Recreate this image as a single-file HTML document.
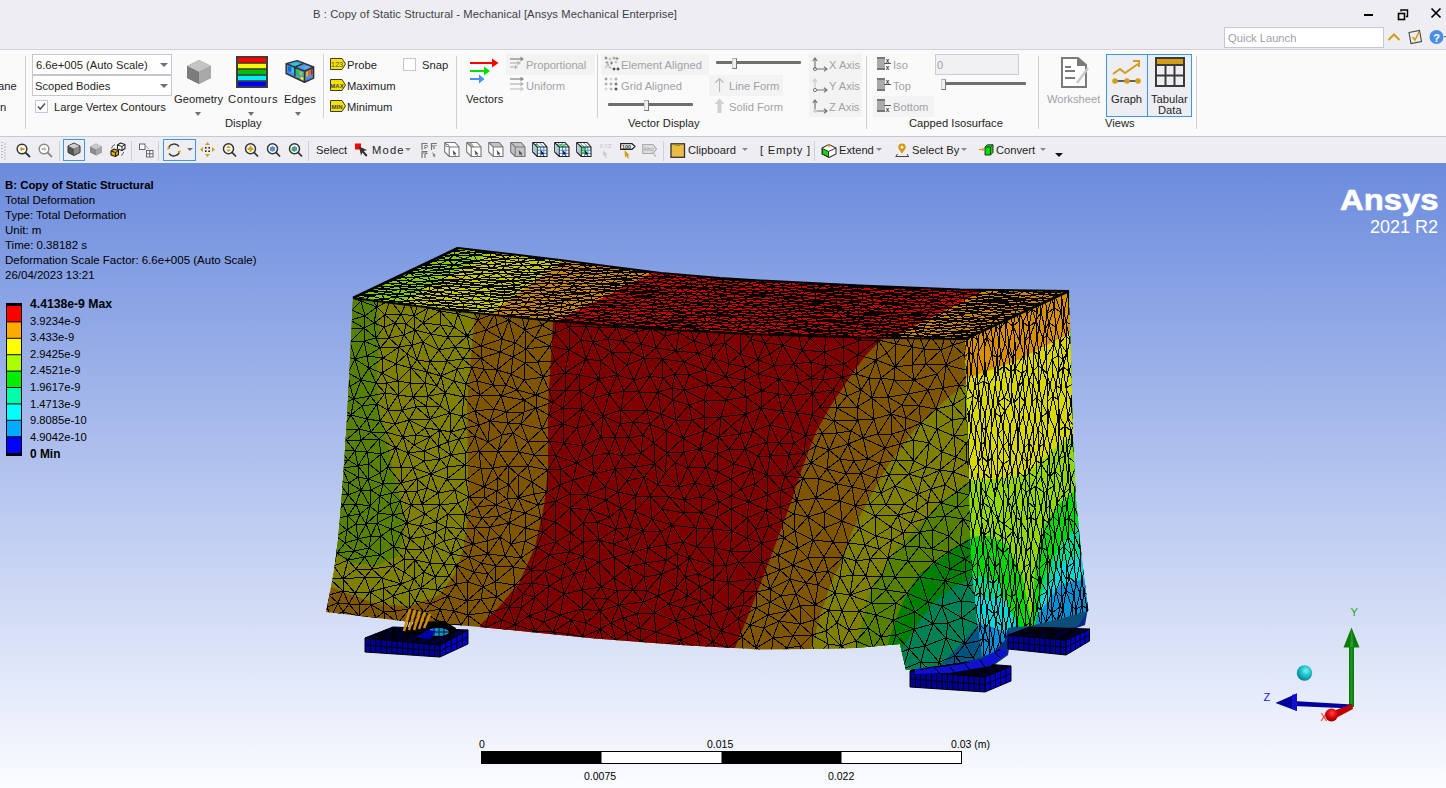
<!DOCTYPE html>
<html><head><meta charset="utf-8">
<style>
*{margin:0;padding:0;box-sizing:border-box}
html,body{width:1446px;height:788px;overflow:hidden;background:#eeeef2;font-family:"Liberation Sans",sans-serif;font-size:11.2px;color:#1e1e1e}
.a{position:absolute;white-space:nowrap}
.t{position:absolute;white-space:nowrap;font-size:11.2px;line-height:12px;color:#1e1e1e}
#title{position:absolute;left:0;top:0;width:1446px;height:49px;background:#eeeef2}
#ribbon{position:absolute;left:0;top:49px;width:1446px;height:88px;background:#fafafa;border-top:1px solid #d2d2d6;border-bottom:1px solid #c8c8cc}
#ribbon>*{margin-top:-50px}
#tb{position:absolute;left:0;top:137px;width:1446px;height:26px;background:#eeeef2;border-bottom:1px solid #f4efe8}
#vp{position:absolute;left:0;top:163px;width:1446px;height:625px;background:linear-gradient(#6b8bdd,#fbfcff);overflow:hidden}
.sep{position:absolute;width:1px;background:#cfcfd6}
.t.gray{color:#a2a2a6}
.dd{position:absolute;background:#fff;border:1px solid #c6c6d2}
.tri{position:absolute;width:0;height:0;border-left:4px solid transparent;border-right:4px solid transparent;border-top:4px solid #707070}
.vt{position:absolute;white-space:nowrap;color:#000;font-size:11.2px;line-height:12px}
</style></head><body>
<div id="title">
 <div class="t" style="left:313px;top:8px;color:#3d3d4a;letter-spacing:0.09px">B : Copy of Static Structural - Mechanical [Ansys Mechanical Enterprise]</div>
 <div class="a" style="left:1364px;top:14px;width:9px;height:2px;background:#000"></div>
 <svg class="a" style="left:1397px;top:8px" width="12" height="13" viewBox="0 0 12 13"><rect x="1.5" y="5.5" width="6" height="6" fill="none" stroke="#000" stroke-width="1.6"/><path d="M4 3.5V2h6.5v6.5H9" fill="none" stroke="#000" stroke-width="1.4"/></svg>
 <svg class="a" style="left:1430px;top:7px" width="12" height="12" viewBox="0 0 12 12"><path d="M1.5 1.5L10.5 10.5M10.5 1.5L1.5 10.5" stroke="#000" stroke-width="1.7"/></svg>
 <div class="a" style="left:1224px;top:27px;width:160px;height:21px;background:#fff;border:1px solid #c6c6d6"></div>
 <div class="t" style="left:1228px;top:32px;color:#a0a0a8">Quick Launch</div>
 <svg class="a" style="left:1387px;top:32px" width="14" height="10" viewBox="0 0 14 10"><path d="M1.5 8L7 2.5L12.5 8" fill="none" stroke="#d19e16" stroke-width="2"/></svg>
 <svg class="a" style="left:1407px;top:29px" width="16" height="16" viewBox="0 0 16 16"><path d="M2 3.5L12.5 1.5L14.5 12.5L4 14.5Z" fill="none" stroke="#444" stroke-width="1.1"/><path d="M5.5 8L8 11L12 3" fill="none" stroke="#d19e16" stroke-width="1.6"/></svg>
 <svg class="a" style="left:1429px;top:29px" width="17" height="16" viewBox="0 0 17 16"><circle cx="7.5" cy="8" r="7" fill="#4a90e2"/><text x="7.5" y="12.5" font-family="Liberation Sans" font-weight="bold" font-size="11" fill="#fff" text-anchor="middle">?</text><path d="M15 7h2l-1 1.5z" fill="#333"/></svg>
</div>
<div id="ribbon">
 <div class="t" style="left:-2px;top:80px">ane</div>
 <div class="t" style="left:0px;top:101px">n</div>
 <div class="sep" style="left:25px;top:56px;height:73px"></div>
 <!-- dropdowns -->
 <div class="dd" style="left:32px;top:54px;width:140px;height:21px"></div>
 <div class="t" style="left:36px;top:59px">6.6e+005 (Auto Scale)</div>
 <div class="tri" style="left:160px;top:63px"></div>
 <div class="dd" style="left:32px;top:75px;width:140px;height:21px"></div>
 <div class="t" style="left:35px;top:80px">Scoped Bodies</div>
 <div class="tri" style="left:160px;top:84px"></div>
 <div class="a" style="left:35px;top:100px;width:13px;height:13px;background:#fff;border:1px solid #c6c6d6"></div>
 <svg class="a" style="left:36px;top:101px" width="11" height="11" viewBox="0 0 11 11"><path d="M2 5.5L4.3 8L9 2.5" fill="none" stroke="#555" stroke-width="1.6"/></svg>
 <div class="t" style="left:54px;top:101px">Large Vertex Contours</div>
 <!-- display group -->
 <svg class="a" style="left:186px;top:59px" width="26" height="26" viewBox="0 0 26 26"><path d="M13 1L25 7V19L13 25L1 19V7Z" fill="#8a8a8a"/><path d="M13 1L25 7L13 13L1 7Z" fill="#c4c4c4"/><path d="M13 13L25 7V19L13 25Z" fill="#a8a8a8"/><path d="M1 7L13 13V25L1 19Z" fill="#7c7c7c"/></svg>
 <div class="t" style="left:174px;top:93px">Geometry</div>
 <div class="tri" style="left:195px;top:112px;border-left-width:3.5px;border-right-width:3.5px"></div>
 <svg class="a" style="left:236px;top:56px" width="32" height="32" viewBox="0 0 32 32"><rect x="0" y="0" width="32" height="32" fill="#3c3c3c"/><rect x="2" y="1.8" width="28" height="4.4" fill="#ff0000"/><rect x="2" y="7.8" width="28" height="4.4" fill="#f8f800"/><rect x="2" y="13.8" width="28" height="4.4" fill="#00c000"/><rect x="2" y="19.8" width="28" height="4.4" fill="#00f0f0"/><rect x="2" y="25.8" width="28" height="4.4" fill="#0000f8"/></svg>
 <div class="t" style="left:228px;top:93px;letter-spacing:0.6px">Contours</div>
 <div class="tri" style="left:248px;top:112px;border-left-width:3.5px;border-right-width:3.5px"></div>
 <svg class="a" style="left:282px;top:56px" width="36" height="30" viewBox="0 0 36 30"><path d="M4.2 7.6L15.2 4.6L31.6 11L22.8 15.2Z" fill="#4a9ae8"/><path d="M7 8L14 6.5L18 8.5L11 10Z" fill="#22ccd0"/><path d="M20 11L26 9.5L28 11.5L23 13Z" fill="#66aaee"/><path d="M4.2 7.6L22.8 15.2L22.5 26.3L4.2 17.5Z" fill="#4a90e8"/><path d="M6 10L9 11V16L6 15Z" fill="#2060e0"/><path d="M10 11.5L12 12.5V17.5L10 16.5Z" fill="#10e0d0"/><path d="M14.5 13.5L17 14.5V18.5L14.5 17.5Z" fill="#20d020"/><path d="M17.5 15L20.5 16V20L17.5 19Z" fill="#a0d010"/><path d="M14.5 19L17 20V23L14.5 22Z" fill="#30d030"/><path d="M18.5 20.5L21.5 21.5V24.5L18.5 23.5Z" fill="#f0f000"/><path d="M22.8 15.2L31.6 11V22.1L22.5 26.3Z" fill="#4a90e8"/><path d="M24 16L26 15V20L24 21Z" fill="#f0b000"/><path d="M26.5 14.5L28.5 13.5V19L26.5 20Z" fill="#ff6010"/><path d="M29 13.5L30.5 12.8V18L29 18.7Z" fill="#e01010"/><path d="M4.2 7.6L15.2 4.6L31.6 11V22.1L22.5 26.3L4.2 17.5Z M4.2 7.6L22.8 15.2L31.6 11M22.8 15.2L22.5 26.3M12.7 11.2L12.9 20.3M12.7 11.2L21.3 7.6" fill="none" stroke="#333" stroke-width="1.5" stroke-linejoin="round"/></svg>
 <div class="t" style="left:284px;top:93px">Edges</div>
 <div class="tri" style="left:295px;top:112px;border-left-width:3.5px;border-right-width:3.5px"></div>
 <div class="t" style="left:225px;top:117px">Display</div>
 <div class="sep" style="left:323px;top:54px;height:64px"></div>
 <!-- probe group -->
 <svg class="a" style="left:330px;top:58px" width="16" height="12" viewBox="0 0 16 12"><path d="M0.5 0.5H12L15.5 6L12 11.5H0.5Z" fill="#f4e200" stroke="#3a3a3a" stroke-width="1"/><text x="7" y="9" font-family="Liberation Sans" font-size="7.5" fill="#555" text-anchor="middle">123</text></svg>
 <div class="t" style="left:347px;top:59px">Probe</div>
 <svg class="a" style="left:330px;top:79px" width="16" height="12" viewBox="0 0 16 12"><path d="M0.5 0.5H12L15.5 6L12 11.5H0.5Z" fill="#f4e200" stroke="#3a3a3a" stroke-width="1"/><text x="7" y="8.5" font-family="Liberation Sans" font-weight="bold" font-size="6" fill="#444" text-anchor="middle">MAX</text></svg>
 <div class="t" style="left:347px;top:80px">Maximum</div>
 <svg class="a" style="left:330px;top:100px" width="16" height="12" viewBox="0 0 16 12"><path d="M0.5 0.5H12L15.5 6L12 11.5H0.5Z" fill="#f4e200" stroke="#3a3a3a" stroke-width="1"/><text x="7" y="8.5" font-family="Liberation Sans" font-weight="bold" font-size="6" fill="#444" text-anchor="middle">MIN</text></svg>
 <div class="t" style="left:347px;top:101px">Minimum</div>
 <div class="a" style="left:403px;top:58px;width:13px;height:13px;background:#fff;border:1px solid #c6c6d6"></div>
 <div class="t" style="left:422px;top:59px">Snap</div>
 <div class="sep" style="left:456px;top:56px;height:73px"></div>
 <!-- vectors -->
 <svg class="a" style="left:469px;top:57px" width="30" height="27" viewBox="0 0 30 27"><path d="M1 6H24" stroke="#ff0000" stroke-width="2"/><path d="M23 1.5L29.5 6L23 10.5Z" fill="#ff0000"/><path d="M1 14H16" stroke="#00e000" stroke-width="2"/><path d="M15 9.5L21 14L15 18.5Z" fill="#00e000"/><path d="M1 22H11" stroke="#4a90f0" stroke-width="2"/><path d="M10 17.5L15.5 22L10 26.5Z" fill="#4a90f0"/></svg>
 <div class="t" style="left:466px;top:93px">Vectors</div>
 <div class="a" style="left:506px;top:54px;width:89px;height:21px;background:#f3f3f3"></div>
 <svg class="a" style="left:510px;top:56px" width="15" height="15" viewBox="0 0 15 15"><path d="M0 3H12" stroke="#8a8a8a" stroke-width="1.3"/><path d="M10.5 0.5L14 3L10.5 5.5Z" fill="#8a8a8a"/><path d="M0 7H9" stroke="#b8b8b8" stroke-width="1.3"/><path d="M7.5 4.5L11 7L7.5 9.5Z" fill="#b8b8b8"/><path d="M0 11H6" stroke="#b8b8b8" stroke-width="1.3"/><path d="M5 8.5L8 11L5 13.5Z" fill="#b8b8b8"/></svg>
 <div class="t gray" style="left:526px;top:59px">Proportional</div>
 <svg class="a" style="left:510px;top:77px" width="15" height="15" viewBox="0 0 15 15"><path d="M0 2H12" stroke="#8a8a8a" stroke-width="1.3"/><path d="M10.5 -0.5L14 2L10.5 4.5Z" fill="#8a8a8a"/><path d="M0 7H12" stroke="#b8b8b8" stroke-width="1.3"/><path d="M10.5 4.5L14 7L10.5 9.5Z" fill="#b8b8b8"/><path d="M0 12H12" stroke="#c8c8c8" stroke-width="1.3"/><path d="M10.5 9.5L14 12L10.5 14.5Z" fill="#c8c8c8"/></svg>
 <div class="t gray" style="left:526px;top:80px">Uniform</div>
 <div class="sep" style="left:597px;top:54px;height:64px"></div>
 <!-- vector display -->
 <div class="a" style="left:601px;top:54px;width:108px;height:21px;background:#f3f3f3"></div>
 <svg class="a" style="left:604px;top:56px" width="16" height="16" viewBox="0 0 16 16"><path d="M0.5 2h3M2 0.5v3" stroke="#777" stroke-width="1"/><path d="M4.5 3h3M6 1.5v3" stroke="#bbb" stroke-width="1"/><path d="M8.5 2h3M10 0.5v3" stroke="#999" stroke-width="1"/><path d="M1.5 6.5h3M3 5.0v3" stroke="#999" stroke-width="1"/><path d="M6.0 7h3M7.5 5.5v3" stroke="#777" stroke-width="1"/><path d="M10.5 6h3M12 4.5v3" stroke="#bbb" stroke-width="1"/><path d="M0.5 11h3M2 9.5v3" stroke="#ccc" stroke-width="1"/><path d="M4.5 11.5h3M6 10.0v3" stroke="#bbb" stroke-width="1"/><path d="M8.5 13h3M10 11.5v3" stroke="#222" stroke-width="1"/><path d="M12.5 13h3M14 11.5v3" stroke="#222" stroke-width="1"/><path d="M11.5 2.5h3M13 1.0v3" stroke="#888" stroke-width="1"/><path d="M2.5 9h3M4 7.5v3" stroke="#aaa" stroke-width="1"/></svg>
 <div class="t gray" style="left:621px;top:59px">Element Aligned</div>
 <svg class="a" style="left:604px;top:77px" width="16" height="16" viewBox="0 0 16 16"><path d="M0.5 2h3M2 0.5v3" stroke="#888" stroke-width="1"/><path d="M5.5 2h3M7 0.5v3" stroke="#ccc" stroke-width="1"/><path d="M10.5 2h3M12 0.5v3" stroke="#999" stroke-width="1"/><path d="M0.5 7h3M2 5.5v3" stroke="#999" stroke-width="1"/><path d="M5.5 7h3M7 5.5v3" stroke="#999" stroke-width="1"/><path d="M10.5 7h3M12 5.5v3" stroke="#555" stroke-width="1"/><path d="M0.5 12h3M2 10.5v3" stroke="#ccc" stroke-width="1"/><path d="M5.5 12h3M7 10.5v3" stroke="#aaa" stroke-width="1"/><path d="M10.5 12h3M12 10.5v3" stroke="#222" stroke-width="1"/></svg>
 <div class="t gray" style="left:621px;top:80px">Grid Aligned</div>
 <div class="a" style="left:608px;top:103px;width:85px;height:3px;background:#6e6e6e;border-radius:1px"></div>
 <div class="a" style="left:644px;top:100px;width:5px;height:11px;background:#f0f0f0;border:1px solid #777;border-top-color:#aaa;border-left-color:#ccc"></div>
 <div class="t" style="left:628px;top:117px">Vector Display</div>
 <div class="a" style="left:716px;top:61px;width:85px;height:3px;background:#6e6e6e;border-radius:1px"></div>
 <div class="a" style="left:732px;top:58px;width:5px;height:11px;background:#f0f0f0;border:1px solid #777;border-top-color:#aaa;border-left-color:#ccc"></div>
 <div class="a" style="left:709px;top:75px;width:74px;height:21px;background:#f3f3f3"></div>
 <svg class="a" style="left:714px;top:77px" width="11" height="16" viewBox="0 0 11 16"><path d="M5.5 1.5V15M1.5 5.5L5.5 1.5L9.5 5.5" fill="none" stroke="#b8b8b8" stroke-width="1.2"/></svg>
 <div class="t gray" style="left:729px;top:80px">Line Form</div>
 <svg class="a" style="left:714px;top:98px" width="11" height="16" viewBox="0 0 11 16"><path d="M5.5 0.5L10.5 6H7.5V15H3.5V6H0.5Z" fill="#d0d0d0"/></svg>
 <div class="t gray" style="left:729px;top:101px">Solid Form</div>
 <div class="a" style="left:809px;top:54px;width:53px;height:63px;background:#f3f3f3"></div>
 <svg class="a" style="left:812px;top:57px" width="16" height="15" viewBox="0 0 16 15"><path d="M3 12V1.5M0.8 4L3 1L5.2 4M4.5 12H14M12 9.8L15 12L12 14.2" fill="none" stroke="#777" stroke-width="1.2"/><circle cx="3" cy="12" r="1.6" fill="none" stroke="#777" stroke-width="1"/></svg>
 <div class="t gray" style="left:829px;top:59px">X Axis</div>
 <svg class="a" style="left:812px;top:78px" width="16" height="15" viewBox="0 0 16 15"><path d="M3 10.5V1.5M0.8 4L3 1L5.2 4" fill="none" stroke="#ccc" stroke-width="1.2"/><path d="M4.5 12H14M12 9.8L15 12L12 14.2" fill="none" stroke="#777" stroke-width="1.2"/><circle cx="3" cy="12" r="1.6" fill="none" stroke="#777" stroke-width="1"/></svg>
 <div class="t gray" style="left:829px;top:80px">Y Axis</div>
 <svg class="a" style="left:812px;top:99px" width="16" height="15" viewBox="0 0 16 15"><path d="M3 10.5V1.5M0.8 4L3 1L5.2 4M4.5 12H14M12 9.8L15 12L12 14.2" fill="none" stroke="#777" stroke-width="1.2"/><circle cx="3" cy="12" r="1.8" fill="#ccc"/></svg>
 <div class="t gray" style="left:829px;top:101px">Z Axis</div>
 <div class="sep" style="left:866px;top:56px;height:73px"></div>
 <!-- capped isosurface -->
 <svg class="a" style="left:877px;top:57px" width="15" height="14" viewBox="0 0 15 14"><rect x="0" y="0" width="8" height="13" fill="#aaa"/><rect x="0" y="0" width="8" height="2" fill="#777"/><rect x="0" y="11" width="8" height="2" fill="#777"/><path d="M7 6.5H14" stroke="#555" stroke-width="1"/><text x="10.5" y="5.5" font-family="Liberation Sans" font-weight="bold" font-size="6.5" fill="#444" text-anchor="middle">x</text><text x="10.5" y="13" font-family="Liberation Sans" font-weight="bold" font-size="6.5" fill="#444" text-anchor="middle">x</text></svg>
 <div class="t gray" style="left:893px;top:59px">Iso</div>
 <div class="a" style="left:935px;top:54px;width:84px;height:21px;background:#f0f0f0;border:1px solid #c8cce0"></div>
 <div class="t gray" style="left:937px;top:59px">0</div>
 <svg class="a" style="left:877px;top:78px" width="15" height="14" viewBox="0 0 15 14"><rect x="0" y="0" width="8" height="13" fill="#aaa"/><rect x="0" y="0" width="8" height="2" fill="#777"/><rect x="0" y="11" width="8" height="2" fill="#777"/><path d="M7 6.5H14" stroke="#555" stroke-width="1"/><text x="10.5" y="5.5" font-family="Liberation Sans" font-weight="bold" font-size="6.5" fill="#444" text-anchor="middle">x</text></svg>
 <div class="t gray" style="left:893px;top:80px">Top</div>
 <div class="a" style="left:941px;top:82px;width:85px;height:3px;background:#6e6e6e;border-radius:1px"></div>
 <div class="a" style="left:941px;top:79px;width:5px;height:11px;background:#f0f0f0;border:1px solid #777;border-top-color:#aaa;border-left-color:#ccc"></div>
 <div class="a" style="left:873px;top:96px;width:61px;height:21px;background:#f3f3f3"></div>
 <svg class="a" style="left:877px;top:99px" width="15" height="14" viewBox="0 0 15 14"><rect x="0" y="0" width="8" height="13" fill="#aaa"/><rect x="0" y="0" width="8" height="2" fill="#777"/><rect x="0" y="11" width="8" height="2" fill="#777"/><path d="M7 6.5H14" stroke="#555" stroke-width="1"/><text x="10.5" y="13" font-family="Liberation Sans" font-weight="bold" font-size="6.5" fill="#444" text-anchor="middle">x</text></svg>
 <div class="t gray" style="left:893px;top:101px">Bottom</div>
 <div class="t" style="left:909px;top:117px">Capped Isosurface</div>
 <div class="sep" style="left:1038px;top:56px;height:73px"></div>
 <!-- views -->
 <svg class="a" style="left:1061px;top:57px" width="29" height="31" viewBox="0 0 29 31"><path d="M1 1H17L25 8V30H1Z" fill="#fff" stroke="#7a7a7a" stroke-width="2"/><path d="M17 1V8H25" fill="#7a7a7a" stroke="#7a7a7a" stroke-width="2"/><path d="M4 10H10M4 14H14M4 21H14" stroke="#7a7a7a" stroke-width="1.8"/><path d="M16 26L27 11" stroke="#c8c8c8" stroke-width="2.5"/></svg>
 <div class="t gray" style="left:1047px;top:93px">Worksheet</div>
 <div class="a" style="left:1106px;top:54px;width:42px;height:63px;background:#eeeef2;border:1px solid #3399ff"></div>
 <div class="a" style="left:1147px;top:54px;width:45px;height:63px;background:#eeeef2;border:1px solid #3399ff"></div>
 <svg class="a" style="left:1111px;top:59px" width="34" height="26" viewBox="0 0 34 26"><path d="M2 15L9 10L14 14L27 5" fill="none" stroke="#d19e16" stroke-width="2"/><path d="M22 2H28V8" fill="none" stroke="#d19e16" stroke-width="2"/><path d="M4 22H26" stroke="#333" stroke-width="1.5"/><circle cx="4" cy="22" r="2.8" fill="#d19e16"/><circle cx="16" cy="22" r="2.8" fill="#d19e16"/><circle cx="27" cy="22" r="2.8" fill="#d19e16"/></svg>
 <div class="t" style="left:1111px;top:93px">Graph</div>
 <svg class="a" style="left:1155px;top:57px" width="30" height="30" viewBox="0 0 30 30"><rect x="1" y="1" width="28" height="28" fill="#eeeef2" stroke="#3a3a3a" stroke-width="2"/><rect x="2" y="2" width="26" height="5" fill="#d19e16"/><path d="M1 8H29M1 18.5H29M10.5 8V29M19.5 8V29" stroke="#3a3a3a" stroke-width="2"/></svg>
 <div class="t" style="left:1151px;top:93px">Tabular</div>
 <div class="t" style="left:1158px;top:104px">Data</div>
 <div class="t" style="left:1105px;top:117px">Views</div>
 <div class="sep" style="left:1196px;top:56px;height:73px"></div>
</div>
<div id="tb">
 <svg class="a" style="left:1px;top:5px" width="6" height="18" viewBox="0 0 6 18"><g fill="#8a8a94"><rect x="0.5" y="0" width="1" height="1"/><rect x="0.5" y="3" width="1" height="1"/><rect x="0.5" y="6" width="1" height="1"/><rect x="0.5" y="9" width="1" height="1"/><rect x="0.5" y="12" width="1" height="1"/><rect x="0.5" y="15" width="1" height="1"/><rect x="3.5" y="1.5" width="1" height="1"/><rect x="3.5" y="4.5" width="1" height="1"/><rect x="3.5" y="7.5" width="1" height="1"/><rect x="3.5" y="10.5" width="1" height="1"/><rect x="3.5" y="13.5" width="1" height="1"/><rect x="3.5" y="16.5" width="1" height="1"/></g></svg>
 <svg class="a" style="left:16px;top:5px" width="16" height="16" viewBox="0 0 16 16"><circle cx="6" cy="7" r="4.8" fill="#fff" stroke="#333" stroke-width="1.5"/><path d="M9.5 10.5L14 15" stroke="#333" stroke-width="1.8"/><path d="M3.5 7L6 4.5V6H8.5V8H6V9.5Z" fill="#d19e16"/></svg>
 <svg class="a" style="left:38px;top:5px" width="16" height="16" viewBox="0 0 16 16"><circle cx="6" cy="7" r="4.8" fill="#fff" stroke="#8a8a8a" stroke-width="1.5"/><path d="M9.5 10.5L14 15" stroke="#8a8a8a" stroke-width="1.8"/><path d="M8.5 7L6 4.5V6H3.5V8H6V9.5Z" fill="#bbb"/></svg>
 <div class="sep" style="left:59px;top:4px;height:20px"></div>
 <div class="a" style="left:63px;top:2px;width:22px;height:22px;border:1px solid #3399ff"></div>
 <svg class="a" style="left:67px;top:5px" width="14" height="14" viewBox="0 0 14 14"><path d="M7 1L13 4V10.5L7 13.5L1 10.5V4Z" fill="#555" stroke="#333" stroke-width="1"/><path d="M7 1.5L12.5 4L7 6.8L1.5 4Z" fill="#cfcfcf"/><path d="M7 7L12.5 4.2V10.3L7 13Z" fill="#8a8a8a"/></svg>
 <svg class="a" style="left:89px;top:6px" width="14" height="13" viewBox="0 0 14 13"><path d="M7 0.5L13 3.5V9.5L7 12.5L1 9.5V3.5Z" fill="#8a8a8a"/><path d="M7 0.5L13 3.5L7 6.5L1 3.5Z" fill="#c8c8c8"/><path d="M7 6.5L13 3.5V9.5L7 12.5Z" fill="#a5a5a5"/></svg>
 <svg class="a" style="left:110px;top:5px" width="16" height="15" viewBox="0 0 16 15"><path d="M7.5 3L10.5 1L15 2.5V6.5L12 8.5L7.5 7Z" fill="#fff" stroke="#222" stroke-width="1.1" stroke-linejoin="round"/><path d="M7.5 3L12 4.5L15 2.5M12 4.5V8.5" fill="none" stroke="#222" stroke-width="1"/><path d="M1 9L4 7L8.5 8.5V12.5L5.5 14.5L1 13Z" fill="#e0a810" stroke="#222" stroke-width="1.1" stroke-linejoin="round"/><path d="M1 9L5.5 10.5L8.5 8.5M5.5 10.5V14.5" fill="none" stroke="#222" stroke-width="1"/><path d="M1.5 6.5Q2 3.5 5 2.5M13.5 10Q13.5 12.5 11 13.5" fill="none" stroke="#555" stroke-width="0.9"/></svg>
 <div class="sep" style="left:131px;top:4px;height:20px"></div>
 <svg class="a" style="left:138px;top:6px" width="17" height="15" viewBox="0 0 17 15"><rect x="1.5" y="1" width="5.5" height="5.5" fill="#fff" stroke="#666" stroke-width="1"/><path d="M8 3L11 6" stroke="#aaa" stroke-width="1"/><rect x="8.5" y="7.5" width="6.5" height="6.5" fill="#fff" stroke="#666" stroke-width="1"/><path d="M11.75 7.5V14M8.5 10.75H15" stroke="#666" stroke-width="1"/></svg>
 <div class="sep" style="left:158px;top:4px;height:20px"></div>
 <div class="a" style="left:163px;top:2px;width:33px;height:22px;border:1px solid #3399ff"></div>
 <svg class="a" style="left:166px;top:5px" width="16" height="16" viewBox="0 0 16 16"><path d="M2.5 6A6 6 0 0 1 13 4.5M13.5 10A6 6 0 0 1 3 11.5" fill="none" stroke="#333" stroke-width="1.3"/><path d="M1 7.5L2.5 4L4.5 7Z" fill="#d19e16"/><path d="M15 8.5L13.5 12L11.5 9Z" fill="#d19e16"/></svg>
 <div class="tri" style="left:187px;top:11px;border-left-width:3px;border-right-width:3px;border-top-width:3.5px"></div>
 <svg class="a" style="left:200px;top:5px" width="15" height="15" viewBox="0 0 15 15"><path d="M7.5 0L10 3H5Z M7.5 15L10 12H5Z M0 7.5L3 5V10Z M15 7.5L12 5V10Z" fill="#d19e16"/><g fill="#222"><rect x="5" y="5" width="1.6" height="1.6"/><rect x="8.4" y="5" width="1.6" height="1.6"/><rect x="5" y="8.4" width="1.6" height="1.6"/><rect x="8.4" y="8.4" width="1.6" height="1.6"/></g></svg>
 <svg class="a" style="left:222px;top:5px" width="16" height="16" viewBox="0 0 16 16"><circle cx="6.5" cy="6.8" r="5" fill="#fff" stroke="#333" stroke-width="1.5"/><path d="M10 10.3L14 14.5" stroke="#333" stroke-width="1.8"/><path d="M6.5 3.5L9 6H4Z M6.5 10L9 7.5H4Z" fill="#d19e16"/></svg>
 <svg class="a" style="left:244px;top:5px" width="16" height="16" viewBox="0 0 16 16"><circle cx="6.5" cy="6.8" r="5" fill="#fff" stroke="#333" stroke-width="1.5"/><path d="M10 10.3L14 14.5" stroke="#333" stroke-width="1.8"/><path d="M6.5 3.8V9.8M3.5 6.8H9.5" stroke="#d19e16" stroke-width="2.2"/></svg>
 <svg class="a" style="left:266px;top:5px" width="16" height="16" viewBox="0 0 16 16"><circle cx="6.5" cy="6.8" r="5" fill="#fff" stroke="#333" stroke-width="1.5"/><path d="M10 10.3L14 14.5" stroke="#333" stroke-width="1.8"/><path d="M6.5 4L9.2 5.4V8.4L6.5 9.8L3.8 8.4V5.4Z" fill="#5a90d0"/></svg>
 <svg class="a" style="left:288px;top:5px" width="16" height="16" viewBox="0 0 16 16"><circle cx="6.5" cy="6.8" r="5" fill="#fff" stroke="#333" stroke-width="1.5"/><path d="M10 10.3L14 14.5" stroke="#333" stroke-width="1.8"/><path d="M6.5 4L9.2 5.4V8.4L6.5 9.8L3.8 8.4V5.4Z" fill="#5a90d0"/><path d="M3.8 5.4L6.5 6.8V9.8L3.8 8.4Z" fill="#22bb22"/></svg>
 <div class="sep" style="left:308px;top:4px;height:20px"></div>
 <div class="t" style="left:316px;top:7px">Select</div>
 <svg class="a" style="left:354px;top:6px" width="16" height="15" viewBox="0 0 16 15"><rect x="1" y="0.5" width="6" height="6" fill="#ff0000"/><path d="M5 3.5L13 7L9.8 8L13.5 12.3L12 13.8L8.3 9.5L7 12.5Z" fill="#333"/></svg>
 <div class="t" style="left:372px;top:7px;letter-spacing:1.2px">Mode</div>
 <div class="tri" style="left:405px;top:11px;border-left-width:3px;border-right-width:3px;border-top-width:3px;border-top-color:#888"></div>
 <svg class="a" style="left:421px;top:5px" width="17" height="17" viewBox="0 0 17 17"><g fill="none" stroke="#777" stroke-width="1.2"><path d="M1 8V1.5H6.5M10.5 8V1.5H16M1 16V9.5H6.5"/><path d="M4 3.5H6.5M4 3.5V7M13 3.5H15.5M13 3.5V7M4 11.5H6.5M4 11.5V16"/></g><path d="M11 3H16V4H12V5H11Z" fill="#aaa"/><path d="M2 10H6V11H3V12H2Z" fill="#aaa"/><ellipse cx="5" cy="4.5" rx="1.5" ry="1.1" fill="#fff" stroke="#777" stroke-width="0.9"/><path d="M11.5 10L15 13.5L13.7 13.6L14.5 15.2L13.8 15.6L13 14L12 15Z" fill="#888"/></svg>
 <svg class="a" style="left:444px;top:5px" width="17" height="16" viewBox="0 0 17 16"><path d="M0.7000000000000002 0.8L1.2000000000000002 0.5H11.0L15.0 5.0H5.2Z" fill="#fff"/><path d="M0.7000000000000002 0.8L5.2 5.0V14.5L0.7000000000000002 10.0Z" fill="#fff"/><path d="M5.2 5.0H15.0V14.5H5.2Z" fill="#fff"/><path d="M0.7000000000000002 0.8L1.2000000000000002 0.5H11.0L15.0 5.0V14.5H5.2L0.7000000000000002 10.0Z M1.0000000000000002 0.8L5.2 5.0H15.0M5.2 5.0V14.5" fill="none" stroke="#777" stroke-width="1.1"/><ellipse cx="3.2" cy="3.5" rx="1.6" ry="1.1" fill="#fff" stroke="#777" stroke-width="0.9"/><path d="M8.7 8.0L12.5 11.8L11.100000000000001 11.9L12.0 13.6L11.2 14.0L10.4 12.3L9.4 13.2Z" fill="#555"/></svg>
 <svg class="a" style="left:466px;top:5px" width="17" height="16" viewBox="0 0 17 16"><path d="M0.7000000000000002 0.8L1.2000000000000002 0.5H11.0L15.0 5.0H5.2Z" fill="#fff"/><path d="M0.7000000000000002 0.8L5.2 5.0V14.5L0.7000000000000002 10.0Z" fill="#fff"/><path d="M5.2 5.0H15.0V14.5H5.2Z" fill="#fff"/><path d="M1.2000000000000002 0.5H5.7L8.2 5.0H5.2Z" fill="#aaa"/><path d="M0.7000000000000002 0.8L1.2000000000000002 0.5H11.0L15.0 5.0V14.5H5.2L0.7000000000000002 10.0Z M1.0000000000000002 0.8L5.2 5.0H15.0M5.2 5.0V14.5" fill="none" stroke="#777" stroke-width="1.1"/><path d="M8.7 8.0L12.5 11.8L11.100000000000001 11.9L12.0 13.6L11.2 14.0L10.4 12.3L9.4 13.2Z" fill="#555"/></svg>
 <svg class="a" style="left:488px;top:5px" width="17" height="16" viewBox="0 0 17 16"><path d="M0.7000000000000002 0.8L1.2000000000000002 0.5H11.0L15.0 5.0H5.2Z" fill="#c4c4c4"/><path d="M0.7000000000000002 0.8L5.2 5.0V14.5L0.7000000000000002 10.0Z" fill="#fff"/><path d="M5.2 5.0H15.0V14.5H5.2Z" fill="#fff"/><path d="M0.7000000000000002 0.8L1.2000000000000002 0.5H11.0L15.0 5.0V14.5H5.2L0.7000000000000002 10.0Z M1.0000000000000002 0.8L5.2 5.0H15.0M5.2 5.0V14.5" fill="none" stroke="#777" stroke-width="1.1"/><path d="M8.7 8.0L12.5 11.8L11.100000000000001 11.9L12.0 13.6L11.2 14.0L10.4 12.3L9.4 13.2Z" fill="#555"/></svg>
 <svg class="a" style="left:510px;top:5px" width="17" height="16" viewBox="0 0 17 16"><path d="M0.7000000000000002 0.8L1.2000000000000002 0.5H11.0L15.0 5.0H5.2Z" fill="#c4c4c4"/><path d="M0.7000000000000002 0.8L5.2 5.0V14.5L0.7000000000000002 10.0Z" fill="#c4c4c4"/><path d="M5.2 5.0H15.0V14.5H5.2Z" fill="#c4c4c4"/><path d="M0.7000000000000002 0.8L1.2000000000000002 0.5H11.0L15.0 5.0V14.5H5.2L0.7000000000000002 10.0Z M1.0000000000000002 0.8L5.2 5.0H15.0M5.2 5.0V14.5" fill="none" stroke="#777" stroke-width="1.1"/><path d="M8.7 8.0L12.5 11.8L11.100000000000001 11.9L12.0 13.6L11.2 14.0L10.4 12.3L9.4 13.2Z" fill="#555"/></svg>
 <svg class="a" style="left:532px;top:5px" width="17" height="16" viewBox="0 0 17 16"><path d="M0.7000000000000002 0.8L1.2000000000000002 0.5H11.0L15.0 5.0H5.2Z" fill="#fff"/><path d="M0.7000000000000002 0.8L5.2 5.0V14.5L0.7000000000000002 10.0Z" fill="#fff"/><path d="M5.2 5.0H15.0V14.5H5.2Z" fill="#fff"/><path d="M8.5 5.0V14.5M11.8 5.0V14.5M5.2 8.2H15.0M5.2 11.4H15.0M3.0 3.5V12.5M3.7 0.5L8.2 5.0M7.2 0.5L11.7 5.0" stroke="#3388ee" stroke-width="0.9" fill="none"/><path d="M3.2 2.7h2.5" stroke="#11cc11" stroke-width="1.6"/><path d="M0.7000000000000002 0.8L1.2000000000000002 0.5H11.0L15.0 5.0V14.5H5.2L0.7000000000000002 10.0Z M1.0000000000000002 0.8L5.2 5.0H15.0M5.2 5.0V14.5" fill="none" stroke="#222" stroke-width="1.1"/><path d="M8.7 8.0L12.5 11.8L11.100000000000001 11.9L12.0 13.6L11.2 14.0L10.4 12.3L9.4 13.2Z" fill="#222"/></svg>
 <svg class="a" style="left:554px;top:5px" width="17" height="16" viewBox="0 0 17 16"><path d="M0.7000000000000002 0.8L1.2000000000000002 0.5H11.0L15.0 5.0H5.2Z" fill="#fff"/><path d="M0.7000000000000002 0.8L5.2 5.0V14.5L0.7000000000000002 10.0Z" fill="#fff"/><path d="M5.2 5.0H15.0V14.5H5.2Z" fill="#fff"/><path d="M8.5 5.0V14.5M11.8 5.0V14.5M5.2 8.2H15.0M5.2 11.4H15.0M3.0 3.5V12.5M3.7 0.5L8.2 5.0M7.2 0.5L11.7 5.0" stroke="#3388ee" stroke-width="0.9" fill="none"/><path d="M2.2 2.6h2.2M6.2 2.6h2.2M10.2 2.6h2.2M3.7 4.2h2.2M7.7 4.2h2.2" stroke="#11cc11" stroke-width="1.4"/><path d="M0.7000000000000002 0.8L1.2000000000000002 0.5H11.0L15.0 5.0V14.5H5.2L0.7000000000000002 10.0Z M1.0000000000000002 0.8L5.2 5.0H15.0M5.2 5.0V14.5" fill="none" stroke="#222" stroke-width="1.1"/><path d="M8.7 8.0L12.5 11.8L11.100000000000001 11.9L12.0 13.6L11.2 14.0L10.4 12.3L9.4 13.2Z" fill="#222"/></svg>
 <svg class="a" style="left:576px;top:5px" width="17" height="16" viewBox="0 0 17 16"><path d="M0.7000000000000002 0.8L1.2000000000000002 0.5H11.0L15.0 5.0H5.2Z" fill="#fff"/><path d="M0.7000000000000002 0.8L5.2 5.0V14.5L0.7000000000000002 10.0Z" fill="#fff"/><path d="M5.2 5.0H15.0V14.5H5.2Z" fill="#fff"/><path d="M8.5 5.0V14.5M11.8 5.0V14.5M5.2 8.2H15.0M5.2 11.4H15.0M3.0 3.5V12.5M3.7 0.5L8.2 5.0M7.2 0.5L11.7 5.0" stroke="#3388ee" stroke-width="0.9" fill="none"/><path d="M6.2 6.0h1.6M8.7 6.0h1.6M6.2 8.5h1.6M8.7 8.5h1.6M6.2 11.0h1.6M8.7 11.0h1.6M3.7 4.0h1.6" stroke="#11cc11" stroke-width="1.8"/><path d="M0.7000000000000002 0.8L1.2000000000000002 0.5H11.0L15.0 5.0V14.5H5.2L0.7000000000000002 10.0Z M1.0000000000000002 0.8L5.2 5.0H15.0M5.2 5.0V14.5" fill="none" stroke="#222" stroke-width="1.1"/><path d="M8.7 8.0L12.5 11.8L11.100000000000001 11.9L12.0 13.6L11.2 14.0L10.4 12.3L9.4 13.2Z" fill="#222"/></svg>
 <svg class="a" style="left:597px;top:6px" width="17" height="16" viewBox="0 0 17 16"><text x="8.5" y="4.5" font-family="Liberation Sans" font-size="5" fill="#bbb" text-anchor="middle">X.Y.Z</text><path d="M6 7L10.5 11.5L8.8 11.8L10 14.5L8.8 15L7.6 12.3L6.3 13.3Z" fill="#ccc"/></svg>
 <svg class="a" style="left:620px;top:6px" width="16" height="16" viewBox="0 0 16 16"><path d="M0.7 0.7H12L15 3.5L12 6.3H0.7Z" fill="#fff" stroke="#222" stroke-width="1.2"/><text x="6.5" y="5.5" font-family="Liberation Sans" font-weight="bold" font-size="5.5" fill="#222" text-anchor="middle">100</text><path d="M4.5 7L9.5 12.3L7.8 12.5L9 15L7.8 15.5L6.5 13L5 14.5Z" fill="#d19e16"/></svg>
 <svg class="a" style="left:642px;top:6px" width="16" height="16" viewBox="0 0 16 16"><path d="M0.7 1.5H11L14.5 6L11 10.5H0.7Z" fill="#ddd" stroke="#aaa" stroke-width="1.1"/><text x="6.5" y="8" font-family="Liberation Sans" font-size="6" fill="#999" text-anchor="middle">Abc</text><path d="M10 9L14 13.5" stroke="#bbb" stroke-width="1.5"/></svg>
 <div class="sep" style="left:663px;top:4px;height:20px"></div>
 <svg class="a" style="left:670px;top:6px" width="16" height="15" viewBox="0 0 16 15"><rect x="1" y="0.8" width="13.5" height="13.5" fill="#e9bd45" stroke="#333" stroke-width="1.3"/><path d="M5 1.5H10.5V3H5Z" fill="#b08820"/></svg>
 <div class="t" style="left:688px;top:7px">Clipboard</div>
 <div class="tri" style="left:742px;top:11px;border-left-width:3px;border-right-width:3px;border-top-width:3px;border-top-color:#888"></div>
 <div class="t" style="left:760px;top:7px;letter-spacing:0.75px">[ Empty ]</div>
 <div class="sep" style="left:814px;top:4px;height:20px"></div>
 <svg class="a" style="left:821px;top:5px" width="16" height="16" viewBox="0 0 16 16"><path d="M1 6L8 2.5L15 6V12L8 15.5L1 12Z" fill="#fff" stroke="#333" stroke-width="1.1"/><path d="M1.5 6.5L7.5 9.5V15L1.5 12Z" fill="#00dd00" stroke="#333" stroke-width="1"/><path d="M7.5 9.5L15 6" stroke="#333" stroke-width="1"/><path d="M8 2V5.5M6.3 3.75H9.7" stroke="#d19e16" stroke-width="1.2"/></svg>
 <div class="t" style="left:839px;top:7px">Extend</div>
 <div class="tri" style="left:876px;top:11px;border-left-width:3px;border-right-width:3px;border-top-width:3px;border-top-color:#888"></div>
 <svg class="a" style="left:895px;top:6px" width="15" height="15" viewBox="0 0 15 15"><path d="M7 10.5C4 6.5 3.2 5.5 3.2 4.2A3.8 3.8 0 0 1 10.8 4.2C10.8 5.5 10 6.5 7 10.5Z" fill="#d19e16"/><circle cx="7" cy="4.2" r="1.3" fill="#fff"/><path d="M0.5 13.5H14M1 13.5L2.5 11M13.5 13.5L12 11" stroke="#444" stroke-width="1" fill="none"/></svg>
 <div class="t" style="left:912px;top:7px">Select By</div>
 <div class="tri" style="left:961px;top:11px;border-left-width:3px;border-right-width:3px;border-top-width:3px;border-top-color:#888"></div>
 <svg class="a" style="left:979px;top:7px" width="15" height="12" viewBox="0 0 15 12"><path d="M0 5.5H4" stroke="#d19e16" stroke-width="1.2"/><path d="M3.5 3.5L5.5 5.5L3.5 7.5Z" fill="#d19e16"/><path d="M6 3L8.5 0.8H14V8.5L11.5 11H6Z" fill="#00dd00" stroke="#333" stroke-width="1"/><path d="M6 3H11.5V11M11.5 3L14 0.8" fill="none" stroke="#333" stroke-width="1"/></svg>
 <div class="t" style="left:996px;top:7px">Convert</div>
 <div class="tri" style="left:1040px;top:11px;border-left-width:3px;border-right-width:3px;border-top-width:3px;border-top-color:#888"></div>
 <div class="tri" style="left:1055px;top:16px;border-left-width:4px;border-right-width:4px;border-top-width:4.5px;border-top-color:#111"></div>
</div>
<div id="vp">
<svg class="a" style="left:0;top:0" width="1446" height="625" viewBox="0 163 1446 625">
<defs>
<clipPath id="cf"><polygon points="353,298 400,304 476,313 553,321 660,329.5 760,334.5 860,337.5 965,339 968,450 971,560 976,613 982,657 960,662 941,665 906,670 900,644 856,648 811,649 760,649.5 680,645 595,638.5 530,632 469,626 411,622 326,612 330,592 334,571 338,540 341,506 344,465 347,419 350,360"/></clipPath>
<clipPath id="ct"><polygon points="353,298 400,304 476,313 553,321 660,329.5 760,334.5 860,337.5 965,339 1069,291 960,289.5 860,285.5 760,280.5 720,278 661,273 610,266.5 560,260 510,254 458,248"/></clipPath>
<clipPath id="cr"><polygon points="965,339 1069,291 1071,360 1073,440 1076,501 1082,560 1088.5,611 1060,619 1030,626 1008,628 1005,640 994,652 982,657 976,613 971,560 968,450"/></clipPath>
</defs>
<polygon points="970,600 1008,622 1088,608 1085,625 1060,634 1010,642 1008,655 990,668 941,674 912,674 909,660" fill="#0a2a8a" />
<polygon points="1008,628 1088,611 1078,626 1040,636 1012,641" fill="#0d4d7a" />
<polygon points="365,638 393,627 468,630 440,645" fill="#0000b8" />
<polygon points="365,638 440,645 440,657 365,652" fill="#000094" />
<polygon points="440,645 468,630 468,644 440,657" fill="#0000c8" />
<path d="M365.0 638.0L365.0 652.0M370.4 638.5L370.4 652.4M375.7 639.0L375.7 652.7M381.1 639.5L381.1 653.1M386.4 640.0L386.4 653.4M391.8 640.5L391.8 653.8M397.1 641.0L397.1 654.1M402.5 641.5L402.5 654.5M407.9 642.0L407.9 654.9M413.2 642.5L413.2 655.2M418.6 643.0L418.6 655.6M423.9 643.5L423.9 655.9M429.3 644.0L429.3 656.3M434.6 644.5L434.6 656.6M440.0 645.0L440.0 657.0M365.0 638.0L440.0 645.0M365.0 645.0L440.0 651.0M365.0 652.0L440.0 657.0M440.0 645.0L440.0 657.0M445.6 642.0L445.6 654.4M451.2 639.0L451.2 651.8M456.8 636.0L456.8 649.2M462.4 633.0L462.4 646.6M468.0 630.0L468.0 644.0M440.0 645.0L468.0 630.0M440.0 651.0L468.0 637.0M440.0 657.0L468.0 644.0M365.0 638.0L440.0 645.0M367.0 637.2L442.0 643.9M369.0 636.4L444.0 642.9M371.0 635.6L446.0 641.8M373.0 634.9L448.0 640.7M375.0 634.1L450.0 639.6M377.0 633.3L452.0 638.6M379.0 632.5L454.0 637.5M381.0 631.7L456.0 636.4M383.0 630.9L458.0 635.4M385.0 630.1L460.0 634.3M387.0 629.4L462.0 633.2M389.0 628.6L464.0 632.1M391.0 627.8L466.0 631.1M393.0 627.0L468.0 630.0M365.0 638.0L393.0 627.0M380.0 639.4L408.0 627.6M395.0 640.8L423.0 628.2M410.0 642.2L438.0 628.8M425.0 643.6L453.0 629.4M440.0 645.0L468.0 630.0" stroke="#000" stroke-width="1" fill="none"/>
<polygon points="1008,635 1030,627 1089.5,629 1066,640" fill="#0000b8" />
<polygon points="1008,635 1066,640 1066,655 1008,649" fill="#000094" />
<polygon points="1066,640 1089.5,629 1089.5,641 1066,655" fill="#0000c8" />
<path d="M1008.0 635.0L1008.0 649.0M1013.3 635.5L1013.3 649.5M1018.5 635.9L1018.5 650.1M1023.8 636.4L1023.8 650.6M1029.1 636.8L1029.1 651.2M1034.4 637.3L1034.4 651.7M1039.6 637.7L1039.6 652.3M1044.9 638.2L1044.9 652.8M1050.2 638.6L1050.2 653.4M1055.5 639.1L1055.5 653.9M1060.7 639.5L1060.7 654.5M1066.0 640.0L1066.0 655.0M1008.0 635.0L1066.0 640.0M1008.0 642.0L1066.0 647.5M1008.0 649.0L1066.0 655.0M1066.0 640.0L1066.0 655.0M1070.7 637.8L1070.7 652.2M1075.4 635.6L1075.4 649.4M1080.1 633.4L1080.1 646.6M1084.8 631.2L1084.8 643.8M1089.5 629.0L1089.5 641.0M1066.0 640.0L1089.5 629.0M1066.0 647.5L1089.5 635.0M1066.0 655.0L1089.5 641.0M1008.0 635.0L1066.0 640.0M1010.0 634.3L1068.1 639.0M1012.0 633.5L1070.3 638.0M1014.0 632.8L1072.4 637.0M1016.0 632.1L1074.5 636.0M1018.0 631.4L1076.7 635.0M1020.0 630.6L1078.8 634.0M1022.0 629.9L1081.0 633.0M1024.0 629.2L1083.1 632.0M1026.0 628.5L1085.2 631.0M1028.0 627.7L1087.4 630.0M1030.0 627.0L1089.5 629.0M1008.0 635.0L1030.0 627.0M1019.6 636.0L1041.9 627.4M1031.2 637.0L1053.8 627.8M1042.8 638.0L1065.7 628.2M1054.4 639.0L1077.6 628.6M1066.0 640.0L1089.5 629.0" stroke="#000" stroke-width="1" fill="none"/>
<polygon points="910,671 935,660 1011,666 985,677" fill="#0000b8" />
<polygon points="910,671 985,677 985,692 910,687" fill="#000094" />
<polygon points="985,677 1011,666 1011,681 985,692" fill="#0000c8" />
<path d="M910.0 671.0L910.0 687.0M915.4 671.4L915.4 687.4M920.7 671.9L920.7 687.7M926.1 672.3L926.1 688.1M931.4 672.7L931.4 688.4M936.8 673.1L936.8 688.8M942.1 673.6L942.1 689.1M947.5 674.0L947.5 689.5M952.9 674.4L952.9 689.9M958.2 674.9L958.2 690.2M963.6 675.3L963.6 690.6M968.9 675.7L968.9 690.9M974.3 676.1L974.3 691.3M979.6 676.6L979.6 691.6M985.0 677.0L985.0 692.0M910.0 671.0L985.0 677.0M910.0 679.0L985.0 684.5M910.0 687.0L985.0 692.0M985.0 677.0L985.0 692.0M990.2 674.8L990.2 689.8M995.4 672.6L995.4 687.6M1000.6 670.4L1000.6 685.4M1005.8 668.2L1005.8 683.2M1011.0 666.0L1011.0 681.0M985.0 677.0L1011.0 666.0M985.0 684.5L1011.0 673.5M985.0 692.0L1011.0 681.0M910.0 671.0L985.0 677.0M911.8 670.2L986.9 676.2M913.6 669.4L988.7 675.4M915.4 668.6L990.6 674.6M917.1 667.9L992.4 673.9M918.9 667.1L994.3 673.1M920.7 666.3L996.1 672.3M922.5 665.5L998.0 671.5M924.3 664.7L999.9 670.7M926.1 663.9L1001.7 669.9M927.9 663.1L1003.6 669.1M929.6 662.4L1005.4 668.4M931.4 661.6L1007.3 667.6M933.2 660.8L1009.1 666.8M935.0 660.0L1011.0 666.0M910.0 671.0L935.0 660.0M925.0 672.2L950.2 661.2M940.0 673.4L965.4 662.4M955.0 674.6L980.6 663.6M970.0 675.8L995.8 664.8M985.0 677.0L1011.0 666.0" stroke="#000" stroke-width="1" fill="none"/>
<polygon points="915,668 941,667 962,664 984,659 1000,648 1008,652 990,666 950,673 915,674" fill="#1010d0" />
<path d="M920 670L1000 650M935 668L940 674M950 667L955 673M965 664L970 670M980 660L985 667M995 652L1000 658" stroke="#000" stroke-width="1" fill="none"/>
<g clip-path="url(#ct)">
<polygon points="340,240 1080,240 1080,345 340,345" fill="#c98600" />
<polygon points="340,240 560,240 560,262 490,314 340,345" fill="#c9c900" />
<polygon points="340,240 490,240 490,253 400,303 340,345" fill="#86c900" />
<polygon points="650,240 650,274 556,321 556,345 895,345 895,336 983,291 983,240" fill="#c90000" />
</g>
<g clip-path="url(#cf)">
<polygon points="320,290 1000,290 1000,700 320,700" fill="#805500" />
<polygon points="475,290 475,313 471,358 467,404 468,470 469,505 464,547 455,574 439,595 411,606 377,604 343,592 329,586 320,584 320,290" fill="#808000" />
<polygon points="377,290 377,300 380,336 377,370 378,404 386,438 393,470 402,506 404,535 398,556 377,565 350,563 338,556 320,550 320,290" fill="#558000" />
<polygon points="553,290 553,322 551,358 548,404 548,470 544,506 535,547 519,583 498,608 480,625 470,700 730,700 735,648 748,616 762,580 776,543 790,505 803,466 811,445 816,432 830,407 842,389 854,371 866,355 882,339 882,290" fill="#800000" />
<polygon points="1000,370 968,382 942,403 913,432 889,464 869,499 851,534 843,560 832,580 820,616 811,649 805,700 1000,700" fill="#808000" />
<polygon points="1000,475 968,482 940,502 918,527 897,548 876,580 867,600 864,616 856,648 850,700 1000,700" fill="#558000" />
<polygon points="1000,530 968,539 940,559 918,575 904,600 894,624 888,644 880,700 1000,700" fill="#008000" />
<polygon points="1000,570 977,575 954,587 936,600 920,620 900,652 895,700 1000,700" fill="#008055" />
<polygon points="1000,615 979,624 961,644 941,664 930,700 1000,700" fill="#005580" />
</g>
<g clip-path="url(#cr)">
<polygon points="960,285 1100,285 1100,700 960,700" fill="#0090d9" />
<polygon points="960,285 1100,285 1100,575 1060,585 1040,612 1005,632 990,626 960,620" fill="#00d9d9" />
<polygon points="960,285 1100,285 1100,545 1060,565 1045,590 1020,605 1000,600 960,594" fill="#00d990" />
<polygon points="960,285 1100,285 1100,522 1078,525 1059,547 1045,575 1035,626 1020,628 1010,610 998,580 960,572" fill="#00d900" />
<polygon points="960,285 1100,285 1100,485 1076,490 1059,504 1045,525 1036,560 1031,620 1022,575 1006,544 990,536 960,537" fill="#90d900" />
<polygon points="960,285 1100,285 1100,428 1073,435 1055,448 1029,473 1006,478 960,481" fill="#d9d900" />
<polygon points="960,285 1100,285 1100,325 1070,333 1016,361 965,379 960,380" fill="#d99000" />
<polygon points="1008,628 1030,626 1060,619 1088.5,611 1080,622 1050,632 1010,640" fill="#00406a" />
</g>
<path clip-path="url(#cf)" d="M987 292 975 299 956 307 941 308 935 325 949 322 956 307 960 288 975 299 974 285 896 285 829 286 769 286 703 286 671 290 657 306 647 315 640 298 657 306 666 317 689 324 685 309 666 317 647 315 627 317 640 298 625 301 627 317 636 332 647 315 651 328 641 344 631 352 622 341 641 344 656 348 676 351 698 353 713 358 729 364 746 367 740 354 740 330 746 314 738 303 735 288 703 286 698 311 689 324 704 326 694 341 689 324 679 333 676 351 694 341 698 353 684 362 689 375 708 385 726 400 721 417 731 426 719 437 721 417 746 414 753 431 770 425 761 408 753 431 740 434 731 426 746 414 761 408 762 391 744 380 746 367 758 374 774 366 770 354 758 360 774 366 794 364 811 378 799 383 794 364 802 350 798 332 815 318 793 317 773 317 790 304 793 317 798 332 776 332 773 317 762 307 746 314 730 312 738 303 751 300 746 314 756 327 773 317 775 300 790 304 783 289 769 286 762 307 775 300 769 286 896 285 898 300 914 307 912 293 898 300 881 305 869 326 856 322 864 311 869 326 878 340 876 360 856 374 842 377 833 390 820 407 812 415 806 436 816 446 829 450 837 433 822 433 829 450 811 463 816 446 822 433 806 436 794 443 789 455 785 476 803 478 819 479 811 463 803 478 797 501 808 517 794 514 797 501 781 490 785 476 794 468 789 455 779 443 770 425 782 411 761 408 746 397 762 391 758 374 744 380 746 397 726 400 746 414 746 397 733 388 708 385 684 390 689 375 675 374 684 390 689 405 692 420 676 420 673 400 661 414 647 410 658 392 661 414 676 420 689 405 704 400 708 385 705 370 698 353 711 346 704 326 717 317 698 311 685 309 673 302 657 306 654 285 703 286 712 305 717 317 724 329 704 326 698 311 712 305 730 312 740 330 751 339 740 354 729 364 725 343 740 330 724 329 725 343 713 358 711 346 694 341 679 333 666 317 651 328 656 348 644 358 631 352 627 365 617 375 599 379 580 391 566 390 553 402 536 395 517 390 524 380 525 363 538 362 555 361 565 373 566 390 563 408 580 391 593 398 599 379 609 394 617 375 601 361 599 379 586 359 593 342 599 328 586 326 593 342 601 361 586 359 565 373 549 390 553 402 563 408 563 424 564 443 577 463 594 474 615 469 609 453 594 474 587 495 570 494 556 501 538 505 518 498 518 475 508 466 528 466 518 475 532 482 518 498 534 494 538 505 541 518 556 501 570 508 571 533 583 542 583 556 599 540 583 542 583 523 571 533 556 542 537 547 525 541 511 544 500 537 487 541 473 544 463 529 456 538 473 544 488 554 487 541 490 527 482 518 496 505 477 507 482 518 465 515 477 507 485 498 484 487 466 480 455 490 440 505 422 504 427 488 417 479 406 491 392 493 390 504 378 513 370 506 371 490 368 479 361 490 371 490 380 496 370 506 366 524 356 524 348 516 347 530 356 524 360 514 370 506 361 490 349 483 358 477 368 479 358 466 367 452 381 454 379 439 367 452 355 451 346 440 359 429 367 419 377 404 370 396 361 380 355 359 340 355 323 352 312 362 324 370 311 373 310 385 310 450 311 543 314 522 317 534 324 527 314 522 325 514 334 519 348 516 343 505 334 519 347 530 345 543 354 551 348 560 343 579 343 591 329 578 322 570 311 567 311 556 322 570 312 580 329 578 343 579 356 569 348 560 337 553 354 551 365 557 348 560 334 566 322 570 321 551 311 543 317 534 326 540 311 543 314 479 328 484 327 473 333 460 323 452 310 450 314 479 314 522 318 505 325 514 333 504 334 519 336 536 347 530 358 539 356 524M987 292 974 285 998 285 896 285 869 291 864 311 881 305 869 291 844 290 829 286 824 300 815 318 810 338 798 332 783 345 802 350 824 352 843 347 843 332 856 322 845 305 864 311 855 297 869 291 884 291 881 305 890 325 898 300 884 291 896 285 844 290 824 300 845 305 844 290 855 297 845 305 832 316 856 322 859 341 843 347 844 364 856 374 869 378 872 398 857 407 874 419 858 420 857 407 861 390 856 374 858 355 843 347 827 331 815 318 804 302 790 304 804 288 829 286M987 292 998 285 1003 301 998 316 979 323 969 312 956 307 963 325 979 323 985 309 998 316 1002 330 1003 350 1004 416 990 422 974 434 954 436 965 418 974 434 979 411 990 422 1003 428 1004 472 1004 416 1003 428 997 442 990 422 984 442 974 434 966 443 954 436 942 452 940 470 953 472 957 492 941 503 927 518 945 516 941 503 928 502 927 518 911 523 898 515 904 504 895 486 881 493 889 475 895 486 909 474 896 460 889 475 909 474 922 478 940 470 945 485 941 503 957 507 969 495 977 504 963 519 945 516 957 507 963 519 975 537 989 542 989 522 1000 515 1003 533 989 542 975 551 975 537 989 522 977 504 982 488 969 495 957 492 957 507 977 504 990 499 1000 515 1002 491 990 499 982 488 984 471 979 454 984 442 997 442 1004 472 1005 664 1004 416 1003 395 1001 375 986 375 977 360 983 346 970 340 979 323 989 331 998 316M987 292 985 309 975 299 969 312 985 309 1003 301 1004 416 992 407 990 422M987 292 1003 301 1002 330 989 331 983 346 992 364 977 360 970 340 953 345 946 334 935 325 931 337 924 349 926 364 937 374 914 380 894 380 888 397 872 398 874 419 863 438 858 420 837 408 857 407 847 396 842 377 861 390 872 398 881 378 894 380 895 367 914 380 926 364 912 365 914 380 908 394 894 380M728 668 728 648 713 642 709 627 711 614 729 609 743 605 757 592 770 589 781 596 796 594 800 606 815 605 835 593 850 595 859 611 872 603 850 595 842 611 835 593 828 571 815 573 824 557 828 571 818 585 815 605 814 620 800 606 800 624 779 621 768 615 750 625 738 619 743 605 743 591 729 609 728 582 739 562 730 551 747 538 761 543 784 538 769 526 761 543 762 562 739 562 726 566 730 551 715 548 712 529 696 528 684 513 669 497 658 485 655 464 654 443 643 435 633 422 647 410 650 424 661 414 666 431 654 443 650 424 643 435 629 438 633 422 621 410 647 410 639 392 658 392 650 376 634 380 617 375 611 352 631 352M728 668 733 685 445 685 603 685 518 684 445 685 496 683 491 672 477 657 465 669 465 653 468 636 452 635 438 637 446 646 452 635 446 624 438 637 421 641 407 646 413 661 422 672 405 669 413 661 396 651 407 646 394 638 386 629 370 633 370 646 349 647 348 664 357 673 346 679 348 664 338 671 323 666 311 672 311 646 322 635 320 652 332 648 322 635 330 628 321 622 322 635 311 626 311 567 312 580 311 626 311 646 320 652 323 666 332 648 349 647 357 657 357 673 358 685 445 685 436 678 422 672 430 661 413 661 419 652 407 646 410 636 398 623 395 611 409 609 409 591 415 601 409 609 398 623 386 629 376 618 371 605 360 604 349 604 343 591 329 595 329 578 334 566 343 579 365 577 382 578 384 588 401 584 382 578 372 569 356 569 365 577 372 569 365 557 356 569M385 393 370 396 376 383 361 380 354 399 370 396 362 406 377 404 380 421 395 424 403 437 408 453 401 467 413 468 408 453 414 445 403 437 416 435 430 437 438 446 440 459 431 474 413 468 417 479 431 474 427 488 438 493 455 490 447 479 466 480 465 465 466 453 479 451 465 465 451 455 466 453 475 436 466 428 462 416 479 425 466 428 451 432 462 416 450 413 440 406 426 406 416 407 413 397 425 383 411 368 410 383 425 383 428 396 440 406 445 393 454 381 457 369 463 359 470 349 455 347 439 350 430 362 427 372 411 368 417 360 430 362 423 342 439 350 431 334 423 323 428 308 419 301 434 298 434 286 420 288 419 301 414 316 401 314 395 323 384 327 376 338 380 348 383 358 399 347 380 348 364 341 355 359 367 356 383 358 382 373 376 383 387 383 382 373 396 364 411 368 407 354 399 347 389 338 395 323 406 324 401 314 385 315 395 323 404 335 399 347 396 364 383 358 369 368 361 380 350 386 354 399 351 415 367 419 380 421 388 410 395 424 386 432 379 439 371 432 367 419 362 406 351 415 359 429 342 430 346 440 332 440 327 428 311 415 310 385 313 401 327 399 322 388 324 370 329 360 340 355 335 342 323 352 329 360 312 362 311 373 322 388 310 385 310 431 310 450 310 684 311 672 320 677 323 666 311 662 311 672M385 393 377 404 388 410 398 395 410 383 413 397 426 406 428 396 445 393 437 386 425 383 427 372 417 360 423 342 431 334 441 325 454 327 467 336 470 349 481 358 484 369 497 370 481 358 500 352 513 357 525 363 511 374 517 390 524 400 536 408 542 429 528 442 521 424 542 429 563 424 582 409 580 391 579 375 599 379M385 393 376 383 369 368 355 359 348 373 361 380M448 514 440 505 458 503 455 490 469 497 484 487 493 468 508 466 519 452 528 442 549 441 564 443 556 456 577 463 561 469 556 456 549 441 542 429 549 415 553 402 536 408 521 424 508 423 490 421 494 409 480 395 475 411 494 409 501 396 517 390 506 385 497 370 513 357 515 343 525 330 509 320 495 313 497 293 472 291 485 294 497 293 483 306 495 313 478 320 483 306 485 294 470 305 472 291 458 291 446 287 472 291 511 290 497 293 505 305 495 313 486 330 478 320 467 336 455 347 463 359 481 358 481 346 470 349M448 514 463 529 465 515 458 503 469 497 477 507M538 362 526 349 525 363 543 377 538 362 550 346 555 361 543 377 524 380 511 374 513 357 526 349 525 330 532 311 534 300 523 295 541 286 546 299 532 311 542 325 555 333 569 327 569 350 555 361M609 453 601 437 583 446 577 463 573 480 594 474 605 487 615 469 618 492 621 508 635 511 650 496 658 485 679 487 688 468 706 467 700 449 688 468 684 452 700 449 717 454 706 467 695 483 688 468 675 463 679 487 684 500 669 497 650 496 652 519 635 511 630 527 627 539 633 552 645 563 644 577 647 591 658 596 669 604 676 621 656 632 641 641 657 646 658 661 654 673 632 671 615 661 617 679 603 685 701 684 679 678 699 670 701 684 733 685 603 685 645 684 701 684 665 680 679 678 690 659 699 670 701 650 713 642 721 631 728 648 742 637 750 625 756 648 758 664 771 673 759 679 758 664 744 674 759 679 733 685 786 680 771 673 782 662 799 659 814 659 812 635 814 620 829 610 815 605 806 583 815 573 818 585 835 593 829 610 842 611 859 611 876 615 872 603 886 590 882 576 888 558 908 561 920 577 945 581 961 601 962 618 981 603 961 601 968 586 945 581 965 572 968 586 981 603 1000 594 1003 612 1005 664 1004 552 989 542 987 559 1004 571 1000 594 993 580 981 603 1003 612 998 649 1005 664 1004 571 1003 612 994 627 998 649 989 665 973 658 973 677 952 681 939 662 946 638 933 624 914 629 909 649 889 657 869 661 859 678 856 656 856 641 868 628 859 611 849 630 856 641 873 648 889 657 881 637 876 615 868 628 881 637 896 635 889 657 903 669 909 649 896 635 914 629 893 620 876 615 896 603 872 603 871 588 850 595 866 576 882 576 870 559 879 549 876 536 875 516 898 515 903 533 911 523 920 532 927 518 933 530 945 516 949 536 948 552 932 549 920 532 903 533 892 540 876 536 865 545 879 549 888 558 892 540 879 549M609 453 615 437 601 437 593 424 583 446 564 443 577 428 563 424 549 441 534 455 528 442 513 433 521 424 524 412 508 423 502 435 490 421 479 425 488 442 490 421 506 412 494 409M813 540 808 517 824 528 833 542 824 557 808 558 815 573 793 565 806 583 818 585M813 540 824 557 843 557 833 542 842 521 855 506 875 516 886 505 895 486 918 494 909 474 926 467 940 470 931 489 941 503M813 540 833 542 848 543 842 521 824 528 813 540 795 531 784 538 782 521 769 526 756 529 761 543 751 551 739 562 754 579 770 589 767 575 754 579 728 582 726 566 715 548 732 531 730 551 751 551 747 538 732 531 712 529 701 512 684 500 684 513 672 525 661 532 652 519 672 525 696 528 701 512 684 513 662 509 669 497 679 487 665 473 658 485 644 477 655 464 665 473 675 463 684 452 667 453 654 443 641 453 655 464 667 453 665 473M813 540 798 548 784 538 778 555 761 543M813 540 808 558 798 548 795 531 808 517 816 498 803 478 794 468 811 463 827 469 829 450 848 444 854 461 846 474 861 473 854 461 840 459 829 450M860 528 876 536 891 527 898 515 886 505 881 493 876 478 861 473 880 463 896 460 914 461 929 443 921 423 905 430 892 434 891 414 888 397 881 378 869 378 876 360 887 353 896 344 878 340 890 325 869 326 859 341 843 332 827 331 824 352 844 364 842 377 823 380 833 390 837 408 820 407 813 393 812 415 797 413 806 436 790 430 770 425 767 442 753 431 745 449 758 456 770 456 789 455 804 453 816 446M451 455 440 459 424 461 408 453 396 448 401 467 401 483 413 468 424 461 431 474 447 479 465 465 481 468 484 487 498 478 508 466 509 485 518 498 507 499 496 505 499 516 482 518 475 528 463 529 446 527 456 538 461 548 473 544 469 557 488 554 500 537 509 523 499 516 490 527 500 537 505 556 488 554 481 563 469 557 461 548 451 554 456 538 444 541 446 527 436 522 440 505 438 493 431 474 447 467 440 459 424 451 408 453M451 455 438 446 448 442 451 455 447 467 465 465M451 455 459 439 466 428M636 496 635 511 643 531 661 532 666 545 677 554 689 558 698 574 685 577 689 558 683 542 677 554 678 567 689 558 713 565 698 574 700 587 685 577 678 567 676 588 669 604 654 613 656 632 657 646 681 640 676 621 654 613 637 614 623 618 611 623 616 640 615 661 606 652 590 647 575 655 582 666 595 660 575 655 558 662 551 674 539 669 558 662 544 642 527 649 515 639 504 647 491 645 477 657 465 653 446 646 454 662 465 669 466 681 445 685 456 677 465 669 476 668 491 672 495 657 477 657 476 668 466 681 456 677 436 678 427 682 445 685 395 681 410 679 405 669 394 669 396 651 394 638 398 623 411 621 409 609 393 596 395 611 383 601 371 605 359 616 343 612 349 604 359 616 370 633 376 618 359 616 360 604 370 592 382 578 393 566 404 559 404 572 401 584 409 591 393 596 384 588 370 592 371 605 384 612 395 611M553 632 560 615 582 609 582 590 587 570 583 556 599 562 614 557 599 540 599 562 587 570 601 587 582 590 564 594 560 615 547 609 564 594 582 609 592 598 582 590 574 574 583 556 565 564 545 571 531 570 537 547 549 555 531 570 532 583 545 571 549 586 564 594 561 579 545 571 549 555 556 542 569 552 583 542M553 632 544 642 565 646 575 655 565 675 582 666 590 678 603 685 533 683 551 674 565 675 603 685 603 670 617 679 632 671 645 684 654 673 643 656 658 661 673 658 679 678M553 632 568 634 583 637 575 655M553 632 565 646 558 662 565 675 533 683 539 669 540 653 558 662M524 400 536 395 524 380M524 400 524 412 536 408 549 415 563 424M524 400 501 396 480 395 477 381 484 369 472 367 481 358M497 370 500 352 515 343 509 320 505 305 511 290 446 287 434 298 428 308 414 316 423 323 441 325 448 337 455 347 447 361 430 362 441 376 454 381 466 384 480 395 493 385 484 369M721 417 704 400 726 400 733 388 726 377 708 385M721 417 704 431 700 449 719 437 717 454 729 449 719 437 740 434 746 414M721 417 705 417 689 405 673 400 658 392 663 378 675 374 684 362 676 351 665 336 656 348 662 359 676 351M965 644 946 638 948 623 962 618 965 644 973 658 982 640 998 649M965 644 948 623 933 624 942 606 961 601M703 286 686 296 685 309M703 286 717 287 735 288 754 287 769 286 735 288 751 300 762 307 756 327 740 330M852 487 846 474 827 469 819 479 816 498 797 501 780 507 794 514 782 521 795 531 794 514M852 487 861 473 866 490 881 493 870 504 855 506 840 501 842 521 860 528 855 506 852 487 840 501 816 498 824 512 808 517M852 487 866 490 855 506M725 343 740 354 758 360 746 367 726 377 713 358 705 370 689 375M725 343 711 346 724 329 730 312 717 317M515 625 509 607 490 612 502 620 509 607 521 608 535 597 549 586 561 579 565 564 549 555 569 552 583 556M515 625 502 620 485 628 490 612 468 615 468 636 461 625 452 635 465 653 454 662 456 677 443 663 446 646 434 650 438 637 436 620 440 609 446 624 436 620 426 629 438 637M515 625 521 608 529 616 547 609 549 586 532 583 515 585 531 570 513 567 495 582 488 574 481 563 496 566 488 554M515 625 515 639 512 660 527 649 540 653 544 642 535 631 515 639 499 632 502 620M515 625 529 616 535 597 532 583 523 594 509 607 497 597 490 612 481 599 468 615 467 601 456 584 437 590 448 596 456 584 468 582 456 565 456 584 449 576 437 590 430 604 440 609 448 596 430 604 415 601 424 612 440 609 454 611 446 624 461 625 468 615 485 628 468 636 480 644 465 653M515 625 535 631 553 632 571 620 560 615 544 622 547 609 535 597 523 594 521 608M515 625 499 632 491 645 480 644 477 657M333 460 342 468 349 483 348 495 343 505 356 504 370 506M333 460 348 460 342 468 358 477 361 490 356 504 348 516 360 514 366 524 377 523 371 536 366 524 378 513 377 523 391 529 394 547 404 559 406 549 394 547 393 566 404 572 415 560 404 559M895 367 876 360 881 378 895 367 887 353 878 340 859 341 858 355 876 360M895 367 912 365 924 349 912 347 895 367 896 344 912 347 912 365M806 671 819 683 829 671 814 659 828 644 812 635 793 636 779 621 788 611 800 606M806 671 814 659 828 658 828 644 841 646 856 641M806 671 799 659 786 680 759 679M806 671 786 680 806 684 819 683 844 684 873 684 869 661 856 656 842 668 828 658 829 671 842 668 844 684 733 685 806 684 844 684 1004 683 900 683 952 681 919 679 900 683 989 682 973 677 989 665 1005 664 1004 683 989 682 952 681 937 677 921 662 909 649 925 646 946 638 955 656 973 658M806 671 806 684M806 671 829 671 844 684 859 678 842 668 841 646 856 656 873 648 869 661 881 668 889 657M833 390 847 396 861 390 869 378M975 388 959 385 946 365 937 374 943 388 959 385 953 405 965 418 979 411 975 388 986 375 992 364 1001 375 1003 350 1003 395 992 407 979 411 966 397 959 385 970 371 977 360 964 355 953 345 946 365 926 364 941 350 924 349 917 329 935 325 923 316 914 307 905 320 898 300M943 293 956 307M943 293 941 308 949 322 946 334 931 337 941 350 946 334 963 325 949 322M943 293 927 288 974 285 960 288 927 288 896 285 912 293 927 288 929 301 914 307M943 293 960 288M943 293 929 301 941 308 923 316 917 329 931 337M771 656 758 664 744 658 728 648 718 655 699 670 715 674 701 684M771 656 771 673M448 514 465 515 469 497 466 480 481 468 479 451 488 442 502 435 498 451 508 466M448 514 458 503M380 473 381 454 396 448 403 437 386 432 380 421 371 432 359 429 361 440 346 440 340 450 333 460 317 464 310 450 311 556 311 543M380 473 368 479 383 484 371 490M380 473 388 467 401 467M384 327 374 323 376 338 364 341 364 328 350 320 343 329 332 316 350 320 352 310 365 316 350 320 335 305 352 310 361 301 357 291 341 285 314 285 315 296 312 307 314 285 328 295 315 296 321 313 332 316 328 329 343 329 364 328 376 338 389 338 380 348 367 356 364 341 350 342 355 359M968 586 993 580 1004 571 1004 552 1003 533 1004 472 993 480 982 488 973 479 969 495M826 366 842 377M826 366 823 380 813 393 833 390M826 366 844 364 858 355 878 340M826 366 824 352 810 338 802 350 811 362 811 378 823 380M826 366 811 378 813 393 797 413 790 430 794 443 779 443 790 430 782 411 797 413 791 396 799 383 813 393 791 396 782 411 778 394 761 408M826 366 811 362 824 352M993 480 984 471 996 461 979 454 967 462 953 472 945 485 957 492 973 479 953 472 956 457 940 470M744 674 733 685 715 674 728 668 744 674 744 658 742 637 738 619 729 609 713 597 728 582 713 580 698 574M348 495 361 490M348 495 356 504 360 514M348 495 333 494 328 484 318 491 314 479 327 473 342 468 358 466 358 477M348 495 338 481 328 484M502 339 500 352 481 346 467 336 458 314 454 327 448 337 439 350 447 361 457 369 472 367 463 359 447 361 441 376 445 393 450 413 464 397 462 416 475 411 490 421M502 339 509 320 497 325 486 330 467 336 448 337 431 334 415 330 423 323 440 311 454 327M502 339 515 343 526 349 550 346 555 333 557 315 569 327 586 326 581 340 593 342 611 352 622 341 636 332 641 344 644 358 650 376 663 378 672 388 658 392M502 339 486 330 481 346 502 339 497 325 495 313M955 656 973 677M955 656 952 681M955 656 965 644 982 640 989 665 1004 683 873 684 900 683 903 669 919 679 937 677 939 662 925 646 914 629 915 612 933 624 928 602 945 581 942 606 962 618 979 625 981 603 994 627 982 640 979 625 965 644M885 448 896 460 900 444 892 434 885 448 863 438 848 444 837 433 851 431 858 420 834 421 820 407M885 448 880 463 889 475 876 478 880 463 868 459 854 461M885 448 878 434 874 419 891 414 872 398M758 456 767 475 785 476 770 456 767 475 755 484 749 502 731 496 731 509 717 517 701 512 701 497 684 500 695 483 679 487M758 456 752 469 734 464 717 454 718 472 706 467 713 487 731 496 719 502 701 512M650 424 633 422 620 424 629 438 615 437 620 424 603 416 601 437 592 456 594 474M742 637 721 631 729 609M742 637 756 648 764 628 779 621 773 638 793 636 787 648 799 659 801 646 812 635 800 624 814 620 826 631 812 635M444 564 430 563 424 572 415 560 406 549 423 550 426 536 434 546 430 563 423 550 434 546 444 541 436 532 426 536 420 526 407 523 391 529 393 515 377 523 381 536 371 536 358 539 354 551 369 548 371 536M731 496 741 489 755 484 752 469 767 475 781 490 780 507 782 521 766 510 769 526M633 552 614 557 614 578 599 562 601 587 607 599 617 591 601 587 614 578 628 567 645 563 666 560 677 554M655 464 635 467 615 469 627 481 618 492 605 487 587 495 570 508 570 494 560 485 561 469 548 470 556 456 534 455 528 466 532 482 534 494 547 492 538 505 525 513 518 498 512 510 496 505 485 498 469 497M918 494 904 504 886 505 870 504 875 516 891 527 903 533 905 546 908 561 919 547 932 549 933 530 920 532 905 546 888 558 870 559 866 576 853 575 850 595 840 577 835 593M918 494 928 502 931 489 922 478 918 494 931 489 945 485M913 440 921 423 919 406 902 405 888 397 908 394 902 405 891 414 905 430 913 440 929 443 942 452 956 457 954 436 937 429 921 423 936 409 943 388 946 365 941 350 953 345 963 325 970 340 989 331 1003 350 983 346M421 588 424 572 435 577 437 590 421 588 409 591 414 579 424 572M421 588 415 601M421 588 430 604 424 612 409 609M421 588 435 577 430 563 415 560 423 550 410 539 406 549 401 533 394 547 381 536 391 529 401 533 407 523 411 505 406 491 417 491 417 479 401 483 406 491 400 501 390 504 380 496 392 493 401 483 383 484 392 493 400 501 411 505 422 504 438 493 447 479 447 467M421 588 414 579 404 572M556 501 560 485 547 492 556 501 555 522 571 533 569 552 565 564 574 574 587 570M826 631 828 644M826 631 829 610 837 623 842 611 849 630 868 628 873 648 881 637 893 620 896 635M826 631 841 646 828 658M826 631 837 623 849 630 841 646 837 623M843 557 828 571 840 577 843 557 853 575 840 577M804 288 769 286 654 285 640 298 624 287 625 301 604 300 589 296 571 286 606 286 589 296 574 300 571 286 654 285 671 290 673 302 666 317 665 336 679 333M804 288 824 300 804 302 793 317 776 332 765 343 756 327 751 339 765 343 770 354 783 345 774 366 779 379 762 391 778 394 791 396 779 379 799 383M804 288 783 289 775 300M619 605 607 599 592 598 601 587M571 286 541 286 434 286 446 287 450 303 434 298 420 288 406 289 395 290 390 300 401 314 408 299 395 290 385 285 314 285M571 286 558 290 560 303 574 300 558 290 541 286 534 300 520 308 525 330 542 325 557 315 532 311 520 308 509 320M525 528 525 541 543 532 556 542 555 522 541 518 525 513 509 523 511 544 505 556 496 566 488 574 483 587 468 582 467 601 448 596 454 611 468 615M525 528 541 518 543 532 537 547 521 558 525 541M525 528 511 544 521 558 531 570M485 628 491 645 495 657 504 647 512 660 495 657 507 672 496 683 479 682 445 685M697 633 676 621 693 617 709 627 721 631 738 619 756 608 743 605M749 502 731 509 732 531 717 517 712 529 697 547 696 528 683 542 672 525 662 509 650 496 644 477 635 467 627 481 644 477 636 496 650 496M749 502 747 518 747 538 756 529 747 518 731 509 719 502 701 497 695 483 713 487 701 497M749 502 766 510 756 529M749 502 741 489 731 479 731 496M749 502 768 495 781 490 793 487 803 478M618 492 606 500 587 495 590 510 570 508 583 523 599 540 616 529 627 539 643 531 652 519 662 509M402 410 395 424 409 420 416 407 402 410 388 410 385 393 387 383 398 395 413 397 428 396 437 386 427 372 441 376 457 369 466 384 477 381 472 367 466 384 464 397 454 381M904 504 916 511 898 515M619 605 611 623 600 629 590 647 595 660 590 678 565 675M619 605 637 614 643 602 647 591 633 590 614 578 617 591 633 590 644 577 628 567 614 557 613 544 599 540 597 522 583 523 590 510 606 500 621 508 630 527 616 529 621 508 610 517 590 510 597 522 616 529 610 517 606 500 605 487M528 466 519 452 498 451 479 451 475 436 479 425 475 411 464 397 480 395M424 612 436 620M358 685 346 679 338 671 334 684 346 679M358 685 334 684 320 677 338 671 338 659 323 666M352 310 345 296 357 291 368 292 379 295 377 307 390 300 379 295 385 285 434 286M420 288 408 299 419 301M420 288 385 285 357 291M338 603 343 591 355 593 343 579M338 603 343 612 331 617 327 607 321 622 311 626 311 556 311 646 311 662 320 652M338 603 327 607 329 595 312 580 315 613 327 607 316 597 329 595 338 603 349 604 355 593 365 577 370 592 383 601 384 588M964 355 946 365 970 371 975 388 966 397 965 418 952 420 954 436M964 355 970 340M964 355 970 371 986 375 989 389 979 411M705 370 684 362 662 359 675 374 672 388 684 390 704 400 705 417 704 431 719 437M705 370 726 377 729 364M762 562 767 575 780 570 770 589 790 579 781 596 788 611 768 615 764 628 750 625 756 608 757 592 754 579 762 562 780 570 790 579 806 583 796 594 815 605M912 293 929 301 923 316 905 320 904 334 896 344 890 325 904 334 912 347 917 329 904 334M388 467 381 454 369 464 368 479M499 632 504 647M615 469 622 456 609 453 592 456 577 463M751 551 762 562 778 555 780 570 793 565 790 579 796 594 788 611 800 624 793 636 801 646 814 659M815 318 832 316 843 332M586 359 581 340 569 327 575 315 586 326 589 311 589 296M444 564 434 546 436 532 446 527 448 514 436 522 420 526 436 532 436 522 425 514 440 505M600 629 616 640 606 652 600 629 586 623 582 609 571 620 568 634 565 646 583 637 590 647M334 519 324 527 325 514M535 338 555 333 569 350 586 359 579 375 566 390 549 390 536 395 536 408M535 338 525 330M535 338 526 349M535 338 542 325M548 470 532 482 547 492 548 470 560 485 573 480 587 495M548 470 528 466M548 470 534 455 519 452 513 433 508 423 506 412 524 400M365 316 374 323 364 328 365 316 377 307 374 323 385 315 384 327 389 338 404 335 406 324 414 316 415 330 423 342 412 345 399 347M832 316 824 300M518 475 509 485 507 499 497 491 484 487M351 415 342 430 327 428 310 431 311 415 313 401 322 388 341 393 327 399 338 405 351 415 334 416 327 428 323 414 327 399 334 416 342 430 332 440 323 452 340 450 332 440 321 438 310 450M916 511 927 518M916 511 928 502M916 511 911 523M916 511 918 494M395 681 394 669 378 675 368 682 357 673 369 662 370 646 357 657 348 664 338 659 349 647 359 635 370 646 377 656 378 675 388 660 394 669M497 491 496 505M497 491 485 498M497 491 509 485 498 478 493 468 479 451M497 491 498 478M438 446 424 451 430 437 425 428 416 435 414 445 430 437 440 430 438 446M364 328 350 342 340 355 348 373 350 386 341 393 354 399 362 406M701 650 681 640 690 659 701 650 718 655 713 642 697 633 709 627M639 392 650 376 662 359 644 358 634 380 627 365 644 358M639 392 634 380 624 391 609 394 593 398 582 409 563 408 549 415M560 303 557 315 546 299 534 300M560 303 546 299 558 290M398 381 411 368M490 527 509 523 525 528 525 513 512 510 499 516M490 527 475 528 473 544M334 684 310 684 310 385 312 307 313 321 328 329 323 338 323 352 313 349 312 337 310 385M625 301 612 312 627 317 617 327 636 332 651 328 665 336M625 301 606 286 624 287 654 285 896 285 385 285 341 285 328 295 345 296 341 285M575 315 560 303M321 551 337 553 334 566 321 551 311 556 310 684 358 685 368 682 395 681 358 685M756 648 771 656 782 662 786 680M729 449 734 464 731 479 713 487 719 502 717 517M729 449 740 434 745 449 729 449M359 616 359 635 370 633 383 639 370 646M359 616 345 624 343 612M509 607 515 585 495 582 483 587 497 597 495 582 496 566 513 567 505 556 521 558 513 567 515 585 497 597 481 599 483 587 474 572 469 557 456 565 444 564 435 577 449 576 456 565 474 572 468 582M665 680 658 661M665 680 654 673M665 680 645 684 617 679M415 330 406 324M415 330 412 345 417 360 407 354 396 364 398 381 410 383M415 330 404 335 412 345 407 354M483 306 470 305 478 320 458 314 470 305 458 291 450 303 470 305M906 418 921 423M906 418 905 430 900 444 914 461 909 474M906 418 902 405M906 418 919 406 908 394 928 390 937 374M603 416 609 394 621 410 620 424M603 416 593 398M603 416 582 409 577 428 583 446 592 456M603 416 593 424 582 409M603 416 621 410 639 392 624 391 617 375M773 638 756 648 744 658 728 668 718 655 715 674M773 638 787 648 782 662M615 661 627 647 641 641 643 656 632 671 627 647 616 640 627 633 611 623 600 611 607 599M615 661 603 670 590 678M337 553 345 543 336 536 337 553 326 540 336 536 324 527 326 540 321 551M666 560 678 567 662 574 645 563 648 548 661 532M666 560 666 545 672 525M666 560 662 574 647 591M693 617 711 614 713 597 700 587 688 596 669 604 682 608 676 621M693 617 682 608 688 596 685 577 676 588 658 596 654 613 643 602 658 596 662 574 676 588 688 596 701 602 700 587 713 580 726 566 713 565 715 548 697 547 689 558M693 617 701 602 711 614 721 631M693 617 697 633 681 640 673 658 657 646 643 656 627 647 627 633 641 641 640 628 637 614M599 328 612 312 604 300 589 311 599 328 617 327 622 341 608 339 593 342M811 463 804 453 794 443M402 410 413 397M402 410 398 395 398 381 387 383M350 386 340 381 322 388 336 372 324 370M451 432 448 442 459 439 466 453M451 432 450 413 430 419 416 407M451 432 459 439 475 436 488 442 498 451 513 433 502 435M451 432 440 430 448 442M311 373 312 337 312 362 313 349 323 338 335 342 343 329 350 342 335 342 328 329 312 337 323 338M866 490 876 478M866 490 870 504M410 636 421 641 434 650 430 661 436 678 443 663 454 662M656 632 681 640M656 632 640 628 623 618 627 633 640 628 654 613M583 637 600 629 600 611 582 609M583 637 571 620 586 623 583 637M965 559 948 552 960 545 963 519 975 523 977 504M965 559 965 572 950 569 948 552 934 562 908 561 895 577 886 590 907 593 896 603 886 590 871 588 882 576 895 577 907 593 920 577 928 602 907 593 915 612 896 603 893 620 915 612 928 602 942 606 948 623M965 559 960 545 975 537 975 523 989 522 990 499 993 480 996 461 984 442 966 443 979 454M965 559 950 569 945 581 934 562 932 549 949 536 963 519M965 559 975 551 960 545 949 536 933 530M965 559 977 567 968 586M342 468 338 481 349 483M866 576 871 588M692 420 683 438 700 449M692 420 704 431 683 438 684 452M692 420 705 417M868 459 861 473M314 479 317 464 323 452 321 438 327 428M686 296 671 290M420 526 425 514 422 504 417 491 427 488M336 372 340 355M336 372 329 360M336 372 348 373 340 381 341 393 338 405 354 399M336 372 340 381M444 564 451 554 469 557M444 564 449 576M641 453 643 435M641 453 629 438 622 456 615 437 603 416M380 555 394 547M380 555 372 569 393 566 401 584 393 596 383 601 384 612 386 629 383 639 396 651 388 660 377 656 383 639 394 638 410 636 411 621 426 629 421 641 419 652 434 650 443 663 430 661 419 652M878 434 892 434M810 338 827 331 832 316M571 286 385 285 368 292 377 307 361 301 368 292M926 467 929 443 937 429 942 452 926 467 922 478M358 466 348 460 355 451 358 466 369 464 367 452 361 440 371 432 386 432 396 448 379 439 361 440 355 451 340 450 348 460M403 513 393 515 390 504M403 513 407 523 393 515 378 513 380 496 383 484 380 473 369 464M403 513 400 501 393 515M863 438 851 431 848 444 840 459 846 474 837 484 819 479M863 438 878 434 891 414 906 418M824 512 842 521M824 512 824 528M758 456 767 442 770 456 779 443 767 442 745 449 734 464 718 472 713 487M327 473 317 464M725 300 738 303M725 300 735 288M725 300 712 305 717 287 725 300 730 312M569 350 565 373 543 377 549 390M987 559 993 580 977 567 965 572M628 567 633 552 643 531 630 527M628 567 633 590 643 602 619 605 623 618M975 551 987 559 1004 552 1004 472 996 461 997 442M975 551 977 567 987 559M522 668 533 683 518 684 507 672 491 672 479 682 466 681M522 668 527 649 535 631 529 616 544 622 553 632M522 668 512 660 507 672 522 668 540 653M312 580 316 597 315 613 321 622 331 617 330 628 345 624 359 635 340 637 322 635M395 681 427 682 422 672 410 679 427 682M395 681 378 675 369 662 357 657M794 364 811 362M612 312 617 327 608 339 599 328M612 312 589 311 574 300 575 315 557 315M768 495 767 475M768 495 766 510 747 518 732 531M768 495 780 507 766 510M768 495 755 484M498 451 493 468 481 468M654 285 606 286 604 300M654 285 385 285 998 285M411 505 417 491M770 589 770 602 757 592 743 591 728 582M822 433 812 415 834 421 837 433M822 433 834 421 837 408 847 396M843 557 848 543 865 545 870 559 856 561 843 557M686 296 673 302M577 428 593 424M989 682 989 665M409 420 403 437M409 420 416 435M409 420 425 428 440 430 430 419 440 406M936 409 919 406 928 390 914 380M936 409 928 390 943 388 953 405 936 409 937 429 952 420 936 409M579 375 565 373M383 484 388 467 401 483M673 400 684 390M673 400 672 388M506 412 524 412M506 412 501 396 506 385 511 374 497 370 493 385 477 381M610 517 597 522M905 320 917 329M512 510 507 499M512 510 509 523M683 542 697 547 713 565 713 580 713 597 701 602 682 608M683 542 666 545 648 548 633 552 613 544 627 539M343 505 333 504 318 505 314 479M581 340 569 350 550 346 535 338M323 414 311 415M323 414 313 401M756 327 776 332 783 345 765 343 758 360 758 374 779 379 794 364 783 345M967 462 984 471 973 479 967 462 966 443 956 457 967 462M420 526 410 539 426 536M501 396 493 385 506 385M333 494 343 505M333 494 333 504M333 494 318 491 318 505 333 494 338 481 327 473M312 307 312 337 313 321 321 313 328 329M979 625 994 627M424 451 414 445M1003 533 989 522M1003 533 1002 491 1004 472M430 419 426 406M430 419 425 428M754 579 743 591M797 501 793 487 785 476M377 656 369 662 368 682M461 625 454 611 467 601 483 587M369 548 365 557 380 555 393 566M523 594 515 585M903 669 881 668 900 683M903 669 921 662 925 646 933 624M619 605 617 591M619 605 633 590M619 605 600 611 592 598M770 602 768 615 756 608 770 602 781 596M382 373 398 381M382 373 369 368 367 356M381 536 380 555 369 548 381 536M601 361 611 352 627 365M798 548 793 565 808 558M798 548 778 555 793 565M920 577 895 577 888 558M920 577 934 562 950 569M320 677 310 684 311 646M804 453 806 436M1003 301 1003 350 992 364M485 628 480 644M848 543 860 528 875 516M848 543 856 561 866 576M837 484 816 498M837 484 840 501 824 512M837 484 852 487M555 522 570 508M555 522 543 532 525 528M366 524 358 539 345 543M441 376 437 386M361 301 365 316M361 301 345 296 335 305 332 316M733 388 744 380 726 377M334 416 338 405M334 416 323 414M465 515 475 528 487 541M440 311 434 298M440 311 428 308M667 453 675 463M667 453 683 438 676 420 666 431 650 424M621 410 624 391M963 325 969 312M754 287 751 300M345 624 331 617 338 603M345 624 340 637 349 647M600 611 586 623M369 548 358 539M919 679 921 662 939 662 955 656M905 546 892 540 891 527M868 459 863 438M868 459 848 444M868 459 885 448 900 444 913 440 914 461 926 467M321 313 328 295 335 305 321 313 312 307M673 658 690 659M444 541 451 554 456 565M741 489 752 469 731 479 718 472M762 307 754 287M310 431 321 438M464 397 445 393M666 560 648 548 643 531M635 467 641 453 622 456 635 467M474 572 488 574M522 668 539 669M332 648 338 659M440 311 441 325M666 431 667 453M666 431 683 438M396 448 388 467M574 574 564 594M574 574 561 579M376 618 384 612 398 623M975 388 989 389 1003 395M414 579 401 584M430 419 409 420 402 410M390 300 408 299 414 316M390 300 385 315 377 307M787 648 801 646M787 648 771 656 773 638 764 628M673 658 665 680M663 378 662 359M405 669 396 651M523 295 520 308 505 305M523 295 511 290 541 286 446 287M450 413 440 430M778 394 779 379M390 300 385 285 406 289 408 299M993 480 1002 491M606 652 595 660 603 670 606 652M458 314 450 303 440 311 458 314M424 612 411 621M851 431 834 421M415 560 414 579M573 480 561 469M410 539 407 523 425 514 411 505 403 513M890 325 905 320M481 599 467 601M370 592 355 593 360 604M992 407 989 389 1001 375M395 681 405 669M636 496 618 492M697 633 701 650M410 539 401 533M636 496 621 508M424 612 426 629 410 636M398 395 385 393M476 668 479 682M340 637 330 628M611 352 608 339M905 546 919 547 920 532M451 554 434 546M518 684 496 683M827 469 840 459M860 528 865 545 856 561 853 575M424 461 424 451M340 637 332 648M383 639 388 660M788 611 770 602M752 469 745 449M953 405 966 397M616 529 613 544M541 286 385 285M520 308 511 290M481 563 474 572M662 574 644 577M758 360 751 339M536 395 543 377M589 311 575 315M827 469 837 484M952 420 953 405M804 453 794 468M522 668 518 684M535 631 544 622M919 547 934 562M859 678 873 684 881 668M573 480 570 494M627 481 636 496M698 311 686 296M804 302 804 288M499 632 485 628M315 613 311 626" fill="none" stroke="#000" stroke-width="1" shape-rendering="crispEdges"/>
<path clip-path="url(#cr)" d="M1090 622 1086 642 1091 637 1097 641 1094 621 1091 637 1090 622 1087 608 1084 621 1086 642 1082 651 1080 674 1079 682 1084 686 1080 674 1076 666 1072 687 1071 668 1069 687 1066 672 1061 685 1054 674 1052 683 1044 689 1038 684 1038 674 1035 689 1038 684 1043 672 1044 689 1047 667 1052 683 1058 689 1054 674 1047 667 1043 672 1040 658 1038 674 1033 668 1028 685 1027 667 1029 659 1033 668 1035 689 1028 685 1024 681 1022 667 1019 687 1014 668 1011 681 1010 672 1007 688 1002 685 996 681 991 672 989 657 987 670 982 667 979 653 977 667 973 688 970 666 969 683 966 666 962 682 957 689 955 668 959 651 956 641 954 611 953 546 956 561 964 568 968 566 972 568 977 581 978 562 983 579 980 592 977 581 974 597 973 608 970 625 965 643 962 651 966 666 968 651 970 666 974 656 977 667 981 685 982 667 983 659 987 670 984 682 982 667M1085 563 1082 581 1080 593 1076 609 1074 628 1077 623 1076 609 1072 607 1068 629 1063 643 1060 629 1058 642 1056 651 1054 674 1059 669 1061 685 1058 689M1085 563 1087 581 1089 569 1093 579 1095 592 1097 606 1094 621 1100 628 1097 641 1094 655 1091 637 1089 652 1086 642M1085 563 1089 569 1086 550 1084 533 1079 531 1074 534 1069 518 1065 521 1062 508 1059 522 1053 516 1049 523 1043 519 1041 509 1036 486 1035 508 1028 502 1026 492 1023 501 1021 521 1016 502 1015 490 1012 472 1008 488 1007 475 1003 487 1003 503 998 520 994 532 992 546 995 568 993 584 988 580 986 563 983 579 984 596 988 580 989 567 993 584 999 577 995 568 1000 562 999 577 996 598 993 584 990 597 987 608 985 629 983 638 979 653 974 656 968 651 965 643 959 640 959 651 960 668 957 689M1035 658 1033 668M1029 299 1027 314 1032 309 1037 313 1034 295 1032 309 1029 299 1024 295 1019 311 1016 313 1011 294 1009 311 1005 299 1000 295 996 292 997 276 1000 295 1003 277 1005 299 1011 294 1016 298 1016 313 1013 326 1009 311 1006 321 1005 344 1008 351 1004 366 1001 386 998 402 1004 398 1011 402 1008 389 1004 398 1001 386 998 371 995 386 998 402 995 413 991 432 997 446 992 456 991 479 986 494 984 473 991 479 994 492 997 487 997 479 994 492 994 502 986 494 983 502 981 517 981 531 977 551 972 568 978 562 977 551 973 533 970 551 968 566 965 546 964 568 959 553 956 561 954 580 953 546 959 553 965 546 970 551 972 568 970 576 977 581M1029 299 1034 295 1040 298 1037 313 1036 321 1039 328 1037 337 1034 351 1033 371 1029 381 1025 402 1029 417 1026 430 1024 448 1022 457 1018 472 1015 490 1008 501 1003 487 1002 477 997 487 994 502 998 520 1002 537 997 546 995 568 988 554 986 563 989 567 988 554 992 546 984 535 983 553 978 562M1056 327 1049 323 1045 329 1041 312 1039 328 1043 338 1045 329 1047 314 1049 323 1054 308 1056 327 1061 312 1063 326 1066 336 1070 340 1075 343 1080 340 1074 326 1070 340 1066 322 1066 336 1067 353 1070 340 1074 356 1076 371 1074 383 1071 401 1072 411 1074 426 1071 431 1065 426 1059 431 1058 419 1055 430 1050 446 1049 458 1047 473 1050 477 1047 490 1046 509 1043 519 1041 538 1039 549 1036 565 1031 576 1030 594 1033 606 1030 623 1025 641 1029 659 1024 656 1022 667 1017 655 1014 668 1010 672 1006 651 1004 670 1002 685 997 672 996 681 990 687 987 670M1056 327 1054 344 1049 323 1047 336 1045 329M1056 327 1060 343 1066 336M1064 494 1057 503 1053 516 1050 505 1049 523 1046 509 1050 505 1047 490 1044 493 1041 509 1036 521 1035 508 1030 490 1028 502 1027 520 1028 534 1026 552 1024 567 1020 578 1016 594 1012 597 1006 594 1003 579 1000 562 997 546 1003 553 1000 562M1059 459 1055 471 1054 486 1050 505M1059 459 1062 478 1060 486 1055 471 1050 477 1054 486 1057 503 1059 522 1055 535 1049 523 1044 532 1043 519M1059 459 1065 456 1062 478 1064 494 1062 508 1057 503 1060 486 1064 494 1067 504 1065 521 1062 536 1059 550 1056 566 1053 551 1050 563 1048 584 1047 592 1041 610 1037 607 1034 595 1033 606 1033 626 1037 607 1039 596 1041 610 1041 627 1037 607M1100 628 1100 533 1098 553 1096 567 1093 579 1089 596 1087 608 1082 606 1077 623 1076 643 1073 657 1071 668 1066 672 1061 658 1059 669 1056 651 1052 655 1047 667 1044 656 1043 672M1100 628 1097 606 1093 613 1090 622M1100 628 1100 509 1100 448 1095 444 1090 449 1084 445 1080 433 1074 426 1068 418 1065 426 1060 417 1059 431 1058 448 1055 430 1049 416 1047 413 1041 417 1037 398 1035 419 1033 429 1029 417 1032 401 1035 419 1038 431 1041 417 1042 403 1047 413 1047 402 1049 416 1053 396 1058 419 1060 417 1058 400 1058 419M1100 628 1100 591 1100 533 1099 524 1094 531 1091 524 1089 537 1084 533 1080 521 1079 531 1075 523 1074 534 1074 546 1074 563 1069 577 1066 591 1063 609 1060 629 1057 622 1052 613 1048 608 1051 591 1052 613 1060 607 1063 609 1068 629 1071 642 1073 657 1076 666 1079 682 1072 687M1100 628 1099 682 1099 670 1096 684 1099 682 1099 654 1099 670 1093 674 1091 685 1088 666 1084 686M1016 549 1013 564 1010 580 1006 594 1003 614 1002 626 1000 640 995 654 991 672 990 687 984 682 981 685M970 517 973 504 977 516 980 507 981 517 984 535 988 554M970 517 969 533 965 546 962 532 959 520 956 531 953 516 956 460 959 457 966 462 964 479 968 472 966 462 962 441 959 457 958 448 956 460 954 431 958 448 962 441 959 429 958 448M970 517 973 533 977 516 981 531 983 553 986 563M980 507 983 502 988 522 984 535 981 531M1006 539 1003 553 1008 562 1010 547 1013 564 1015 579 1012 597 1010 580 1008 562 1003 579 1002 594 999 577M1006 539 1010 547 1003 553 1002 537 994 532 997 546M1020 396 1014 403 1011 388 1011 402 1005 411 998 402 1001 417 998 434 997 446 998 457 1003 446 1003 464 997 479 992 456 988 463 984 473 978 463 972 473 970 486 973 504 976 487 980 507 981 487 986 494 991 509 988 522 990 531 984 535M1020 396 1025 402 1023 381 1020 396 1018 387 1014 403 1014 415 1010 426 1008 441 1010 460 1007 475 1012 472 1010 460 1003 464 1002 477M1020 396 1019 415 1014 403M1016 517 1016 502 1021 487 1023 501 1027 520 1031 517 1028 502M1016 517 1013 531 1010 547M1016 517 1018 539 1016 549 1017 567 1015 579 1016 594 1016 606 1012 597 1009 613 1006 594M1016 517 1021 521 1018 539 1021 550 1017 567 1020 578 1023 597 1026 576 1030 594 1026 607 1025 626 1022 642 1017 627 1014 641 1013 654 1010 672M1044 532 1042 547 1039 569 1039 581 1034 595 1031 576 1039 581 1039 596 1047 592 1048 608 1046 622 1041 610M1044 532 1047 551 1047 561 1041 582 1039 569 1036 565 1039 581M1044 532 1041 538 1042 547 1047 561 1048 584 1051 591 1054 578 1056 591 1052 613 1046 622 1042 638 1040 658 1044 656 1042 638 1036 643 1035 658 1038 674M1044 532 1051 536 1053 551 1055 535 1053 516M1015 369 1011 388 1011 372 1008 389 1004 366 998 371 995 374 989 385 984 381 978 384 975 385 971 371 969 352 967 369 963 359 959 372 956 381 955 396 955 371 954 343 955 280 958 291 960 281 964 297 965 279 970 276 968 296 965 279M1015 369 1018 387 1023 381 1022 373 1018 387M1015 369 1011 372 1004 366 1001 355 998 371 997 358 995 374 995 386 993 403 991 413 986 430 985 442 982 456 984 473 981 487 978 473 978 463 982 456 988 463 991 479M1015 369 1022 373 1027 370 1023 381M1087 581 1084 592 1082 606 1084 621 1082 640 1077 652 1076 666M965 611 963 627 959 640 962 651 960 668 962 682 973 688 969 683M1087 433 1084 445 1080 464 1079 478 1075 488 1074 506 1069 518 1075 523 1074 506 1080 521 1079 505 1085 520 1084 533 1080 549 1074 534M1078 415 1074 426 1072 443 1071 431 1068 418 1072 411 1078 415 1080 433 1084 416 1087 433 1090 449 1092 426 1095 444 1099 433 1100 448 1099 415 1099 433 1092 426 1087 433 1089 413 1092 426 1094 414 1099 433M1063 449 1065 456 1068 479 1068 457 1071 479 1075 488 1079 505 1084 501 1085 520 1089 537 1094 531 1093 546 1098 553 1099 564 1100 533 1100 509 1099 524 1096 503 1091 524 1085 520 1090 506 1091 524M969 461 968 472 966 487 964 479 959 493 958 507 953 516 953 546 956 531 959 553 962 532 965 516 969 533 970 551M1056 385 1053 396 1047 402 1047 382 1042 403 1037 398 1032 401 1029 381 1033 385 1033 371 1039 386 1037 398 1033 385 1032 401M1056 385 1058 400 1053 396 1050 385 1047 402M1056 385 1061 389 1058 400M1062 597 1060 607 1056 591 1062 597 1063 609 1057 622 1060 607M975 313 972 329 972 336 969 352 963 359 962 344 956 358 955 371 956 381 960 404 957 417 954 431 954 343 956 358 959 372 964 383 967 369 968 387 971 371 973 355 977 371 975 385 973 396 969 415 967 429 962 441M975 313 981 326 978 340 973 355 969 352 967 341 963 359M967 578 964 568 960 584 956 561M967 578 968 566 970 576 967 595 965 611 970 625 972 637 968 651M967 578 962 596 959 614 958 626 956 641 955 668 953 546M967 578 967 595 973 608 973 626 972 637 974 656 977 643 979 653 983 659 983 638 977 643 972 637 965 643 963 627 959 614 954 611 958 626 959 640M967 578 960 584 958 599 954 611 954 580 958 599 959 614 965 611 962 596 958 599M967 578 970 576 974 597 976 610 973 626 977 643 980 626 983 638 989 643 983 659M1094 460 1090 449 1087 460 1084 445M1094 460 1095 444 1098 457 1099 477 1100 448 1101 385 1101 357 1096 343 1096 356 1091 374 1088 381 1092 402 1089 413 1084 416 1081 402 1078 415 1076 401 1072 411M1094 460 1091 475 1086 492 1084 501 1090 506 1096 503 1100 509 1097 489 1094 479 1093 489 1090 506 1086 492 1083 478 1080 493 1079 505M1094 460 1094 479 1091 475 1093 489 1096 503 1097 489 1099 477 1100 509 1101 385 1100 628 1099 654 1097 641M1094 460 1099 477M1093 613 1094 621M1013 326 1009 344 1008 351 1011 372 1013 359 1015 369 1016 351 1020 342 1024 355 1015 369M1029 473 1030 490 1026 492 1021 487 1018 472 1025 477 1021 487M1013 654 1014 668M1043 338 1039 355 1038 366 1039 386 1042 403M1043 338 1046 357 1042 368 1039 386M1101 385 1099 415 1096 401 1094 414 1092 402 1085 388 1081 402 1078 389 1076 401 1074 383 1066 388 1066 399 1061 389 1058 373 1056 385 1053 374 1052 359 1047 374 1047 382 1050 385 1047 374 1042 368 1047 382M1012 508 1016 502M1012 508 1015 490M1012 508 1011 517 1004 524 1002 537 1006 539 1013 531 1016 549M1012 508 1016 517M1008 441 1003 446 1010 460 1011 448 1016 457 1012 472M1008 441 1011 448 1010 426 1005 411 1004 398M1080 354 1075 343 1074 326 1066 322 1063 326 1064 312 1066 322 1069 312 1074 293 1076 309 1077 291 1080 310 1084 323 1080 340 1078 322 1076 309 1074 326 1078 322 1080 310 1085 295 1086 282 1089 297 1085 312 1084 323 1085 337 1090 322 1090 336 1093 327 1096 343 1090 336 1089 358 1085 337 1080 354 1080 340M1080 354 1076 371 1078 389 1074 383 1069 371 1066 388 1071 401 1068 418 1066 399 1060 417M955 396 954 343 953 516 954 431 955 396 957 417 959 429 963 411 967 429 968 444 971 429 975 443 978 463 981 445 982 456M984 341 978 353 978 340 972 336 973 355M984 341 984 351 986 373 984 381 984 373 978 384 977 371 978 353 984 373 984 351 987 337 992 354 986 373 989 385 988 401 985 414 982 427 981 445 985 442 988 463 990 443 992 456M984 341 987 337 993 343 992 354 995 374M1036 460 1029 473 1025 477 1026 492M1036 460 1036 477 1030 490 1036 486 1044 493 1046 509M1036 460 1041 464 1036 477 1036 486 1041 476 1044 493M964 383 960 404 963 411 957 417M993 403 995 413 998 434 1003 446 1003 429 1008 441M1030 564 1026 576 1024 567 1030 564 1031 576M1088 666 1080 674 1077 652 1073 657 1069 654 1066 672M1088 666 1093 674 1096 684M1061 578 1056 591M1061 578 1062 597 1066 591 1072 607 1074 628 1071 642 1069 654 1071 668M1059 431 1063 449 1065 426 1067 448 1071 431M1066 579 1069 577 1074 595 1072 607M1066 579 1066 591 1074 595 1076 609 1082 606 1080 593 1076 583 1074 595M1100 591 1097 606 1089 596 1093 613 1087 608 1084 592 1089 596 1095 592 1097 580 1100 591 1099 564 1097 580 1096 567 1099 564M1100 448 1098 457 1094 460M983 323 984 341 981 326 983 323 987 337 991 329 993 343 997 358 992 354M1009 638 1006 651 1001 656 1000 640 1006 651 1005 638 1002 626 996 621 993 642 989 657 995 654 997 672 1001 656 1004 670 1007 688 1011 681 1019 687 1024 681 1027 667 1024 656 1022 642 1017 655 1014 641 1009 638 1013 654M1039 447 1036 460 1033 448 1031 458 1027 462 1025 477 1030 490M1039 447 1041 464 1041 476 1047 490 1054 486M1039 447 1044 444 1041 464 1047 473 1047 490M1068 479 1064 494 1070 488 1067 504 1069 518 1068 537 1065 521M1068 479 1070 488 1074 506M1010 280 1014 278 1011 294 1010 280 1005 299 997 307 990 294 987 282 985 296 982 312 981 326M1068 457 1077 464 1071 479 1070 488M991 509 993 521 990 531 992 546M991 509 998 520 1004 524 1006 539M959 493 963 503 965 516 959 520 953 516 956 494 956 460 959 479 959 457M959 493 966 487 963 503 958 507 959 520M1031 546 1030 564 1026 552 1031 546 1036 565M977 277 973 292 970 276M1099 277 1101 357 1099 327 1097 307 1093 327 1090 322 1085 312 1085 295 1080 277 1077 291 1074 293 1071 281 1064 277 1059 280 1055 296 1054 308 1047 314 1045 295 1041 312 1040 298 1045 295 1044 282 1047 279 1045 295M1099 277 1096 293 1092 309 1090 322M1099 277 1099 298 1101 357 1097 371 1096 356M958 291 955 308 955 280M981 609 980 626 985 629 989 643 989 657M987 312 985 296 981 276 987 282 997 276 992 282 990 294 987 312 983 323 991 329 987 312M1023 322 1019 311 1016 298 1014 278M1023 322 1027 314 1024 295 1022 281 1027 276 1030 284 1024 295 1027 276M1023 322 1020 342 1013 326 1015 342 1013 359 1008 351M1048 636 1044 656M1054 344 1046 357 1047 374M1054 344 1052 359 1058 373 1063 367 1061 389M1054 344 1058 356 1058 373 1063 359 1063 367 1066 388M1089 358 1096 343 1099 327 1099 298 1097 307 1092 309 1093 327M1089 358 1086 372 1085 388 1086 401 1084 416M1089 358 1091 374 1094 382 1092 402M964 329 962 344 967 341 972 336 969 325 967 341 964 329 969 325 972 329 978 340M975 385 978 400 978 384 981 403 984 381 988 401 991 413 991 432 990 443 986 430 982 427 985 442M1032 641 1029 659M1032 641 1035 658M1032 641 1036 643 1040 658M1041 417 1043 434 1039 447 1038 431 1033 448 1029 443 1027 462 1029 473 1036 477M1034 351 1038 366 1033 371 1028 353 1025 341 1024 355 1022 373M1034 351 1039 355 1042 368 1038 366M1047 413 1047 433 1041 417M1063 367 1069 371 1067 353 1063 367M989 622 989 643M989 622 993 642 995 654M1019 606 1017 627 1016 606 1012 628 1009 638 1006 626 1005 638M1027 314 1029 327 1032 309 1036 321 1041 312M1017 427 1011 448M1017 427 1018 449 1022 457 1025 477M1017 427 1019 428 1018 449 1016 457 1018 472M1063 326 1060 343 1058 356 1052 359M1080 562 1076 583 1069 577 1067 567 1066 579 1061 568 1059 550 1064 547 1061 568 1061 578 1066 591M968 296 965 307 964 329 960 309 958 327 954 343 955 308 958 327 962 344M968 296 971 312 969 325 965 307 971 312 972 329M994 614 989 622 985 629 981 609 980 592 976 610 980 626M994 614 996 621 1000 640M968 444 966 462 959 479 956 494 958 507 965 516 968 502 970 517M1033 626 1032 641 1030 623 1025 626 1025 641 1024 656M1036 321 1030 336 1028 353 1027 370 1029 381M1036 321 1037 337 1039 355M1058 642 1061 658 1056 651 1053 640 1048 636 1052 655 1054 674M1063 643 1061 658 1069 654 1063 643M989 385 993 403M1050 563 1054 578 1048 584M1056 566 1054 578M1056 566 1061 578M1000 295 997 307 996 292 992 282M1005 299 1005 314 1009 311M980 592 974 597M980 592 984 596 981 609M1009 613 1006 626 1003 614 1002 594 998 611 996 621M1009 613 1012 628 1014 641M1009 613 1016 606M1052 628 1052 613M1052 628 1048 636 1046 622 1041 627 1036 643 1033 626 1030 623 1026 607 1023 597 1019 606 1025 626M1052 628 1053 640 1052 655M1052 628 1058 642 1057 622 1052 628 1046 622M1022 537 1021 550 1024 567M979 295 977 277M979 295 981 276M979 295 975 313 973 292 971 312M979 295 982 312 983 323M1069 312 1074 326M1071 281 1068 293 1064 312 1061 293 1061 312 1054 308 1052 297 1047 279M1071 281 1080 277 1076 283 1074 293M1024 448 1027 462 1022 457M1024 448 1029 443 1031 458 1029 473M1076 643 1077 652M1011 402 1014 415 1017 427 1019 415 1025 402 1023 416 1019 428 1024 448M976 428 975 443 969 461 972 473 976 487 978 473M976 428 981 445M1044 282 1040 298 1036 278 1044 282M1071 554 1067 567 1074 563 1076 583M1071 554 1074 563M1071 554 1064 547 1067 567M1071 554 1074 546 1080 562 1082 581 1084 592M954 580 960 584 962 596M1030 336 1034 351M996 598 994 614 987 608 989 622M996 598 998 611 1002 626M996 598 1002 594M1008 501 1008 488M1008 501 1004 524 1013 531 1018 539 1022 537 1026 552M1008 501 1011 517 1013 531M1008 501 1012 508M1033 536 1031 546 1028 534 1021 521 1022 537M1013 359 1016 351 1015 342M998 457 1003 464 1007 475M998 457 997 479M1085 388 1088 381 1086 372 1083 358 1081 373 1078 389M1052 297 1053 280 1055 296 1061 312M1052 297 1047 314M963 411 969 415 971 429 972 414 976 428 980 417 982 427M998 434 1003 429 1001 417 995 413M983 502 991 509 994 502M1087 581 1089 596M1001 417 1005 411 1003 429M1030 284 1029 299M1030 284 1034 295 1036 278 1030 284M1067 448 1065 456M1067 448 1068 457 1072 443 1080 433 1079 447 1077 464 1079 478 1080 493 1084 501M1067 448 1072 443 1077 464M1072 443 1079 447 1080 464 1083 478 1091 475 1087 460 1083 478M1016 313 1019 321 1020 342M996 327 993 343M996 327 999 341 1000 329 1005 344 1001 355 997 358 999 341 1001 355M996 327 1000 329 1006 321 1009 344 1013 359M1025 341 1030 336 1029 327 1025 341 1023 322 1029 327 1036 321M1058 356 1063 359 1067 353 1060 343 1063 359M1039 549 1039 569 1047 561 1050 563 1047 551 1042 547 1039 549 1033 536 1031 517 1035 508M978 400 972 414 973 396 965 400 963 411M978 400 980 417 981 403 985 414 986 430M978 400 973 396 968 387 965 400 969 415M978 400 981 403M958 291 960 309 964 297 965 307M1089 652 1094 655 1088 666 1082 651 1082 640 1077 623M1089 652 1088 666M981 517 988 522M1022 281 1016 298M1080 277 1086 282M1036 521 1033 536M1006 321 1013 326 1019 321 1019 311M1086 550 1089 537 1093 546 1100 533M1086 550 1085 563 1080 549 1079 531M1086 550 1093 546 1089 569M968 444 969 461M1051 536 1049 523M1051 536 1047 551M1086 401 1089 413M1033 429 1029 443 1026 430 1023 416M1031 517 1028 534M1031 517 1036 521 1041 538M1093 546 1096 567M955 396 960 404 965 400 964 383 968 387M1101 385 1096 401 1094 382 1097 371 1101 385M990 597 994 614 998 611M1096 293 1097 307M1096 293 1089 297 1092 309M1096 293 1099 298M1080 549 1080 562M1038 431 1043 434 1044 444 1049 458 1050 477 1054 459 1055 471 1062 478M1053 374 1050 385M993 521 994 532M1047 336 1046 357M1047 336 1043 338M1047 336 1054 344M1091 280 1089 297M1091 280 1096 293M954 611 955 668M1068 293 1069 312M1062 508 1067 504M1013 564 1017 567M968 296 973 292 979 295M993 314 996 327 997 307 1000 329 1005 314 1006 321M993 314 990 294M993 314 997 307 1005 314M1094 655 1093 674M1094 655 1099 670M970 486 968 472M970 486 968 502 966 487M1041 627 1042 638M1075 488 1080 493M1033 429 1033 448M981 487 983 502M1074 628 1076 643M1003 503 1004 524M1062 536 1064 547 1068 537 1071 554M1041 582 1039 596M1041 582 1047 592M1016 594 1019 606M993 314 991 329M997 487 1003 503M1080 354 1081 373 1085 388M1080 354 1083 358 1085 337M1050 446 1054 459 1058 448 1059 459 1063 449M1074 356 1075 343M1074 356 1069 371M958 291 964 297M984 596 987 608M1047 433 1049 416M1047 433 1044 444M988 580 990 597M1059 280 1061 293 1064 277 1068 293M1055 535 1059 550M959 479 959 493M1041 464 1049 458M1024 355 1027 370M1076 283 1077 291M1068 537 1074 546M1019 415 1019 428M973 608 976 610M1059 522 1062 536M1047 433 1050 446" fill="none" stroke="#000" stroke-width="1" shape-rendering="crispEdges"/>
<path clip-path="url(#ct)" d="M989 284 989 282 1002 279 1010 278 1014 275 1021 273 1038 275 1040 272 1051 273 1058 271 1069 269 1079 268 1075 264 1060 264 1053 263 1050 265 1040 265 1053 263 1063 261 1060 264 1050 265 1040 269 1027 266 1020 264 1031 263 1027 266 1040 265 1040 269 1040 272 1031 271 1021 273 1016 271 1026 269 1027 266 1016 267 1020 264 1021 261 1019 258 1006 257 1005 254 989 255 992 252 1005 254 1003 251 1007 249 1022 247 1036 248 1041 245 1053 249 1036 248 1028 244 1041 245 1056 246 1053 249 1051 252 1045 254 1052 255 1051 252 1062 255 1052 255 1055 258 1063 261 1075 264 1080 261 1080 256 1080 336 1070 335 1071 332 1060 330 1066 328 1071 332 1079 330 1079 333 1071 332 1054 332 1048 335 1053 337 1065 337 1070 335 1079 333 1080 336 1079 340 1072 341 1079 344 1079 340 1074 338 1080 336 1080 319 1076 307 1063 304 1056 302 1065 298 1063 294 1069 291 1068 288 1077 287 1067 286 1076 284 1077 287 1078 289 1069 291 1056 290 1068 288 1056 287 1044 288 1030 290 1017 288 1005 289 1003 292 991 294 975 295 963 294 956 295 945 295 957 292 963 294 970 292 975 295 983 291 991 294 994 290 983 291 970 292 957 292 956 295 964 298 975 295 979 298 975 301 987 302 1003 303 1016 304 1025 303 1034 300 1042 298 1053 295 1063 294 1059 292 1069 291 1073 294 1078 289 1076 284 1067 283 1058 279 1067 277 1060 274 1051 273 1038 275 1031 271 1040 269 1026 269 1031 271 1016 271 1001 271 995 274 987 275 992 277 995 274 1002 276 1010 278 1010 281 1011 284 1031 283 1035 281 1027 280 1020 281 1035 281 1045 282 1041 284 1035 281 1047 280 1058 279 1052 276 1051 273 1050 269 1040 272M989 284 976 286 969 289 960 289 957 292 969 289 983 291 978 288 988 288 983 291M989 284 988 288 994 290 1003 292 1015 290 1030 290 1024 291 1033 295 1042 298 1028 298 1034 300 1044 301 1056 302 1069 302 1063 304 1061 308 1076 307 1073 310 1063 311 1046 309 1035 308 1033 305 1025 303 1016 301 1016 304 1033 305 1044 306 1035 308 1026 309 1032 313 1022 316 1016 314 999 315 995 312 979 312 971 313 959 315 961 313 946 312 938 309 933 307 922 308 920 312 906 312 917 314 920 312 928 310 933 307 943 305 939 301 933 300 923 298 926 295 917 293 915 295 926 295 933 297 945 295 932 293 926 295M989 284 998 288 1005 289 1015 290 1017 288 1024 286 1030 290 1036 286 1031 283 1020 281 1011 284 1024 286 1031 283 1041 284 1036 286 1044 288 1056 290 1056 287 1067 286 1068 288 1078 289 1079 302 1080 261 1079 268 1068 266 1069 269 1068 272 1058 271 1060 274 1068 272 1072 274 1067 277 1079 278 1079 268 1076 271 1069 269 1059 267 1050 265 1050 269 1040 269M989 284 980 283 989 282 976 281 971 284 976 286 978 288 969 289 970 292M989 284 1002 285 1011 284 1009 287 1017 288M989 284 999 282 1011 284M816 318 801 317 791 317 783 315 789 312 791 309 797 306 810 304 815 302 805 301 810 304 818 305 811 309 810 311 818 313 837 313 839 310 849 310 859 310 872 311 881 312 888 309 898 309 896 305 895 303 884 304 896 305 908 304 895 303 891 300 896 298 898 295 882 294 886 297 891 300 879 299 886 297 896 298 908 297 898 295 886 297 871 298 863 300 852 298 837 297 847 296 852 298 851 301 863 300 874 302 884 304 888 307 896 305 907 307 919 304 922 308 929 304 933 307 950 308 946 312 938 315 948 315 959 315 952 318 948 315 946 312 929 312 920 312 910 309 906 312 905 315 892 316 877 316 868 315 873 318 885 318 888 321 879 322 892 324 888 321 904 321 912 323 925 325 939 328 949 326 955 325 966 324 979 327 982 329 991 329 1004 331 990 333 1000 335 1004 331 1013 332 1029 333 1033 330 1047 330 1060 330 1058 326 1066 328 1079 330 1075 327 1079 324 1079 330 1080 319 1080 256 1074 259 1063 261 1080 261 1074 259 1070 256 1080 256 1079 242 1077 244 1072 246 1056 246 1046 243 1041 245 1036 243 1046 243 1054 242 1063 243 1056 246 1069 249 1053 249 1062 252 1051 252 1042 251 1045 254 1029 254 1028 257 1045 254 1039 258 1052 255M816 318 817 321 810 324 814 326 820 330 826 328 814 326 810 329 820 330 818 332 811 334 798 334 795 336 804 338 814 339 813 342 813 344 821 343 813 342 798 340 804 338 808 336 795 336 790 338 804 338M400 264 398 268 415 270 428 268 438 270 440 267 440 264 424 265 420 261 428 256 417 254 412 249 425 245 429 243 444 240 513 240 520 243 505 242 513 240 558 240 547 243 555 245 572 248 555 248 549 251 535 253 523 254 504 251 509 249 491 250 476 252 490 253 504 251 491 250 490 253 491 257 477 261 459 261 468 263 472 267 484 270 464 272 466 275 462 279 441 280 455 281 459 284 463 287 448 286 459 284 466 282 462 279 455 281 466 282 483 282 491 285 503 286 516 285 512 288 503 286 486 287 463 287 451 290 448 286 437 288 451 290 438 292 422 294 410 292 398 294 387 292 382 294 370 296 353 295 353 299 370 296 384 299 382 294 398 294 396 297 382 294 370 291 387 292 386 289 398 286 379 286 370 283 356 285 347 283 345 279 361 277 357 272 357 269 374 270 357 272 368 273 361 277 372 276 368 273 374 270 383 274 368 273M400 264 390 265 398 268 411 267 415 270 409 273 416 277 410 281 404 277 416 277 430 281 410 281 405 284 398 286 387 283 370 283 376 279 390 277 372 276 383 274 390 277 404 277 394 280 410 281 419 284 429 286 448 286 445 283 441 280 430 281 445 283 459 284 478 285 463 287 473 291 486 287 491 285 501 282 503 286 502 289 486 287 491 291 507 292 502 295 491 297 503 298 502 295 490 294 491 297 474 296 472 300 463 303 448 306 439 309 437 312 446 316 426 315 437 312 421 312 411 310 420 307 423 304 412 303 407 301 417 300 423 304 431 301 417 300 412 303 420 307 424 310 437 312 450 309 448 306 463 307 463 303 459 300 472 300 460 297 445 296 443 300 459 300 460 297 465 294 451 290 473 291 465 294 474 296 460 297 452 294 451 290M400 264 411 267 428 268 440 267 424 265 428 268 422 272 438 270 449 269 440 267 454 265 440 264 435 261 420 261 411 263 400 264 389 262 384 259 393 256 383 253 370 252 353 252 344 248 357 246 363 249 353 252 346 255 342 258 354 258 348 261 342 258 344 265 357 269 344 269 343 272 357 272 344 269 344 265 348 261 363 261 354 258 346 255 360 255 353 252 340 253 340 311 359 310 365 313 376 312 359 310 347 307 340 311 341 327 350 329 358 332 370 332 389 332 407 332 419 330 418 334 411 336 407 332 418 334 424 338 411 336 392 338 383 336 370 332 371 338 361 337 358 332 345 334 341 327 356 324 360 322 367 319 385 318 378 321 367 319 356 318 360 322 378 321 379 325 397 324 408 325 423 324 426 322 440 324 452 322 467 325 461 328 458 331 459 334 477 334 480 331 491 329 494 325 506 322 509 319 522 317 524 321 509 319 495 318 510 315 509 319 494 321 495 318 477 317 467 314 484 314 495 318 498 315 484 314 499 311 492 308 501 307 499 311 510 315 522 317 521 314 533 311 538 308 551 306 542 304 552 301 557 298 545 297 543 294 539 290 527 293 543 294 552 292 539 290 557 287 575 286 577 289 589 293 575 292 577 289 589 286 575 286 586 283 589 286 601 284 617 285 630 286 637 289 625 290 630 286 638 284 640 282 652 279 662 278 675 277 689 278 675 274 671 272 658 270 647 268 643 271 658 270 675 269 676 266 685 268 697 267 704 265 719 264 719 262 733 259 735 261 746 263 757 263 766 262 763 259 750 257 745 254 754 251 764 253 772 252 777 254 764 253 764 256 763 259 775 258 777 254 783 252 772 252 778 249 783 252 798 251 802 249 803 246 809 244 809 240 845 241 834 242 830 244 819 244 809 244 803 242 795 240 785 241 775 240 795 240 809 240 803 242 795 244 785 241 770 242 775 240 736 240 722 241 711 243 706 246 696 247 682 248 668 246 658 245 645 243 640 241 630 243 645 243 651 240 513 240 795 240 795 244 803 246 813 246 819 244 822 241 845 241 842 244 836 246 830 244 842 244 834 242 822 241 809 240 855 240 845 241 851 243 842 244 856 245 865 247 860 249 846 250 833 251 826 253 824 256 818 258 807 260 805 263 797 262 790 265 800 268 789 268 790 265 783 263 797 262 807 260 816 261 805 263 802 265 790 265 773 266 760 268 767 271 753 273 744 271 740 274 753 273 761 274 761 277 764 280 760 283 769 287 762 290 749 290 758 287 769 287 782 285 792 282 797 279 803 277 813 275 828 276 827 273 813 275 823 278 828 276 841 275 827 273 838 272 851 269 861 272 876 271 885 273 882 276 893 275 885 273 889 270 876 271 867 273 861 272 856 274 854 278 858 282 870 283 878 282 893 284 902 283 911 283 908 280 902 283 895 281 893 284 886 280 878 282 877 279 882 276 892 278 893 275 896 272 885 273 877 274 882 276 868 276 854 278 850 276 856 274 867 273 877 274 876 271 867 270 868 266 867 264 854 266 868 266 882 269 876 271M409 273 395 274 390 277 394 280 405 284 387 283 379 286 386 289 370 291 370 288 370 283 356 280 347 283 343 286 356 285 370 288 379 286M409 273 404 277 395 274 383 274 384 269 398 268 398 271 415 270 422 272 409 273 398 271 383 274M532 328 543 327 544 330 559 331 546 333 539 338 531 335 525 339 539 338 551 336 562 337 573 336 587 337 591 334 580 332 592 331 600 329 613 329 603 332 600 329 606 326 621 324 632 322 639 320 645 322 654 323 655 320 660 318 671 318 684 320 695 323 699 326 685 327 677 325 669 328 659 328 658 326 654 323 637 324 621 324 623 320 632 322 645 322 655 320 672 321 671 318 682 317 684 320 696 320 703 317 713 318 720 316 718 320 726 321 739 321 742 323 750 325 762 325 759 328 750 325 737 327 742 323 733 324 726 321 734 317 720 316 708 315 703 317 691 315 691 311 679 311 683 308 691 311 705 311 707 307 720 310 727 312 738 312 728 315 720 316 718 314 727 312 716 312 720 310 705 311 693 308 707 307 712 304 697 303 700 299 707 296 710 292 698 292 702 289 710 292 713 290 702 289 705 287 710 284 703 282 690 284 678 283 673 286 670 288 662 290 653 288 657 286 662 290 674 292 670 288 657 286 673 286 683 286 678 283 666 283 673 286 680 288 670 288M532 328 544 330 546 333 531 335 534 332 544 330 559 328 569 326 580 325 589 323 577 322 569 326 560 324 568 320 562 316 560 312 562 307 551 306 561 303 542 304 538 308 548 310 560 312 569 310 562 307 571 305 566 300 557 298 566 295 554 295 557 298 575 298 592 300 592 304 603 302 592 300 581 301 566 300 552 301 545 297 554 295 543 294 531 297 545 297 539 300 542 304 527 302 518 300 503 298 504 301 501 307 491 304 492 308 476 308 463 307 450 309 439 309 420 307 408 306 412 303 394 304 407 301 394 301 379 303 384 299 394 301 396 297 384 299 364 301 370 296 363 294 353 295 341 295 340 311 345 318 347 321 360 322 368 324 378 321 387 322 385 318 396 315 410 314 411 310 424 310 421 312 410 314 400 311 411 310 408 306 394 304 379 303 368 304 354 303 353 299 343 298 341 295 342 289 343 286 345 279 349 275 343 272 342 258 340 253 344 248 363 249 370 252 375 249 386 246 408 245 425 245 408 242 429 243 422 240 513 240 534 241 547 243 544 246 549 251 561 251 572 248 576 244 555 245 555 248 544 246 555 245 558 240 569 242 580 241 558 240 597 241 613 242 627 241 640 241 651 240 558 240 534 241 520 243 506 246 509 249 521 249 523 254 512 255 504 251 501 255 490 253 474 255 476 252 465 253 474 255 491 257 506 259 519 262 540 260 550 262 561 260 567 264 550 262 549 258 561 260 559 257 563 253 575 255 559 257 549 258 540 260 530 258 523 254 538 256 549 258 546 253 549 251 535 248 535 253 538 256 546 253 563 253 561 251 555 248M532 328 517 324 524 321 536 319 522 317 539 315 533 311 548 314 560 312 574 315 562 316 553 318 568 320 577 322 580 325 590 327 600 329M863 292 859 290 845 288 856 287 871 285 870 283 882 285 893 284 906 285 902 283M863 292 848 291 859 290 856 287 856 284 870 283 866 280 858 282 856 284 871 285 882 285 878 282 866 280 854 278 846 280 858 282 847 282 856 284 841 285 827 284 823 286 831 289 828 291 824 293 815 296 831 295 824 293 839 293 828 291 838 290 845 288 831 289 833 286 827 284 813 284 823 286 813 287 802 289 794 291 783 292 778 295 777 298 772 300 764 302 780 302 777 298 768 296 778 295 771 293 783 292 783 288 802 289 805 291 794 291 783 288 769 287 772 285 776 282 792 282 791 286 802 289 801 285 792 282 784 279 797 279 790 277 803 277 798 274 786 270 789 268 773 266 783 263 776 260 763 259 754 261 757 263 752 266 760 268 776 269 786 270 799 270 800 268 802 265 797 262 798 258 799 256 795 253 798 251 807 254 799 256 807 257 818 258 814 255 824 256 831 257 818 258 816 261 816 265 805 263M863 292 877 290 889 289 899 291 902 288 889 289 877 288 871 285 866 287 856 287 841 285 845 288 833 286 823 286 815 290 802 289M863 292 873 295 882 294 889 293 889 289 893 287 893 284M863 292 874 293 882 294M929 312 938 315 927 315 917 314 905 315 912 318 904 321 892 324 881 325 897 327 896 330 890 332 884 335 870 337 854 337 851 333 855 331 856 328 868 329 877 331 864 334 854 337 861 339 877 341 881 345 888 343 877 341 870 337 861 339 850 339 854 337 845 335 851 333 841 333 855 331 868 329 878 328 881 325 869 324 868 321 860 319 873 318 868 321 858 322 860 319 849 320 843 318 840 321 833 322 835 325 826 328 841 330 856 328 842 327 835 325 846 323 840 321 849 320 858 322 869 324 858 324 856 328 847 325 835 325 821 325 814 326 803 327 798 329 798 334 786 331 798 329 785 328 786 331 782 333 770 334 767 336 758 334 770 334 775 337 767 336 764 339 751 341 736 341 740 343 751 341 752 344 717 345 704 345 690 345 688 342 683 340 697 342 688 342 678 343 690 345 665 345 657 341 649 342 654 344 657 341 668 340 665 345 678 343 668 340 683 340 678 343M929 312 917 314 917 316 912 318 917 320 912 323 928 322 939 322 950 322 959 321 966 324 967 327 972 330 982 329 981 332 990 333 975 334 968 332 972 330 979 327 967 327 955 328 949 326 940 325 939 322 931 319 917 320 904 321 904 325 912 323 912 327 915 329 915 332 920 336 927 337 931 342 928 345 962 345 952 342 951 339 960 337 951 336 951 339 942 341 952 342 951 344 962 345 974 344 981 342 991 342 1001 340 1009 337 1000 335 987 337 984 335 990 333 991 329 979 327 981 324 966 324 972 322 959 321 952 318 945 320 939 322M929 312 938 309 928 310 922 308 910 309 898 309 906 312 891 313 892 316 880 314 881 312 866 313 859 310 847 313 839 310 850 308 859 310 858 314 868 315 866 313 872 311 863 307 859 310M929 312 928 310M709 252 711 254 703 256 703 259 719 262 727 263 719 264 731 267 724 270 714 270 719 273 711 276 702 274 699 272 701 269 697 267 690 264 704 265 696 261 690 264 676 266 661 268 658 270 663 273 671 272 675 269 685 268 690 264 683 263 676 266 673 262 663 262 666 259 652 257 654 255 648 253 649 249 659 252 654 255 669 256 652 257 640 255 654 255M709 252 719 252 723 254 733 251 745 249 755 249 756 246 745 249 754 251 755 249 765 249 772 252M709 252 704 250 696 247 695 244 706 246 713 248 724 247 719 250 704 250 706 246 721 245 722 241 709 241 695 244 711 243 709 241 736 240 795 240 693 240 513 240 855 240 916 240 918 243 912 247 911 250 922 248 927 251 943 251 952 254 952 257 944 259 943 262 955 264 969 263 967 260 956 261 952 257 936 258 944 259 930 260 943 262 949 266 955 264 964 265 969 263 979 267 970 268 962 272 966 274 960 276 946 277 936 278 935 281 933 283 923 281 935 281 948 280 936 278 935 275 946 277 948 280 960 279 946 277 944 274 935 275 937 272 944 274 954 274 946 277M709 252 719 250 733 251 719 252 719 250 713 248 721 245 711 243M622 249 607 249 598 247 592 251 607 249 603 253 598 256 608 256 617 258 631 260 641 261 633 263 631 260 627 256 617 258 606 258 598 256 592 259 578 261 561 260 574 258 559 257 546 253 535 253 521 249 504 251M622 249 615 252 607 249 614 247 622 249 626 252 627 256 640 255 648 253 659 252 669 256 666 259 655 261 652 257 637 258 631 260 619 262 617 258 619 254 627 256 637 258 641 261 655 261 663 262 677 260 666 259 681 258 669 256 683 255 673 253 684 251 682 248 684 245 696 247 695 249 682 248 669 250 668 246 684 245 695 244 679 242 693 240 695 244M422 294 429 291 437 288 429 286 414 287 398 286 402 289 387 292M1047 325 1054 324 1062 322 1047 321 1037 321 1028 322 1041 323 1037 321 1044 318 1047 321 1054 324 1058 326 1051 327 1060 330 1054 332 1047 330 1051 327 1047 325 1058 326 1065 325 1062 322 1056 319 1047 321 1041 323 1054 324 1065 325 1066 328 1075 327 1065 325 1072 322 1062 322 1070 319 1056 319 1050 316 1043 313 1032 313 1034 316 1022 316 1010 317 1010 319 1000 322 991 323 982 321 996 319 1010 319 999 317 999 315 1010 317 1016 314 1015 310 1020 307 1033 305 1042 304 1025 303 1023 300 1034 300 1042 304 1044 306 1046 309 1043 313 1053 312 1046 309 1061 308 1073 310 1071 313 1063 311 1053 312 1050 316 1044 318 1056 319 1061 315 1050 316 1034 316 1043 313 1036 310 1032 313 1023 313 1022 316 1023 319 1037 321 1034 318 1022 316M438 292 437 288M864 259 853 259 838 259 831 257 828 261 818 258M864 259 878 259 887 261 893 258 909 257 908 260 893 258 878 259 869 261 867 264 881 265 868 266 860 268 861 272 867 270 882 269 889 270 896 272 901 269 906 267 904 264 916 266 921 269 906 267 916 266 913 263 904 264 891 265 887 261 880 263 867 264 850 264 854 266 860 268 851 269 854 266 840 266 851 269 839 269 838 272 841 275 850 276 838 278 828 276M864 259 859 256 853 259 845 255 838 259 828 261 816 261 822 263 816 265 802 265 810 267 800 268 808 269 820 268 816 265 827 266 820 268 825 270 827 273 813 273 813 275 798 274 799 270 789 268 776 269 767 271 761 274 774 276 761 277 773 279 764 280 752 281 760 283 772 285 782 285 791 286 801 285 813 287 813 284 801 285 802 281 797 279M703 282 712 280 725 279 737 280 730 283 721 282 725 279 721 276 711 276 712 280 721 282 737 280 741 282 730 283 724 285 721 282 710 284 715 287 702 289 691 289 698 292 707 296 710 299 700 299 695 295 698 292 685 292 674 292 662 294 651 295 656 292 662 290 649 291 653 288 644 287 637 289 649 291 656 292 674 292 680 288 685 292 691 289 680 288 683 286 690 284 692 280 689 278 683 281 678 283 669 280 662 278 665 276 675 274 675 277 665 276 663 273 675 274 692 274 689 278 699 278 703 282 692 280 683 281 675 277 669 280 666 283 657 286 648 285 640 282 623 283 617 285 604 287 589 286 592 289 589 293 601 292 614 295 630 294 631 292 637 289M917 320 928 322 931 319 925 318 912 318 901 317 892 316 885 318 877 316 873 318 859 317 843 318 837 313 847 313 849 310 850 308 858 305 847 303 851 301 858 302 863 300 862 296 852 298 836 300 847 303 837 306 826 307 811 309 800 308 791 309 778 310 789 312 793 314 791 317 792 319 796 322 810 324 803 327 785 328 775 326 762 325 767 323 779 322 796 322 803 321 810 324 821 325 817 321 833 322 829 320 843 318 849 316 837 313 830 317 818 313 824 310 810 311 804 314 818 313 830 311 839 310 836 308 837 306 848 306 847 303 858 302 858 305 848 306 850 308 836 308 824 310 811 309 808 306 810 304 822 303 815 302 816 300 805 301 791 301 780 302 772 300 768 296 751 295 748 297 734 298 722 299 710 299 722 302 722 299 731 300 734 298 744 300 738 303 740 307 756 307 767 307 770 311 764 313 770 317 779 319 779 322 792 319 779 319 767 320 770 317 783 315 793 314 801 317 803 321 817 321 829 320 840 321M943 285 933 283 936 286 933 290 948 289 953 286 960 289 948 289 957 292 946 291 945 295 952 297 956 295M684 320 672 321 660 318 649 318 639 320 643 316 631 314 626 311 617 310 610 307 622 305 636 305 637 308 626 311 616 314 602 315 596 318 611 320 623 320 628 318 639 320M684 320 681 322 695 323 696 320 707 322 703 317 691 317 696 320M590 245 598 247 604 245 613 242 621 244 604 245 597 241 580 241 576 244 569 242 555 245M590 245 597 241 651 240 627 241 597 241M590 245 604 245 614 247 598 247 586 247 572 248 578 251 563 253M590 245 580 241M590 245 576 244 586 247 592 251 603 253 615 252 626 252 640 255 637 258 646 259 652 257M590 245 586 247 578 251 575 255 586 253 598 256 584 257 575 255 574 258 578 261 567 264 575 268 573 271 584 270 598 268 598 271 595 274 578 277 565 277 556 275 538 274 535 277 536 280 526 283 516 285 524 287 539 290 543 287 557 287 552 292 554 295 564 292 575 292 566 290 577 289 592 289 604 287 601 284 586 283 573 283 575 286 566 290 552 292 564 292 566 295 579 294 575 292M930 302 939 301 950 301 964 298 963 294M930 302 943 305 950 301 964 303 975 301 978 304 987 302 1004 301 1016 301 1023 300 1028 298 1018 298 1023 300 1011 299 1016 301 1003 303 1004 301 998 299 1005 297 1018 298 1018 295 1024 291 1033 292 1030 290 1040 290 1044 288 1041 284 1052 284 1044 288M930 302 933 300 933 297 923 298 908 297 915 295 898 295 906 293 917 293 924 291 933 290 932 293 917 293 909 290 902 288 918 289 924 291 909 290 918 289 906 285 911 283 923 281 908 280 903 278 895 281 908 280 922 279 936 278 924 275 935 275 928 273 930 269 921 269 915 271 906 267 891 265 880 263 878 259 873 257 870 254 882 253 871 250 865 247 871 244 880 245 892 244 898 246 887 247 892 244 896 242 885 240 916 240 942 240 940 243 935 246 922 248 912 247 898 246 902 248 887 247 880 245 878 248 887 247 896 250 911 250 902 248 912 247 906 244 918 243 929 241 940 243 928 243 918 243 925 246 922 248 916 252 911 250 906 252 916 255 909 257 900 256 893 258 884 256 878 259M930 302 921 302 919 304 908 304 921 302 923 298 915 295 906 293 909 290 899 291 906 293 889 293 898 295M930 302 929 304 919 304M692 280 699 278 702 274 692 274 691 271 697 267 707 268 704 265 718 267 714 270 701 269 707 268 714 270 711 272 702 274M394 309 374 309 359 310 363 306 374 309 376 312 388 313 396 315 400 311 388 313 394 309 411 310M394 309 400 311M394 309 408 306M394 309 376 312 379 315 367 319 367 316 365 313 349 314 359 310M394 309 383 306 374 309M654 276 652 279 640 276 627 275 626 278 616 279 603 280 601 284 612 283 617 285 615 288 630 286 623 283 627 280 626 278 636 278 652 279 655 282 662 278 654 276 640 276 636 278 627 275 619 272 617 276 627 275 633 272 619 272 626 270 636 268 647 268 635 266 633 263 620 266 635 266 636 268 643 271 648 272 658 270M887 341 900 339 913 342 911 344 928 345 922 343 913 342 909 338 920 336 928 334 915 332 923 331 915 329 924 328 923 331 928 334 937 336 927 337 928 334 943 334 937 336 951 336 940 338 951 339 965 339 960 337 966 335 975 334 984 335 1000 335 1010 335 1004 331 1000 327 991 329 981 332 972 330 959 331 955 328 939 328 944 331 955 328 955 325 950 322 945 320 931 319 936 318 938 315M887 341 877 341 867 342 861 339 853 341 861 344 867 342 869 345 928 345 951 344 940 344 952 342 965 339 975 340 981 342 988 345 962 345 966 342 952 342M887 341 890 338 884 335 876 333 877 331 890 332 902 332 915 332 907 335 920 336 921 339 913 342 900 342 900 339 909 338 893 336 884 335 881 339 877 341 869 345 881 345 897 345 928 345 940 344 931 342 942 341 940 338 931 342 922 343 911 344 897 345 888 343 887 341 900 342 911 344M752 266 746 263 754 261 750 257 764 256 777 254 785 256 799 256 788 258 775 258 776 260 766 262 754 261 742 260 750 257 739 256 745 254 755 255 764 253 765 249 754 251 755 255 750 257M713 318 718 320 734 317 747 318 739 321 734 317 739 315 747 318 760 318 770 317 756 316 747 318 752 322 742 323M615 331 613 329 606 326 589 323 590 327 592 331 591 334 603 332 592 331 581 329 569 326 569 330 580 332 581 329 580 325M615 331 603 332 605 334 591 334 600 338 606 342 616 342 627 341 616 338 606 342 614 345 690 345 697 342 706 340 718 337 727 337 744 336 758 334 745 333 744 336 731 334 719 332 714 329 726 327 737 327 730 330 714 329 705 331 712 333 719 332 730 330 731 334 727 337 720 335 712 333 703 334 705 331 719 332 720 335 731 334 745 333 753 331 758 334 750 338 751 341 739 338 736 341 724 340 739 338 744 336 750 338 767 336M718 337 720 335 708 336 712 333M718 337 724 340 727 337 739 338 750 338 764 339 775 337 781 339 788 342 795 345 813 344 840 345 704 345 1033 345 1079 344 1068 344 1033 345 1010 345 999 343 1001 340 997 338 1000 335M718 337 716 341 706 340 696 339 697 342 704 345 539 345 563 344 577 342 560 341 563 344 551 344 560 341 562 337 552 339 539 338 543 341 560 341 552 339 551 336 546 333 534 332 523 330 514 334 531 335 516 337 525 339 517 342 502 344 487 344 472 342 478 338 477 334 458 331 480 331 495 333 491 329 479 326 467 325 469 320 452 322 445 319 446 316 434 318 426 322 418 319 426 315 421 312M535 277 522 280 536 280 550 283 557 287 566 290 564 292 579 294 589 293 591 296 592 300 604 296 614 295 615 291 630 294 633 297 646 298 636 300 633 297 623 300 636 300 644 302 646 298 642 296 633 297 622 298 630 294 642 296 651 295 653 297 646 298 656 300 654 303 652 305 636 305 632 303 622 305 606 305 603 302 620 303 622 305 626 308 626 311 642 311 637 308 652 305 644 302 636 305 626 308 617 310 602 310 595 307 606 305 620 303 623 300 622 298 614 295M707 296 695 295 686 294 698 292M916 240 929 241 928 243 935 246 947 245 940 243 950 242 942 240 929 241M481 274 466 275 475 279 487 277 497 273 484 270 462 268 464 272 481 274 487 277 503 277 497 273 509 274 519 272 517 269 505 266 519 262 505 262 506 259 512 255 501 255 506 259 491 260 477 261 468 263 454 265 459 261 464 259 474 255 477 261 464 259 448 260 440 264M866 287 877 290 877 288 882 285 893 287 902 288 906 285 893 287 877 288 866 287 859 290 877 290 889 293 899 291M635 266 625 267 636 268 633 272 643 271M1009 337 1010 335 1013 332 1021 331 1029 333 1033 336 1048 335 1043 339 1028 338 1022 342 1021 344 1010 345 988 345 928 345M1009 337 1020 337 1028 338 1033 336 1043 339 1053 337 1064 339 1065 337 1059 334 1071 332M1009 337 997 338 987 337 978 337 960 337M1009 337 1013 339 1022 342 1032 342 1028 338 1013 339 1001 340 1008 342 1022 342M367 329 358 332M367 329 370 332 361 337 348 337 356 339 352 343 342 345 341 327 358 327 350 329 345 334 348 337 344 341 352 343 364 341 371 338 383 336 389 332 398 330 407 332 395 335 411 336 402 340 409 344 397 344 382 343 364 341 356 339 371 338 383 340 397 344 368 344 352 343M367 329 379 325 387 322 397 324 392 328 408 325 407 329 419 330 432 333 418 334M367 329 350 329M1069 302 1065 298 1053 295 1046 292 1056 290 1059 292 1053 295 1053 299 1056 302 1052 304 1063 304 1054 307 1044 306 1052 304 1044 301 1042 298 1053 299 1065 298 1074 300 1069 302 1079 302 1079 305 1076 307M466 282 475 279 462 279 449 275 441 280 428 276 416 277M616 338 600 338 605 334 616 338 616 342 614 345 704 345 472 345 487 344 483 341 491 339 478 338 483 341 472 342 472 345 539 345 551 344 543 341 539 345 614 345 665 345 654 344 627 344 616 342M616 338 627 336 627 341 638 338 627 336 618 335 605 334 615 331 628 330 636 332 638 329 631 326 621 324 612 323 611 320 619 317 631 314 628 318 632 322 637 324 645 322 649 318 655 320 664 323 654 323 641 326 658 326 650 327 659 328 668 326 677 325 688 325 699 326 710 325 714 329 702 328 699 326 707 322 695 323 688 325 685 327 676 330 676 332 668 335 661 333 676 332 685 331 685 327 669 328 676 330 685 331 683 334 676 332 665 330 659 328 650 330 636 332 646 333 661 333 652 335 668 335 680 337 683 340 696 339 680 337 683 334 668 335 656 338 657 341 647 339 649 342 639 341 627 341 627 344 665 345M414 287 405 284 419 284 430 281 428 276 409 273M752 322 762 325 768 329 759 328 753 331 740 331 731 334M752 322 750 325 747 329 759 328 768 331 770 334 785 336 795 336M752 322 739 321 733 324 737 327 740 331 745 333M752 322 767 323 775 326 779 322 767 320 767 323M702 328 705 331 695 330 685 331 692 328 699 326M933 290 946 291 948 289 936 286 928 287 933 290M410 292 410 296 398 294 402 289 410 292 419 290 422 294 428 298 417 300 410 296 422 294 433 295 428 298 445 296 459 300 448 303 448 306 435 305 423 304M831 257 845 255 859 256 870 254 857 252 846 250 848 253 833 251 835 248 836 246 847 247 865 247 878 248 871 250 870 254 884 256 900 256 916 255 929 254 927 251 916 252 916 255 929 256 936 258 930 260 920 261 913 263 908 260 920 261 927 263 943 262 936 264 949 266 956 269 970 268 964 265 979 267 990 267 998 265 994 263 1003 262 998 265 1006 266 990 267 978 269 970 268 974 273 987 275 984 271 995 274 1006 274 1021 273 1029 277 1014 275 1019 278 1010 278M860 319 859 317 868 315 880 314 877 316M881 265 891 265 898 262 887 261M739 315 738 312 753 313 764 313 756 316 753 313 739 315 756 316 760 318 767 320 752 322 760 318M1026 241 1014 242 1001 243 989 246 980 245 989 242 989 246 975 247 980 245 970 243 975 247 969 250 953 251 952 254 964 254 953 251 943 251 929 254 929 256 930 260 927 263 916 266 928 266 921 269M1026 241 1044 241 1046 243 1063 243 1077 244 1079 248 1080 256 1078 252 1079 248 1079 242 1063 243 1067 241 1054 242 1044 241 1067 241 1079 242M747 285 760 283 758 287 762 290 771 293 768 296 758 299 764 302 748 303 738 303 728 304 740 307 727 307 720 310 717 308 707 307 698 305 697 303 684 305 672 306 683 308 693 308 691 311 681 313 679 311 668 309 672 306 665 304 654 303 644 302 632 303 636 300M802 281 792 282M802 281 803 277 816 280 823 278 824 281 827 284 834 281 823 278 838 278 854 278M838 259 844 261 853 259 859 262 867 264M680 300 669 300 671 297 662 294 676 295 685 292 686 294 676 295 674 292M680 300 671 297 676 295 688 298 700 299 685 302 697 303 707 301 700 299M680 300 688 298 695 295M680 300 685 302 688 298 686 294M680 300 676 302 672 306 662 307 652 305 665 304 669 300 662 298 662 294 656 292 643 293 631 292 615 291 625 290 615 288 604 287 605 290 615 291 615 288 605 290 601 292 615 291M515 304 501 307 524 307 533 311 548 310 551 306M1044 344 1033 345 472 345 524 345 517 342 529 342 539 345 524 345 502 344 501 341 517 342 506 339 525 339 543 341 529 342 525 339M1044 344 1032 342 1033 345 1021 344 1032 342 1043 339 1054 340 1053 337 1059 334 1048 335 1039 332 1029 333 1020 334 1013 332 1012 329 1004 331M1044 344 1068 344 1072 341 1064 339 1054 340 1047 342 1043 339M979 327 992 326 991 323 996 319 1000 322 1007 324 991 323 981 324 982 321 986 318 996 319 999 317 1010 317 1023 319 1010 319 1013 321 1000 322M347 321 356 324 358 327 368 324 379 325 381 329 370 332M347 321 356 318 345 318 344 324 340 311 349 314 345 318M868 276 867 273M868 276 877 279 886 280 895 281 892 278 903 278 902 276 893 275 906 272 896 272M643 293 651 295M643 293 630 294M643 293 649 291 631 292 625 290M643 293 642 296 653 297 662 294M343 286 343 272 341 295 340 253 342 244 345 241 422 240 444 240 492 240 513 240M710 325 726 327 730 330 740 331 747 329 737 327M710 284 712 280 721 276 719 273 724 270 733 271 744 271 742 268 733 271 740 274 729 273 721 276 735 277 740 274 749 275 761 277 754 279 764 280 776 282 760 283M710 284 724 285 715 287 705 287 701 284 703 282M710 284 701 284 690 284 683 281 669 280 655 282 640 282 636 278 627 280 616 279 617 276 626 278M999 343 991 342 988 345 1033 345 869 345 704 345 711 343 706 340 708 336 718 337M999 343 988 345 974 344 966 342 981 342 985 340 1001 340M1029 277 1027 280 1019 278 1010 281 1002 279 992 277 1002 276 1014 275 1006 274 1016 271 1016 267 1026 269M1029 277 1038 275 1052 276 1067 277 1072 280 1076 284 1079 278 1080 261 1080 319 1079 333M837 313 830 311 824 310 826 307 818 305 808 306 797 306 800 308 808 306M831 295 847 296 862 296 871 298 874 302 858 302 872 305 884 304 876 309 881 312 891 313 905 315 917 316 925 318 917 320M831 295 839 293 847 296 855 294 848 291 845 288M427 345 409 344 422 341 411 336M427 345 422 341 424 338 438 338 432 333 424 338 438 341 438 338 453 341 472 342 459 337 459 334 445 332 458 331 446 328 440 324 423 324 427 328 419 330 436 330 432 333 445 332 436 330 446 328 461 328 475 329 467 325 481 322 495 318M427 345 397 344 402 340 383 340 383 336 395 335 389 332 381 329 398 330 392 328 379 325M427 345 472 345 458 345 472 342M427 345 342 345 344 341 341 327 344 324 356 324 368 324 367 329 381 329 392 328 407 329 407 332M427 345 368 344 342 345M1078 252 1062 252 1062 255 1055 258 1050 260 1053 263 1039 262 1040 265 1031 263 1021 261 1003 262 1010 259 1006 257 1016 256 1005 254 1017 253 1029 254 1016 256 1019 258 1028 257 1016 256 1017 253 1003 251 992 252 979 253 989 255 987 258 976 259 969 263 983 262 994 263 983 265 969 263 956 261 943 262M573 334 573 336 561 334 551 336M976 256 989 255 997 257 1006 257M735 294 734 298 720 296 707 296 718 294 710 292M735 294 751 295 763 294 755 292 749 290 733 290 722 289 715 287 713 290 722 289 728 292 713 290 718 294 728 292 733 290 743 287 749 290 743 292 751 295 755 292 762 290 775 290 769 287M735 294 728 292 743 292 733 290 730 287 715 287M735 294 743 292 755 292 771 293 763 294 768 296 748 297 744 300 748 303 758 299 772 300M735 294 748 297 758 299 744 300 731 300 738 303 748 305 740 307 747 310 738 312 730 310 727 312 728 315 734 317M640 248 622 249 638 251 648 253M640 248 649 249 638 251 640 255M640 248 648 246 645 243 639 245 629 246 622 249M640 248 639 245 630 243 627 241 621 244 630 243 629 246 621 244 614 247 629 246 640 248 638 251 626 252 619 254 603 253 608 256 606 258 619 262 633 263 648 263 641 261 646 259 655 261 658 264 676 266M733 243 722 241M733 243 745 243 761 244 755 241 775 240M733 243 736 240 755 241 745 243 745 241 755 241 770 242 761 244 756 246 745 243 731 245 724 247 721 245 733 243 745 241 736 240 693 240 709 241M480 331 475 329 491 329 509 330 523 330 532 328 534 332 514 334 501 336 491 339 506 339 501 336 495 333 477 334 459 337 438 338 448 336 459 334M598 271 584 270 575 268 583 265 567 264 563 266 547 269 536 265 550 262 552 265 567 264M598 271 585 273 595 274 593 278 578 277 571 274 556 275 542 272 547 269 561 270 556 275 549 277 565 277 579 280 562 280 565 277 571 274 573 271 585 273 578 277 579 280 586 283 593 281 603 280 593 278 593 281 601 284M768 329 775 326 777 330 786 331M768 329 768 331 758 334M768 329 777 330 782 333 798 334 808 336 811 334 821 337 814 339 808 336 821 337 835 338 843 341 840 345 717 345 795 345 840 345 869 345 861 344 852 344 840 345 831 343 821 343 824 340 813 342 802 342 788 342 776 341 764 339 781 339 776 341 780 344 795 345 769 344 717 345 740 343 752 344 769 344 776 341 762 342 751 341M441 258 428 256 435 261 424 265 411 267 411 263 424 265M441 258 435 261 448 260 459 261M441 258 448 260 454 265 472 267 492 268 484 270 502 270 519 272 525 275 535 277 516 277 522 280 526 283 524 287 512 288 518 290 539 290M441 258 438 255 438 251 455 251 465 253 475 249 476 252M974 273 962 272 956 269 944 268 930 269 915 271 901 269 889 270 889 267 906 267M974 273 966 274 954 274 962 272 945 271 956 269 958 267 955 264 956 261 944 259M974 273 978 269 979 267 983 265 998 265 1010 264 1020 264M974 273 984 271 978 269 997 269 990 267 983 265 983 262 976 259 967 260 962 257 952 257 940 255 952 254 962 257 976 259 976 256 987 258 997 257 1005 254M974 273 980 277 987 275M505 242 506 246 493 244 505 242 492 240 477 241 462 240 469 244 473 247 459 248 457 245 473 247 483 244 469 244 477 241 483 244 493 244 488 247 473 247 475 249 491 250 488 247 509 249 523 246 520 243 533 244 547 243M625 267 620 266 608 266 598 268 608 270 619 272 607 273 595 274 606 277 616 279 612 283 603 280 606 277 593 278 579 280 573 283 562 280 563 283 575 286M625 267 626 270 608 270 598 271 607 273 617 276 606 277 607 273 608 270 612 268 598 268 587 268 584 270 585 273 571 274 561 270 573 271M884 302 895 303 902 301 891 300 884 302 884 304M492 268 497 264 505 262 505 266 497 264 491 260 491 257 501 255M969 278 966 274 980 277 992 277 987 279 1002 279 1002 276 1006 274 1001 271 984 271 997 269 1001 271 1007 269 1016 271M969 278 960 279 960 276 954 274 945 271 944 274M969 278 960 276M969 278 976 281 987 279 989 282 999 282 1002 279M969 278 980 277 976 281 980 283 971 284 956 283 948 280 942 282 935 281 922 279 912 277 908 280M692 257 703 256 699 253 688 253 684 251 695 249 688 253 683 255 681 258 677 260 673 262 683 263 696 261 708 263 704 265M692 257 688 253 673 253 669 256M692 257 683 255M692 257 681 258 687 260 696 261 703 259 708 263 719 262 719 259 733 259 727 263 735 261 742 260 746 263 742 266 731 267 733 271 729 273 724 270 718 267 719 264 708 263M692 257 703 259 687 260 677 260 683 263 687 260 692 257 699 253 709 252M777 313 764 313 760 310 770 311 778 310 781 307 791 309 799 311 789 312 777 313 770 317 781 317 779 319M777 313 778 310 767 307 773 304 764 302 758 305 756 307 760 310 753 313 747 310 756 307 748 305 748 303 758 305 767 307 781 307 797 306 785 304 780 302 773 304 785 304 791 301 786 299 777 298 789 297 778 295 793 294 783 292 775 290 783 288 791 286M777 313 770 311M699 253 695 249 704 250 713 248M448 243 457 245 469 244M448 243 429 243 437 245 425 245 429 248 438 251 444 248 459 248 455 251 444 248 457 245 462 240 444 240 448 243 462 240 492 240 493 244M448 243 444 248 429 248 412 249 408 245 408 242 422 240 396 241 408 245 393 249 386 246 385 243 408 245M448 243 437 245 444 248M1017 250 1007 249 1012 245 1022 247 1028 244 1014 242 1012 245 1001 243 989 242 1003 241 1014 242M876 309 872 311M876 309 888 309 888 307 898 309 891 313 888 309M876 309 863 307 858 305 872 305 874 302 879 299 871 298 873 295 886 297M876 309 888 307M581 318 562 316 548 314 553 318 536 319 539 315 553 318 555 321 568 320 581 318 577 322 560 324 547 324 543 327 559 328 560 324 555 321 547 324 559 328 559 331 561 334 562 337 570 339 577 342 589 340 606 342 597 343 589 340 570 339 573 336M804 314 815 316 818 313M902 332 896 330 886 329 881 325 879 322 868 321M902 332 915 329 904 329 896 330M902 332 907 335 909 338 921 339 931 342M1033 292 1033 295 1028 298 1018 295 1033 295 1044 294 1042 298M1033 292 1046 292 1059 292M1033 292 1044 294 1053 295M988 297 975 295M988 297 991 294 1001 295 1003 292 1012 293 1024 291 1015 290 1012 293 1018 295 1005 297 1011 299 1018 298M988 297 998 299 1011 299 1004 301 988 300 987 302 993 305 978 304 968 305 965 308 981 307 978 304 964 303 968 305 981 307 992 307 988 309 979 312 984 315 999 315 1006 312 1015 310 1023 313 1016 314 1006 312 995 312 988 309 981 307 993 305 992 307 999 310 1015 310 1012 308 1008 305 1003 303 993 305 1008 305 1016 304 1020 307 1035 308 1036 310 1046 309 1054 307 1061 308 1063 311M988 297 1005 297 1001 295 1012 293M989 246 1001 246 1007 249 995 250 992 252 981 250 989 246 995 250 1003 251 1017 250 1022 247 1029 250 1036 248 1042 251 1053 249M606 326 590 327 581 329 569 330 559 331 573 334 591 334M754 251 742 252 745 249 732 249 724 247M389 262 390 265 377 266 374 270 384 269 390 265M389 262 377 266 373 263 384 259 372 259 354 258 360 255 370 252 377 255 384 259 396 260 400 264M1002 307 992 307M774 276 773 279 776 282 782 285 783 288M774 276 790 277 798 274 788 274 786 270 779 273 767 271 754 270 744 271M774 276 788 274 790 277 784 279 773 279M774 276 779 273 776 269 773 266 762 265 757 263M668 309 683 308 684 305 693 308 698 305 712 304 722 302 728 304 712 304 727 307 728 304 731 300 722 302 707 301 710 299 720 296 722 299M668 309 654 312 652 309 637 308 626 308 610 307 606 305 592 304 595 307 610 307 602 310 606 313 602 315 589 315 596 318 581 318 574 315 589 315 581 318 591 320 589 323 602 321 596 318 591 320 577 322M1002 285 1009 287 1005 289 994 290 998 288 988 288 976 286 963 286 960 289M1002 285 998 288 1009 287 1024 286 1036 286M1002 285 999 282 1010 281 1020 281 1019 278 1029 277 1040 278 1035 281M909 257 920 258 920 261M969 250 961 248 953 251 946 249 943 251 940 255 936 258M969 250 979 253 976 256 964 254 969 250 981 250 979 253 964 254 962 257 976 256M829 320 830 317 843 318M829 320 816 318 830 317 815 316 801 317 792 319 803 321 816 318 815 316M519 297 503 298 488 301 491 297 478 293 490 294 507 292 518 290 527 293 531 297 518 300 504 301 488 301 472 300 476 304 492 308 484 311 467 314 450 313 446 316 462 317 467 314 463 310 463 307 476 304 491 304 504 301 515 304 527 302 531 297 539 300 552 301 561 303 566 300 575 298 566 295M519 297 527 293 513 294 502 295 519 297 531 297M519 297 513 294 507 292 502 289 512 288M519 297 518 300 515 304 524 307 542 304M445 319 434 318 426 315 410 314 411 317 396 315 399 319 385 318 379 315 365 313M1073 294 1063 294 1077 297 1065 298M345 279 343 272 344 265 356 265 357 269 364 267 374 270M523 330 516 327 517 324 506 322 524 321 534 323 543 327M620 266 619 262 608 266 612 268 620 266M488 247 506 246 523 246 521 249 535 248 544 246 533 244 534 241M488 247 483 244 492 240M488 247 475 249 459 248M373 263 356 265 348 261M373 263 363 261 356 265 364 267 377 266 384 269 398 271 395 274M373 263 372 259 363 261M373 263 389 262 396 260 393 256 413 258 420 261M373 263 364 267M1054 332 1039 332 1033 330 1026 327 1021 331 1033 330 1040 328 1047 325 1041 323 1029 324 1028 322 1018 324 1007 324 1000 327 1012 329 1026 327 1029 324 1047 325M1054 332 1059 334 1070 335 1074 338 1065 337M874 293 873 295 862 296 863 292 855 294 839 293 838 290 831 289 815 290 828 291 815 292 815 296 816 300 825 301 815 302M874 293 877 290M874 293 889 293M519 262 530 258 549 258M519 262 518 258 523 254M707 322 718 320 718 323 726 321M707 322 710 325 702 328 692 328 685 327M961 313 948 315 936 318 952 318 966 319 959 315 975 318 971 313 961 313 969 311 979 312 977 309 965 308 950 308 938 309M847 313 849 316 858 314 847 313M691 317 684 320M364 301 379 303 383 306 368 304 364 301 353 299 341 300 340 311M668 326 669 328 665 330 661 333 650 330 638 329 650 327 650 330 646 333 652 335 656 338 647 339 639 341 638 338 647 339 642 336 636 332 627 334 628 330 613 329 622 327 621 324M642 336 652 335M642 336 638 338M642 336 646 333M642 336 627 336 627 334 615 331 618 335 616 338M435 305 420 307M435 305 439 309 424 310M435 305 431 301 443 300 428 298 431 301 448 303 463 303 476 304 476 308 484 311 499 311 498 315 510 315 521 314 539 315 548 314 548 310 562 307 561 303 571 305 569 310 579 313 560 312M641 326 638 329 628 330 631 326 637 324 641 326 650 327M376 279 361 277 349 275 357 272M604 262 606 258 592 259 591 262 578 261 583 265 587 268 575 268 563 266 561 270 575 268M604 262 608 266 594 265 598 268M604 262 619 262M604 262 592 259 584 257 586 253 603 253M604 262 591 262 583 265 594 265 587 268M483 282 475 279 492 280 487 277M745 254 742 252 733 251 732 249 719 250M745 254 733 254 723 254 728 256 733 259 739 256 728 256 719 259 703 259 713 257 703 256M611 300 592 300M611 300 603 302M699 278 711 276 711 272 701 269 691 271 685 268M699 278 712 280M957 333 968 332 981 332 975 334 978 337 984 335M1023 319 1028 322 1013 321 1007 324 1012 326 1026 327 1018 324 1029 324 1040 328 1051 327M1023 319 1034 318 1044 318 1034 316 1034 318M896 242 906 244 892 244 885 243 896 242 905 241 918 243M925 318 927 315 929 312M925 318 936 318 945 320 959 321 955 325 967 327 959 331 944 331 943 334 951 336 957 333 944 331 933 331 923 331M873 318 879 322 869 324 866 326 856 328M536 265 519 262 523 265 517 269 502 270 497 273 481 274 484 270M1038 275 1040 278 1027 280M858 314 866 313 880 314 891 313M858 314 859 317 849 316M952 297 964 298 975 301 988 300 998 299M525 275 538 274 542 272 561 270M525 275 509 274 503 277 516 277 525 275 530 272 519 272 528 269 547 269 552 265 563 266M833 322 846 323 849 320 859 317M833 322 821 325 826 328 842 327 847 325 858 324 858 322 846 323 858 324 866 326 881 325M1032 342 1047 342 1044 344 1055 343 1072 341 1074 338 1064 339 1055 343 1054 340M501 336 516 337 514 334 495 333 509 330 514 334M501 336 486 336 477 334M975 318 986 318 984 315 995 312 999 310 988 309 977 309 981 307M975 318 984 315 971 313 969 311 965 308 956 310 946 312M644 287 630 286M644 287 657 286 655 282 666 283M644 287 638 284 648 285 655 282M434 284 448 286M434 284 429 286 429 291 438 292 445 296 452 294 438 292 433 295 445 296M434 284 430 281M894 253 884 256 882 253 894 253 900 256 906 252 896 250 902 248M703 334 691 333 705 331M703 334 694 336 680 337 667 338 657 341M986 318 999 317 984 315M762 265 760 268 754 270 753 273 749 275 761 274 770 274 774 276 784 279 776 282M762 265 766 262 773 264 773 266M762 265 752 266 742 268 731 267 718 267 707 268M762 265 773 264 783 263 788 261 797 262M878 328 877 331 886 329 897 327 892 324 904 325 897 327 904 329 902 332 895 334 884 335M878 328 886 329 890 332 876 333 870 337 881 339 887 341M740 307 730 310 720 310M731 267 727 263 737 264 746 263M648 246 658 245 658 248 668 246 669 244 658 245 658 242 645 243M834 281 846 280 847 282 834 281 824 281 813 284 816 280 813 275M1060 274 1072 274 1079 278 1078 289 1077 297 1079 302 1079 278 1076 271 1068 272M741 282 752 281 737 280 735 277 725 279M647 314 631 314 616 314 617 310 606 313 616 314 619 317 623 320 612 323 606 326 602 321 611 320 608 317 602 315 593 311 595 307 582 305 571 305 581 301 592 304 582 305 581 301 575 298 591 296 601 292 604 296 622 298 611 300 623 300 632 303 620 303 611 300 604 296 591 296 579 294 575 298M647 314 643 316 628 318 619 317 608 317 596 318M647 314 654 312 656 316 660 318 665 315 671 318 675 315 682 317 691 315 675 315 681 313 691 315 708 315 705 311 716 312 718 314 708 315 713 318 707 322 718 323 726 327 733 324 718 323 710 325M647 314 642 311 631 314M739 315 728 315 718 314M612 283 627 280 640 282M612 283 623 283 638 284M1057 282 1067 283 1067 286 1052 284 1056 287M1057 282 1058 279 1072 280 1067 283 1052 284 1045 282 1047 280 1052 276 1060 274M1057 282 1045 282M1057 282 1047 280 1040 278 1052 276M1057 282 1052 284M640 276 648 272 663 273 654 276 665 276M640 276 633 272 648 272 654 276M736 285 730 283M736 285 741 282 747 285 752 281 745 279 737 280M736 285 724 285 730 287 722 289M736 285 743 287 758 287 747 285 736 285 730 287 743 287 747 285M1013 321 1018 324 1012 326 1000 327 992 326 991 329M1013 321 1023 319M1039 332 1033 336 1020 337 1010 335 1020 334 1033 336M527 302 539 300M527 302 524 307 538 308M912 277 903 278M866 326 868 329 864 334 851 333M997 257 1010 259 1019 258 1028 259 1028 257 1039 258 1055 258 1064 258 1063 261 1050 260 1039 262 1031 263 1028 259 1021 261 1010 259 994 259 987 258M445 332 446 328 427 328 440 324 438 321 426 322 404 321 408 325 427 328 436 330M445 332 448 336 432 333M1016 267 1006 266 1007 269 1016 267 1010 264 1021 261M428 253 417 254 402 255 393 256 377 255 383 253 375 249 363 249 368 245 386 246M428 253 438 251 446 253 455 251 475 249M945 295 942 298 939 301M944 268 949 266 937 266 930 269 937 272 945 271 930 269 928 266 927 263 913 263 898 262 904 264M944 268 937 266 936 264 927 263M940 325 939 328 924 328 925 325 928 322 940 325 950 322M752 281 754 279 745 279 735 277 729 273 719 273 711 272 699 272 692 274 699 278M655 261 648 263 635 266 649 266 647 268 661 268 675 269 691 271 699 272M396 252 417 254 413 258 402 255 396 252 393 256M396 252 383 253 393 249 412 249 428 253 428 256 438 255 428 253 429 248 437 245M396 252 412 249M396 252 393 249 375 249 368 245 357 246 342 244 344 248M562 280 549 280 536 280 535 284 526 283 511 281 516 285 501 282 483 282 492 280 503 277 511 281 522 280M807 331 811 334 828 334 818 332 807 331 820 330 832 331 826 328M807 331 798 334 785 336 775 337M1055 343 1068 344M543 287 550 283 535 284 543 287 524 287 518 290 513 294M465 294 452 294M449 275 466 275M449 275 464 272 449 269 454 265 462 268 472 267 485 264 491 260 505 262M449 275 428 276 422 272 435 273 438 270 449 272 464 272M449 275 435 273 449 272 449 269 462 268M449 275 449 272M796 322 792 325 810 324M475 329 458 331M475 329 479 326 494 325 504 327 491 329M883 250 887 247M883 250 882 253M883 250 871 250 860 249 857 252 859 256 848 253 857 252 871 250M883 250 896 250 894 253 906 252 916 252 929 254 940 255 929 256 920 258 908 260 898 262 893 258M783 252 795 253 807 254 814 255 826 253 811 252 798 251 791 249 802 249 812 249 803 246 785 247 802 249 811 252 814 255 807 257 807 260 798 258 807 257 807 254 811 252 812 249 813 246 809 244 795 244 785 247 777 245 785 241M783 252 785 256 795 253M783 252 791 249 778 249 785 247 767 247 761 244 777 245 795 244M851 243 862 242 855 240 885 240 885 243 880 245 877 242 885 240 905 241 916 240 954 240 855 240 795 240M594 265 591 262M594 265 604 262M836 303 847 303M836 303 837 306 822 303 818 305M394 280 387 283 376 279 372 276M994 259 994 263M994 259 976 259M994 259 1003 262 1010 264 1006 266 997 269 1007 269M994 259 997 257M994 259 983 262M756 246 767 247 778 249 765 249 756 246 740 247 745 249M918 289 928 287 924 291 932 293 933 297 942 298 933 300 921 302 913 299 923 298M418 319 411 317 426 315M418 319 434 318 438 321 452 322 462 317 469 320 477 317 484 314 484 311 463 310 450 309 450 313 437 312M418 319 404 321 397 324M920 258 916 255M920 258 930 260M815 290 805 291 793 294 794 291M815 290 813 287M681 322 677 325 664 323 672 321 681 322 688 325M681 322 664 323 658 326 668 326 664 323M966 319 959 321M966 319 975 318 982 321 966 319 972 322 981 324 992 326 1007 324M961 244 950 242 954 240 964 241 970 243 961 244 975 247 961 248 956 246 975 247 981 250 995 250 1001 246 1001 243 1003 241 1026 241 1036 243 1044 241 954 240 1067 241M961 244 947 245 950 242 964 241 1003 241 1044 241M961 244 956 246 947 245 946 249 935 246 925 246 912 247M961 244 964 241 979 242 980 245M341 300 354 303 364 301M341 300 341 295 350 293 353 295 343 298 341 300 347 307 354 303 363 306 368 304M866 326 878 328M1061 315 1053 312 1071 313 1073 316 1073 310 1080 319 1079 302 1074 300 1077 297 1073 294M1061 315 1070 319 1072 322 1079 324 1065 325M649 266 661 268 658 264 663 262M649 266 658 264 673 262M649 266 648 263 658 264M894 253 883 250 878 248 871 244 862 242 856 245 847 247 846 250 835 248 847 247 842 244M642 311 654 312 669 311 679 311M642 311 652 309 652 305M856 274 868 276 877 274M856 274 850 272 861 272M877 242 871 244 856 245 851 243 855 240 877 242 862 242M999 343 1008 342 1010 345M718 294 720 296 735 294 718 294M383 340 392 338 395 335M509 274 516 277 511 281 501 282 492 280 511 281M509 274 502 270 505 266 492 268 502 270M879 322 885 318 893 319 888 321M1020 334 1020 337 1013 339 1008 342 1021 344M475 279 481 274M728 343 736 341M834 281 841 285 833 286M834 281 838 278 846 280M673 253 659 252 658 248 649 249 648 246 639 245M840 266 839 269 827 266 822 263 828 261 837 263 850 264 844 261 828 261M859 262 850 264 840 266 827 266 825 270 838 272 850 272 851 269M423 324 404 321 387 322 399 319 418 319M841 275 838 278M841 275 850 272 850 276M671 297 662 298 653 297 656 300 669 300 676 302 665 304 662 307 668 309 652 309 662 307M671 297 688 298M825 270 839 269M922 285 933 283 942 282 956 283 960 279 967 281 971 284 963 286 969 289M922 285 911 283M922 285 918 289M344 341 345 334 361 337 356 339 344 341M800 303 810 304M800 303 805 301 801 298 815 296 824 298 831 295 837 297 836 300 851 301M933 331 939 328M933 331 924 328 912 327 925 325 940 325 955 325M933 331 928 334M828 334 833 336 835 338 850 339 843 341 824 340 814 339 798 340 788 342 790 338 781 339 785 336 782 333 768 331 753 331 747 329M810 267 820 268M825 301 822 303 826 307 836 308 848 306M413 258 428 256M950 301 952 297 942 298 950 301 955 305 968 305M538 274 530 272 542 272 528 269 517 269M538 274 549 277 562 280M467 325 454 326 440 324M681 313 669 311 675 315 665 315 654 312M1059 267 1060 264 1068 266 1075 264M1059 267 1058 271 1050 269 1059 267 1068 266M922 285 923 281 922 279 924 275 915 271 906 272 902 276 892 278 877 279 866 280 868 276M528 269 530 272M528 269 536 265 540 260M1074 259 1064 258 1070 256 1062 255 1074 254 1080 256M793 314 804 314 801 317M699 253 704 250M1012 245 1028 244 1026 241M504 327 517 324 534 323 547 324 544 321 524 321M504 327 506 322 494 321 494 325 481 322 469 320M504 327 509 330 516 327 532 328 534 323 544 321 553 318M504 327 516 327M979 298 964 298 964 303 955 305 965 308M979 298 988 297 1001 295 1018 295M979 298 988 300 988 297M536 265 523 265 505 266M1002 307 1008 305 1020 307 1012 308 999 310 1006 312M368 245 359 242 345 241 371 241 422 240M368 245 385 243 396 241 408 242M368 245 371 241 396 241M445 283 455 281M501 307 514 310 499 311M762 342 764 339M762 342 752 344M762 342 769 344 780 344 788 342M850 339 845 335 835 338 824 340 821 337 833 336 841 333 845 335 833 336M563 283 557 287M563 283 550 283 549 280 563 283 573 283M922 285 936 286 943 285 948 289M922 285 906 285M922 285 928 287M716 341 724 340 728 343 717 345 711 343 697 342M716 341 711 343 728 343 740 343M824 298 816 300 801 298 786 299 780 302M824 298 836 300 825 301 836 303 822 303M824 298 825 301M824 298 837 297M669 250 684 251M669 250 659 252M669 250 673 253M669 250 658 248 648 246M578 251 592 251 586 253 578 251 561 251 546 253M589 340 587 337 600 338 589 340 585 344 577 342M1028 259 1039 262 1039 258 1050 260M1028 259 1039 258M495 333 486 336 491 339 501 341 487 344 524 345 529 342M895 334 890 332M895 334 893 336 900 339 890 338 893 336 907 335 895 334M394 304 394 301M394 304 383 306 363 306 347 307M828 334 821 337M580 332 573 334 587 337 570 339 560 341M669 244 679 242 684 245 669 244 658 242 651 240 693 240 669 240 679 242M1079 324 1080 319 1070 319 1073 316 1080 319 1072 322M477 317 462 317 445 319 438 321M1062 255 1064 258M807 331 798 329 810 329 803 327 792 325 779 322M807 331 810 329M536 319 544 321 555 321M535 248 533 244 523 246 535 248M342 244 359 242 357 246M518 290 502 289 491 291 490 294M884 302 874 302M799 311 811 309M799 311 810 311M799 311 800 308M799 311 793 314M928 273 915 271 909 274 902 276 912 277 909 274 906 272 901 269 889 267 891 265M928 273 937 272M658 242 669 240 651 240M370 291 353 290 350 293 342 289 343 272 340 253 346 255M370 291 363 294 382 294M1063 304 1079 305 1069 302M654 344 641 343 649 342M716 341 728 343M957 333 943 334 933 331M957 333 966 335 968 332 959 331 957 333M458 345 440 344 453 341 438 341 422 341 402 340 392 338M1029 254 1029 250 1017 253 1017 250 1029 250 1042 251 1029 254M869 261 864 259 873 257 859 256M353 290 356 285 356 280 361 277M683 334 691 333 685 331M683 334 694 336 696 339 708 336 703 334M935 246 935 249 927 251M833 251 838 254 824 256M833 251 820 251 826 253 838 254 831 257M803 295 815 296M801 298 791 301 800 303 797 306M633 272 626 270 612 268 625 267M372 259 377 255 360 255 372 259M881 265 882 269 889 267 881 265 880 263 869 261 859 262 864 259M543 341 552 339M717 308 712 304 707 301M717 308 727 307 730 310 747 310 760 310 767 307M830 311 836 308M847 247 860 249M593 311 602 310M593 311 606 313M593 311 589 315 579 313 574 315M593 311 579 313 582 308 571 305M407 329 398 330M407 329 427 328M402 289 386 289 370 288 353 290 342 289M524 287 535 284M732 249 731 245 733 243M732 249 740 247 745 243M1044 301 1042 304 1052 304 1054 307M1044 301 1053 299M573 334 561 334 546 333M976 281 967 281 956 283 943 285 942 282M559 328 569 330 573 334M1078 252 1069 249 1079 248 1072 246 1063 243M521 314 514 310 533 311M407 301 396 297 410 296 407 301M668 309 669 311 665 315 656 316 643 316 649 318 656 316 647 314M691 317 682 317M791 317 781 317 783 315 777 313M777 245 770 242M616 314 608 317M644 287 648 285M641 326 631 326 622 327 606 326M379 315 396 315M379 315 388 313M379 315 367 316 356 318 349 314 367 316M956 310 961 313M956 310 950 308 943 305 955 305 950 308M956 310 969 311 977 309M831 343 813 344 802 342 795 345M831 343 843 341 852 344 869 345 897 345 900 342 888 343M584 257 574 258 592 259M602 321 612 323M602 321 591 320M492 268 485 264 468 263M892 316 893 319 904 321 901 317 905 315M799 311 804 314M1026 309 1015 310M1026 309 1036 310M1026 309 1023 313M739 256 742 260 733 259M739 256 733 254 733 251M682 272 671 272M434 284 445 283M434 284 419 284 414 287 419 290 429 286M978 337 966 335 951 336M978 337 975 340 966 342 965 339 978 337 985 340 991 342M810 267 816 265M476 308 463 310 450 313 462 317M852 344 853 341 850 339M614 345 585 344 563 344M614 345 627 344 641 343 627 341M411 317 399 319 404 321M478 293 473 291 491 291 478 293 465 294M478 293 474 296 488 301 491 304M536 280 549 277 535 277M368 344 364 341 383 340 382 343 368 344M454 255 465 253M454 255 474 255M454 255 455 251M454 255 464 259M454 255 441 258M454 255 448 260M454 255 446 253 438 255 454 255M711 254 723 254 713 257 711 254 719 252M481 322 477 317M812 249 820 251 835 248 822 247 819 244M812 249 822 247 836 246M840 266 837 263 827 266M928 266 936 264M928 266 937 266M667 338 668 335M667 338 668 340M921 302 902 301 896 298M921 302 929 304 943 305M940 344 942 341M488 301 476 304M665 304 656 300 662 298M989 242 979 242 970 243M702 289 693 287 705 287M946 249 961 248M902 301 908 297 913 299 902 301 908 304 907 307 898 309M910 309 907 307 922 308M1039 332 1047 330 1040 328 1026 327M518 258 512 255M684 305 685 302 676 302 684 305 698 305M775 258 764 256 755 255M775 258 785 256 788 258 776 260 773 264M713 257 728 256 733 254 742 252M713 257 719 259M478 338 459 337 453 341 458 345 427 345 440 344 438 341M478 338 486 336M802 281 813 284M802 281 816 280 824 281M803 295 805 291 815 292 824 293M803 295 801 298 789 297 786 299M803 295 793 294 789 297 803 295 815 292 815 290M691 315 691 317M822 263 837 263 844 261 859 262M798 274 813 273 799 270 808 269 825 270 813 273 808 269 810 267M353 290 343 286M1074 254 1078 252M1074 254 1070 256M1074 254 1062 252 1069 249 1072 246M699 253 711 254M985 340 987 337M440 344 422 341M924 275 912 277M924 275 909 274M924 275 928 273M921 339 922 343M921 339 927 337 940 338 937 336M912 327 897 327M912 327 904 325M675 274 682 272 675 269M413 258 411 263 396 260 413 258M530 258 538 256M530 258 518 258 506 259M1012 245 1001 246M419 290 429 291M419 290 402 289 414 287M592 289 601 292M592 289 605 290M979 242 1003 241 954 240 942 240M693 287 683 286M912 327 904 329M735 277 749 275 745 279M506 339 516 337M506 339 501 341 483 341M958 267 970 268M958 267 949 266M884 302 879 299M385 243 371 241 359 242M695 330 702 328M695 330 692 328M695 330 691 333 694 336 708 336M742 266 752 266 754 270 742 268 742 266 737 264 735 261M841 330 842 327M841 330 855 331 864 334 870 337M841 330 841 333 828 334 832 331 818 332M788 261 788 258 798 258 788 261 776 260M943 251 935 249 922 248M841 285 847 282M869 345 988 345M614 345 597 343 585 344 539 345M627 334 618 335M627 334 642 336 656 338 667 338 683 340M781 307 773 304 758 305 748 305M781 307 785 304 800 303M980 277 987 279M692 274 682 272 691 271M886 280 892 278M1012 329 1021 331M1012 329 1012 326M693 287 691 289M693 287 690 284M873 257 884 256M963 286 956 283 953 286 963 286M376 279 394 280M376 279 356 280 345 279M1020 307 1026 309M985 340 975 340M985 340 997 338M486 287 478 285 491 285M483 282 478 285 466 282M1061 315 1071 313M1061 315 1073 316M701 284 693 287 680 288M582 308 569 310M1002 307 993 305M1002 307 1012 308M347 321 344 324M798 340 790 338 785 336M582 305 582 308 595 307M832 331 841 333M428 276 435 273M765 249 767 247 777 245M945 271 944 268M853 341 843 341M853 341 867 342M358 327 367 329M864 334 876 333M494 321 481 322 479 326M740 247 731 245 721 245M976 286 980 283M836 300 836 303M792 319 781 317M459 337 448 336M448 303 443 300M448 303 435 305M906 244 898 246M906 244 905 241M528 269 523 265M935 249 946 249 956 246M845 255 848 253 838 254 845 255M524 307 514 310 510 315M705 311 699 313 691 315M967 281 969 278M846 323 847 325M549 280 549 277M863 307 850 308M1072 274 1076 271M867 270 860 268M485 264 497 264M485 264 477 261M785 247 791 249M932 293 946 291M956 261 962 257M822 247 813 246M822 247 830 244 822 241 809 244M1056 290 1040 290 1033 292M792 325 785 328 777 330 768 331M1028 244 1036 243M927 315 936 318M731 267 737 264M848 291 838 290M1072 280 1079 278M775 326 792 325M593 281 579 280M893 319 901 317M928 243 925 246M622 327 628 330M877 242 885 243M394 304 394 309M770 274 779 273 788 274M770 274 767 271M656 300 644 302M552 265 536 265M708 315 716 312M708 315 699 313 691 311M353 290 363 294 350 293M820 251 811 252M820 251 822 247M593 311 582 308M881 339 890 338M872 305 863 307M872 305 876 309M771 293 775 290M982 321 972 322M639 341 641 343M649 291 644 287M1079 305 1080 319M665 330 676 330M665 330 650 330M855 294 862 296M1046 292 1044 294M1046 292 1040 290M608 256 619 254 615 252M461 328 454 326 452 322M798 340 802 342M754 279 749 275M446 328 454 326M958 267 964 265M428 298 410 296M839 293 848 291M824 340 831 343M1047 342 1055 343M943 285 953 286M917 316 927 315M832 331 841 330M669 244 669 240M999 310 1002 307" fill="none" stroke="#000" stroke-width="1" shape-rendering="crispEdges"/>
<polyline points="458,248 510,254 560,260 610,266.5 661,273 720,278 760,280.5 860,285.5 960,289.5 1069,291" fill="none" stroke="#000" stroke-width="2"/>
<polyline points="458,248 353,298" fill="none" stroke="#000" stroke-width="2.5"/>
<polyline points="353,298 400,304 476,313 553,321 660,329.5 760,334.5 860,337.5 965,339" fill="none" stroke="#000" stroke-width="2"/>
<polyline points="965,339 1069,291" fill="none" stroke="#000" stroke-width="2.5"/>
<polygon points="404,631 416,622 444,621 456,628 452,637 420,638" fill="#000" />
<ellipse cx="438" cy="632" rx="11" ry="4" fill="#1a90d0"/>
<path d="M429 629V636M434 628V637M439 628V637M444 628V637M427 632H449" stroke="#000" stroke-width="0.8" fill="none"/>
<path d="M416 637L428 630L436 631L430 639Z" fill="#0000b0"/>
<path d="M404 631L410 609M409 630L415 610M414 630L420 611M419 629L425 612M424 628L430 614" stroke="#c88a10" stroke-width="2.6" fill="none"/>
<path d="M406.5 630L412.5 609.5M411.5 630L417.5 610.5M416.5 629.5L422.5 611.5M421.5 628.5L427.5 613" stroke="#000" stroke-width="1" fill="none"/>
</svg><div class="vt" style="left:5px;top:16px;font-weight:bold;font-size:11.4px">B: Copy of Static Structural</div>
<div class="vt" style="left:5px;top:31px;font-size:11.5px">Total Deformation</div>
<div class="vt" style="left:5px;top:46px;font-size:11.5px">Type: Total Deformation</div>
<div class="vt" style="left:5px;top:61px;font-size:11.5px">Unit: m</div>
<div class="vt" style="left:5px;top:76px;font-size:11.5px">Time: 0.38182 s</div>
<div class="vt" style="left:5px;top:91px;font-size:11.5px">Deformation Scale Factor: 6.6e+005 (Auto Scale)</div>
<div class="vt" style="left:5px;top:106px;font-size:11.5px">26/04/2023 13:21</div>
<svg class="a" style="left:6px;top:140px" width="16" height="153" viewBox="0 0 16 153">
 <rect x="0" y="0" width="16" height="153" fill="#000"/>
 <rect x="1" y="3" width="14" height="15.4" fill="#ff0000"/>
 <rect x="1" y="19.4" width="14" height="15.4" fill="#ffaa00"/>
 <rect x="1" y="35.8" width="14" height="15.4" fill="#ffff00"/>
 <rect x="1" y="52.2" width="14" height="15.4" fill="#aaff00"/>
 <rect x="1" y="68.6" width="14" height="15.4" fill="#00ee00"/>
 <rect x="1" y="85" width="14" height="15.4" fill="#00ffaa"/>
 <rect x="1" y="101.4" width="14" height="15.4" fill="#00ffff"/>
 <rect x="1" y="117.8" width="14" height="15.4" fill="#00aaff"/>
 <rect x="1" y="134.2" width="14" height="15.8" fill="#0000ff"/>
</svg>
<div class="vt" style="left:30px;top:135px;font-weight:bold;font-size:12.2px">4.4138e-9 Max</div>
<div class="vt" style="left:30px;top:151.5px;font-size:11.2px">3.9234e-9</div>
<div class="vt" style="left:30px;top:168px;font-size:11.2px">3.433e-9</div>
<div class="vt" style="left:30px;top:184.7px;font-size:11.2px">2.9425e-9</div>
<div class="vt" style="left:30px;top:201.3px;font-size:11.2px">2.4521e-9</div>
<div class="vt" style="left:30px;top:218px;font-size:11.2px">1.9617e-9</div>
<div class="vt" style="left:30px;top:234.6px;font-size:11.2px">1.4713e-9</div>
<div class="vt" style="left:30px;top:251.3px;font-size:11.2px">9.8085e-10</div>
<div class="vt" style="left:30px;top:268px;font-size:11.2px">4.9042e-10</div>
<div class="vt" style="left:30px;top:285px;font-weight:bold;font-size:11.9px">0 Min</div>
<div class="vt" style="left:1340px;top:22px;font-weight:bold;font-size:29px;line-height:30px;color:#fff;letter-spacing:0px;transform:scaleX(1.13);transform-origin:0 0;-webkit-text-stroke:0.6px #fff">Ansys</div>
<div class="vt" style="left:1370px;top:55px;font-size:18px;line-height:18px;color:#fff">2021 R2</div>
<svg class="a" style="left:480px;top:586px" width="520" height="40" viewBox="0 0 520 40">
 <rect x="1.5" y="2.5" width="480" height="12" fill="#fff" stroke="#000" stroke-width="1"/>
 <rect x="1.5" y="2.5" width="120" height="12" fill="#000"/>
 <rect x="241.5" y="2.5" width="120" height="12" fill="#000"/>
</svg>
<div class="vt" style="left:479px;top:575px;font-size:10.5px">0</div>
<div class="vt" style="left:707px;top:575px;font-size:10.5px">0.015</div>
<div class="vt" style="left:951px;top:575px;font-size:10.5px">0.03 (m)</div>
<div class="vt" style="left:584px;top:607px;font-size:10.5px">0.0075</div>
<div class="vt" style="left:828px;top:607px;font-size:10.5px">0.022</div>
<svg class="a" style="left:1250px;top:432px" width="120" height="140" viewBox="1250 595 120 140">
 <defs>
  <radialGradient id="gcy" cx="0.6" cy="0.35" r="0.7"><stop offset="0" stop-color="#7ff0f0"/><stop offset="0.5" stop-color="#18c0c8"/><stop offset="1" stop-color="#0a7a88"/></radialGradient>
  <radialGradient id="grd" cx="0.55" cy="0.35" r="0.7"><stop offset="0" stop-color="#ff4040"/><stop offset="0.6" stop-color="#d00000"/><stop offset="1" stop-color="#800000"/></radialGradient>
 </defs>
 <text x="1350.5" y="615.5" font-family="Liberation Sans" font-size="11" fill="#22aa22">Y</text>
 <path d="M1349 646H1354V707H1349Z" fill="#0a780a"/>
 <path d="M1350.5 646H1352.5V706H1350.5Z" fill="#1a9a1a"/>
 <path d="M1351.5 627.5L1359.5 647.5H1343.5Z" fill="#0a7a0a"/>
 <path d="M1351.5 628L1353.5 647H1350Z" fill="#22a022"/>
 <circle cx="1304.5" cy="673" r="7.7" fill="url(#gcy)"/>
 <path d="M1293 701L1352 704.5V708.5L1293 706Z" fill="#0000a0"/>
 <path d="M1275.5 703L1297 693.5V711Z" fill="#00009a"/>
 <path d="M1292 695L1297 693.5V711L1292 709Z" fill="#1010d0"/>
 <text x="1263.5" y="701" font-family="Liberation Sans" font-size="11" fill="#2020e0">Z</text>
 <path d="M1352 704L1353 709L1336 718L1333 711Z" fill="#c00000"/>
 <circle cx="1331.5" cy="715" r="6.5" fill="url(#grd)"/>
 <text x="1320.5" y="721" font-family="Liberation Sans" font-size="10" fill="#ee1111">X</text>
</svg>
</div>
</body></html>
